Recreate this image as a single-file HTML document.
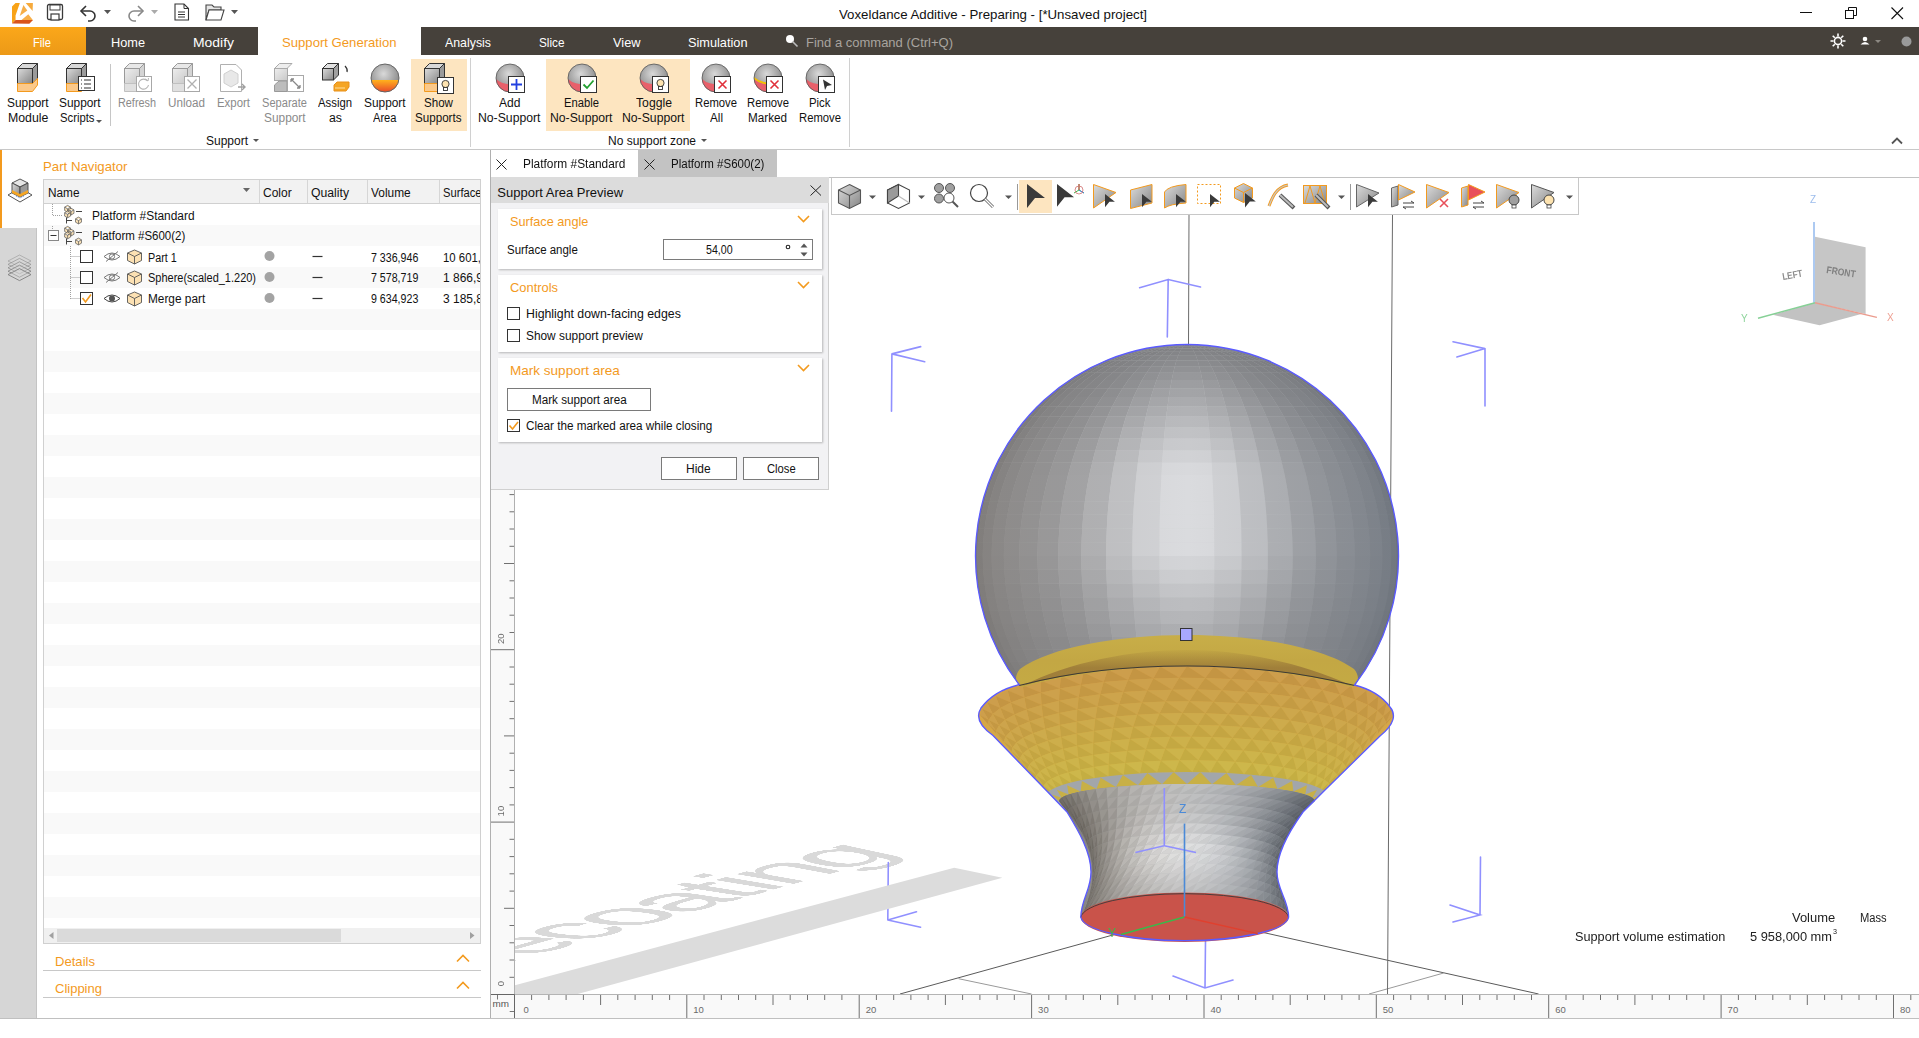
<!DOCTYPE html>
<html><head><meta charset="utf-8">
<style>
*{margin:0;padding:0;box-sizing:border-box}
html,body{width:1919px;height:1038px;overflow:hidden;background:#fff;font-family:"Liberation Sans",sans-serif;font-size:12px;color:#000;position:relative}
.a{position:absolute;display:block}
.t{position:absolute;white-space:nowrap;line-height:1;transform-origin:0 0}
</style></head><body>
<div class="t" style="left:839.00px;top:8.40px;font-size:13px;color:#111;transform:scaleX(1.0197);">Voxeldance Additive - Preparing - [*Unsaved project]</div>
<svg class="a" style="left:8px;top:0px;" width="28" height="27" viewBox="0 0 28 27"><path d="M4 6.5 L7.55 3 H11.85 L7.55 15.6 V20.05 L4 23.6Z" fill="#f8a318"/>
<path d="M15.4 4.95 L19.3 10.4 L11.7 15.9Z" fill="#f6ae48"/>
<path d="M17.7 3 H24.9 L24.6 10.9Z" fill="#f6aa3c"/>
<path d="M13.5 20.05 L20.3 14.2 L25 20.3Z" fill="#f7ae48"/>
<path d="M4 23.6 L7.55 20.05 H25 L21.35 23.8Z" fill="#d9541a"/></svg>
<svg class="a" style="left:46px;top:3px;" width="18" height="18" viewBox="0 0 18 18"><rect x="1.5" y="1.5" width="15" height="15" rx="1.5" fill="#fff" stroke="#3a3a3a" stroke-width="1.3"/><rect x="4" y="2" width="10" height="5" fill="#fff" stroke="#3a3a3a" stroke-width="1"/><rect x="5" y="11" width="8" height="6" fill="#fff" stroke="#3a3a3a" stroke-width="1.2"/></svg>
<svg class="a" style="left:78px;top:3px;" width="22" height="20" viewBox="0 0 22 20"><path d="M4 8 H12 A5 5 0 0 1 12 18 H10" fill="none" stroke="#333" stroke-width="1.6"/><path d="M8 3 L3 8 L8 13" fill="none" stroke="#333" stroke-width="1.6"/></svg>
<svg class="a" style="left:104px;top:10px;" width="8" height="5" viewBox="0 0 8 5"><path d="M0 0 H7 L3.5 4Z" fill="#555"/></svg>
<svg class="a" style="left:124px;top:3px;" width="22" height="20" viewBox="0 0 22 20"><path d="M18 8 H10 A5 5 0 0 0 10 18 H12" fill="none" stroke="#888" stroke-width="1.6"/><path d="M14 3 L19 8 L14 13" fill="none" stroke="#888" stroke-width="1.6"/></svg>
<svg class="a" style="left:151px;top:10px;" width="8" height="5" viewBox="0 0 8 5"><path d="M0 0 H7 L3.5 4Z" fill="#aaa"/></svg>
<svg class="a" style="left:174px;top:3px;" width="16" height="18" viewBox="0 0 16 18"><path d="M1 1 H10 L14.5 5.5 V17 H1Z" fill="#fff" stroke="#333" stroke-width="1.1"/><path d="M10 1 V5.5 H14.5" fill="none" stroke="#333"/><path d="M4 9H11M4 11.5H11M4 14H11" stroke="#333" stroke-width="1"/></svg>
<svg class="a" style="left:205px;top:3px;" width="20" height="18" viewBox="0 0 20 18"><path d="M1 2 H7 L9 4 H16 V7 H4 L1 17Z" fill="#e6e6e6" stroke="#444" stroke-width="1.1"/><path d="M1 17 L4 7 H19 L16 17Z" fill="#fff" stroke="#444" stroke-width="1.1"/></svg>
<svg class="a" style="left:231px;top:10px;" width="8" height="5" viewBox="0 0 8 5"><path d="M0 0 H7 L3.5 4Z" fill="#555"/></svg>
<div class="a" style="left:1800px;top:12px;width:12px;height:1px;background:#111;"></div>
<svg class="a" style="left:1845px;top:7px;" width="12" height="12" viewBox="0 0 12 12"><rect x="0.5" y="3.5" width="8" height="8" fill="none" stroke="#111"/><path d="M3.5 3.5 V0.5 H11.5 V8.5 H8.5" fill="none" stroke="#111"/></svg>
<svg class="a" style="left:1891px;top:7px;" width="13" height="13" viewBox="0 0 13 13"><path d="M0.5 0.5 L12 12 M12 0.5 L0.5 12" stroke="#111" stroke-width="1.1"/></svg>
<div class="a" style="left:0px;top:27px;width:1919px;height:28px;background:#46413b;"></div>
<div class="a" style="left:0px;top:27px;width:86px;height:28px;background:linear-gradient(#fba71a,#ec9917);"></div>
<div class="t" style="left:33.00px;top:35.50px;font-size:13px;color:#fff;transform:scaleX(0.8591);">File</div>
<div class="t" style="left:110.50px;top:35.50px;font-size:13px;color:#fff;transform:scaleX(0.9802);">Home</div>
<div class="t" style="left:193.00px;top:35.50px;font-size:13px;color:#fff;transform:scaleX(1.0706);">Modify</div>
<div class="a" style="left:258px;top:27px;width:163px;height:28px;background:#fff;"></div>
<div class="t" style="left:282.00px;top:35.50px;font-size:13px;color:#f39a1e;transform:scaleX(1.0091);">Support Generation</div>
<div class="t" style="left:445.00px;top:35.50px;font-size:13px;color:#fff;transform:scaleX(0.9500);">Analysis</div>
<div class="t" style="left:539.00px;top:35.50px;font-size:13px;color:#fff;transform:scaleX(0.9047);">Slice</div>
<div class="t" style="left:612.50px;top:35.50px;font-size:13px;color:#fff;transform:scaleX(0.9838);">View</div>
<div class="t" style="left:688.00px;top:35.50px;font-size:13px;color:#fff;transform:scaleX(0.9802);">Simulation</div>
<svg class="a" style="left:785px;top:34px;" width="14" height="14" viewBox="0 0 14 14"><circle cx="5" cy="5" r="4" fill="#fff"/><path d="M7.5 7.5 L12.5 12.5" stroke="#bbb" stroke-width="1.6"/></svg>
<div class="t" style="left:806.00px;top:35.50px;font-size:13px;color:#a8a49f;">Find a command (Ctrl+Q)</div>
<svg class="a" style="left:1830px;top:33px;" width="16" height="16" viewBox="0 0 16 16"><g fill="none" stroke="#fff" stroke-width="1.6"><circle cx="8" cy="8" r="3.6"/><path d="M8 0.5V3.5M8 12.5V15.5M0.5 8H3.5M12.5 8H15.5M2.7 2.7L4.8 4.8M11.2 11.2L13.3 13.3M13.3 2.7L11.2 4.8M4.8 11.2L2.7 13.3"/></g></svg>
<svg class="a" style="left:1860px;top:36px;" width="10" height="9" viewBox="0 0 10 9"><circle cx="5" cy="3" r="2.3" fill="#fff"/><path d="M0.5 8.5 Q5 3.5 9.5 8.5Z" fill="#fff"/></svg>
<svg class="a" style="left:1875px;top:40px;" width="6" height="4" viewBox="0 0 6 4"><path d="M0 0H6L3 3Z" fill="#8c8882"/></svg>
<svg class="a" style="left:1901px;top:36px;" width="11" height="11" viewBox="0 0 11 11"><circle cx="5.5" cy="5.5" r="5" fill="#9a9a9a"/></svg>
<div class="a" style="left:0px;top:55px;width:1919px;height:94px;background:#fff;"></div>
<div class="a" style="left:0px;top:149px;width:1919px;height:1px;background:#c8c8c8;"></div>
<div class="a" style="left:411px;top:59px;width:56px;height:72px;background:#fde5c0;"></div>
<div class="a" style="left:546px;top:59px;width:144px;height:72px;background:#fde5c0;"></div>
<div class="a" style="left:110px;top:64px;width:1px;height:62px;background:#c6c6c6;"></div>
<div class="a" style="left:470px;top:58px;width:1px;height:89px;background:#d0d0d0;"></div>
<div class="a" style="left:849px;top:58px;width:1px;height:89px;background:#d0d0d0;"></div>
<svg class="a" style="left:1891px;top:137px;" width="12" height="8" viewBox="0 0 12 8"><path d="M1 6.5 L6 1.5 L11 6.5" fill="none" stroke="#555" stroke-width="1.8"/></svg>
<svg class="a" style="left:0;top:0" width="0" height="0"><defs>
<linearGradient id="cg" x1="0" y1="0" x2="1" y2="1"><stop offset="0" stop-color="#dcdcdc"/><stop offset="1" stop-color="#858585"/></linearGradient>
<linearGradient id="cgg" x1="0" y1="0" x2="1" y2="1"><stop offset="0" stop-color="#eeeeee"/><stop offset="1" stop-color="#c8c8c8"/></linearGradient>
<radialGradient id="sg" cx="0.45" cy="0.35" r="0.7"><stop offset="0" stop-color="#d9d9d9"/><stop offset="1" stop-color="#7d7d7d"/></radialGradient>
<linearGradient id="og" x1="0" y1="0" x2="0" y2="1"><stop offset="0" stop-color="#ffb21c"/><stop offset="1" stop-color="#e8402a"/></linearGradient>
</defs></svg>
<svg class="a" style="left:0;top:0" width="900" height="150"><g transform="translate(17,63)">
<path d="M0.5 5.5 L5.5 0.5 H20.5 L15.5 5.5Z" fill="#d8d8d8" stroke="#333" stroke-width="1"/>
<path d="M15.5 5.5 L20.5 0.5 V15.5 L15.5 20.5Z" fill="#9a9a9a" stroke="#333" stroke-width="1"/>
<rect x="0.5" y="5.5" width="15" height="15" fill="url(#cg)" stroke="#333" stroke-width="1"/>
<path d="M0.5 20.5 H15.5 L20.5 15.5 V22 L15.5 28.5 H0.5Z" fill="#fbc98a" stroke="#f39a1e" stroke-width="1"/>
</g><g transform="translate(66,63)">
<path d="M0.5 5.5 L5.5 0.5 H20.5 L15.5 5.5Z" fill="#d8d8d8" stroke="#333" stroke-width="1"/>
<path d="M15.5 5.5 L20.5 0.5 V15.5 L15.5 20.5Z" fill="#9a9a9a" stroke="#333" stroke-width="1"/>
<rect x="0.5" y="5.5" width="15" height="15" fill="url(#cg)" stroke="#333" stroke-width="1"/>
<path d="M0.5 20.5 H15.5 L20.5 15.5 V22 L15.5 28.5 H0.5Z" fill="#fbc98a" stroke="#f39a1e" stroke-width="1"/>
</g><g transform="translate(78,76)"><rect x="0.5" y="0.5" width="16" height="14" fill="#fff" stroke="#333" stroke-width="1"/><path d="M3 4H4M6 4H13M3 8H4M6 8H13M3 12H4M6 12H13" stroke="#333" stroke-width="1.2"/></g><g transform="translate(124,63)">
<path d="M0.5 5.5 L5.5 0.5 H20.5 L15.5 5.5Z" fill="#e8e8e8" stroke="#9a9a9a" stroke-width="1"/>
<path d="M15.5 5.5 L20.5 0.5 V15.5 L15.5 20.5Z" fill="#d4d4d4" stroke="#9a9a9a" stroke-width="1"/>
<rect x="0.5" y="5.5" width="15" height="15" fill="url(#cgg)" stroke="#9a9a9a" stroke-width="1"/>
<path d="M0.5 20.5 H15.5 L20.5 15.5 V22 L15.5 28.5 H0.5Z" fill="#e0e0e0" stroke="#c0c0c0" stroke-width="1"/>
</g><g transform="translate(136,76)"><rect x="0.5" y="0.5" width="15" height="15" fill="#fff" stroke="#a8a8a8"/><path d="M11.5 5 A5 5 0 1 0 12.5 9" fill="none" stroke="#b5b5b5" stroke-width="1.1"/><path d="M9.5 3 L12 5 L12.5 2" fill="none" stroke="#b5b5b5"/></g><g transform="translate(172,63)">
<path d="M0.5 5.5 L5.5 0.5 H20.5 L15.5 5.5Z" fill="#e8e8e8" stroke="#9a9a9a" stroke-width="1"/>
<path d="M15.5 5.5 L20.5 0.5 V15.5 L15.5 20.5Z" fill="#d4d4d4" stroke="#9a9a9a" stroke-width="1"/>
<rect x="0.5" y="5.5" width="15" height="15" fill="url(#cgg)" stroke="#9a9a9a" stroke-width="1"/>
<path d="M0.5 20.5 H15.5 L20.5 15.5 V22 L15.5 28.5 H0.5Z" fill="#e0e0e0" stroke="#c0c0c0" stroke-width="1"/>
</g><g transform="translate(184,76)"><rect x="0.5" y="0.5" width="15" height="15" fill="#fff" stroke="#a8a8a8"/><path d="M3.5 3.5 L12.5 12.5 M12.5 3.5 L3.5 12.5" stroke="#b0b0b0" stroke-width="1.3"/></g><g transform="translate(220,64)"><path d="M0.5 0.5 H16 L21.5 6 V27.5 H0.5Z" fill="#fff" stroke="#b0b0b0"/><path d="M4 10 L11 6 L18 10 V19 L11 23 L4 19Z" fill="#e8e8e8" stroke="#d0d0d0"/><path d="M18 23 H25 M22 20 L25 23 L22 26" fill="none" stroke="#a0a0a0" stroke-width="1.4"/></g><g transform="translate(274,63)"><path d="M0.5 5.5 L5.5 0.5 H18 L13 5.5Z" fill="#eee" stroke="#aaa"/><rect x="0.5" y="5.5" width="13" height="12" fill="url(#cgg)" stroke="#aaa"/><path d="M0.5 22 L5 18 H13 V28.5 H0.5Z" fill="#bcbcbc" stroke="#999"/><rect x="13.5" y="12.5" width="16" height="16" fill="#fff" stroke="#a8a8a8"/><path d="M17 16 L26 25 M17 16 h3 M17 16 v3 M26 25 h-3 M26 25 v-3" stroke="#888" stroke-width="1.3" fill="none"/></g><g transform="translate(322,63)"><path d="M0.5 5.5 L5.5 0.5 H16.5 L11.5 5.5Z" fill="#e2e2e2" stroke="#333"/><path d="M11.5 5.5 L16.5 0.5 V12 L11.5 17Z" fill="#a0a0a0" stroke="#333"/><rect x="0.5" y="5.5" width="11" height="11.5" fill="url(#cg)" stroke="#333"/><path d="M23 3 Q26 6 25 9" fill="none" stroke="#333" stroke-width="1.2"/><path d="M12 22 L15 19 H27 V24 L24 28 H12Z" fill="#f5a524" stroke="#e8901a"/><path d="M13 25 H23" stroke="#ffe0a0" stroke-width="1"/></g><g transform="translate(370,63)"><clipPath id="sc1"><circle cx="15" cy="15" r="14"/></clipPath><circle cx="15" cy="15" r="14" fill="url(#sg)"/><rect x="0" y="17" width="30" height="13" fill="url(#og)" clip-path="url(#sc1)"/><circle cx="15" cy="15" r="14" fill="none" stroke="#666" stroke-width="1"/></g><g transform="translate(424,63)">
<path d="M0.5 5.5 L5.5 0.5 H20.5 L15.5 5.5Z" fill="#d8d8d8" stroke="#333" stroke-width="1"/>
<path d="M15.5 5.5 L20.5 0.5 V15.5 L15.5 20.5Z" fill="#9a9a9a" stroke="#333" stroke-width="1"/>
<rect x="0.5" y="5.5" width="15" height="15" fill="url(#cg)" stroke="#333" stroke-width="1"/>
<path d="M0.5 20.5 H15.5 L20.5 15.5 V22 L15.5 28.5 H0.5Z" fill="#fbc98a" stroke="#f39a1e" stroke-width="1"/>
</g><g transform="translate(437,77)"><rect x="0.5" y="0.5" width="16" height="16" fill="#fff" stroke="#333"/><circle cx="8.5" cy="7" r="3.6" fill="#fde3b0" stroke="#333" stroke-width="0.9"/><rect x="6.5" y="10.5" width="4" height="3" fill="#fff" stroke="#333" stroke-width="0.9"/></g><g transform="translate(495,63)"><clipPath id="ns510"><circle cx="15" cy="15" r="14"/></clipPath><circle cx="15" cy="15" r="14" fill="url(#sg)"/><path d="M0 15 Q8 24 30 21 V30 H0Z" fill="#e8606a" clip-path="url(#ns510)"/><circle cx="15" cy="15" r="14" fill="none" stroke="#555" stroke-width="0.8"/><rect x="13.5" y="13.5" width="16" height="16" fill="#fff" stroke="#333"/><path d="M21.5 16 V27 M16 21.5 H27" stroke="#2140e0" stroke-width="1.8"/></g><g transform="translate(567,63)"><clipPath id="ns582"><circle cx="15" cy="15" r="14"/></clipPath><circle cx="15" cy="15" r="14" fill="url(#sg)"/><path d="M0 15 Q8 24 30 21 V30 H0Z" fill="#e8606a" clip-path="url(#ns582)"/><circle cx="15" cy="15" r="14" fill="none" stroke="#555" stroke-width="0.8"/><rect x="13.5" y="13.5" width="16" height="16" fill="#fff" stroke="#333"/><path d="M16.5 21.5 L20 25 L26.5 17.5" fill="none" stroke="#22a030" stroke-width="1.8"/></g><g transform="translate(639,63)"><clipPath id="ns654"><circle cx="15" cy="15" r="14"/></clipPath><circle cx="15" cy="15" r="14" fill="url(#sg)"/><path d="M0 15 Q8 24 30 21 V30 H0Z" fill="#e8606a" clip-path="url(#ns654)"/><circle cx="15" cy="15" r="14" fill="none" stroke="#555" stroke-width="0.8"/><rect x="13.5" y="13.5" width="16" height="16" fill="#fff" stroke="#333"/><circle cx="21.5" cy="20" r="3.6" fill="#fde3b0" stroke="#333" stroke-width="0.9"/><rect x="19.5" y="23.5" width="4" height="3" fill="#fff" stroke="#333" stroke-width="0.9"/></g><g transform="translate(701,63)"><clipPath id="ns716"><circle cx="15" cy="15" r="14"/></clipPath><circle cx="15" cy="15" r="14" fill="url(#sg)"/><path d="M0 15 Q8 24 30 21 V30 H0Z" fill="#e8606a" clip-path="url(#ns716)"/><circle cx="15" cy="15" r="14" fill="none" stroke="#555" stroke-width="0.8"/><rect x="13.5" y="13.5" width="16" height="16" fill="#fff" stroke="#333"/><path d="M17.5 17.5 L25.5 25.5 M25.5 17.5 L17.5 25.5" stroke="#e0303a" stroke-width="1.6"/></g><g transform="translate(753,63)"><clipPath id="ns768"><circle cx="15" cy="15" r="14"/></clipPath><circle cx="15" cy="15" r="14" fill="url(#sg)"/><path d="M0 15 Q8 24 30 21 V30 H0Z" fill="#e8606a" clip-path="url(#ns768)"/><path d="M0 13 Q8 22 30 19 L30 21 Q8 24 0 15Z" fill="#f5c000" clip-path="url(#ns768)"/><circle cx="15" cy="15" r="14" fill="none" stroke="#555" stroke-width="0.8"/><rect x="13.5" y="13.5" width="16" height="16" fill="#fff" stroke="#333"/><path d="M17.5 17.5 L25.5 25.5 M25.5 17.5 L17.5 25.5" stroke="#e0303a" stroke-width="1.6"/></g><g transform="translate(805,63)"><clipPath id="ns820"><circle cx="15" cy="15" r="14"/></clipPath><circle cx="15" cy="15" r="14" fill="url(#sg)"/><path d="M0 15 Q8 24 30 21 V30 H0Z" fill="#e8606a" clip-path="url(#ns820)"/><circle cx="15" cy="15" r="14" fill="none" stroke="#555" stroke-width="0.8"/><rect x="13.5" y="13.5" width="16" height="16" fill="#fff" stroke="#333"/><path d="M18 16.5 L27 22 L22 23 L20 27Z" fill="#333"/></g></svg>
<div class="t" style="left:7.20px;top:96.82px;font-size:12.5px;color:#111;transform:scaleX(0.9502);">Support</div>
<div class="t" style="left:7.80px;top:112.12px;font-size:12.5px;color:#111;transform:scaleX(0.9854);">Module</div>
<div class="t" style="left:59.30px;top:96.82px;font-size:12.5px;color:#111;transform:scaleX(0.9502);">Support</div>
<div class="t" style="left:60.00px;top:112.12px;font-size:12.5px;color:#111;transform:scaleX(0.9031);">Scripts</div>
<svg class="a" style="left:96px;top:120px;" width="6" height="4" viewBox="0 0 6 4"><path d="M0 0H6L3 3Z" fill="#555"/></svg>
<div class="t" style="left:118.30px;top:96.82px;font-size:12.5px;color:#8a8a8a;transform:scaleX(0.8680);">Refresh</div>
<div class="t" style="left:167.50px;top:96.82px;font-size:12.5px;color:#8a8a8a;transform:scaleX(0.9338);">Unload</div>
<div class="t" style="left:217.00px;top:96.82px;font-size:12.5px;color:#8a8a8a;transform:scaleX(0.9131);">Export</div>
<div class="t" style="left:262.00px;top:96.82px;font-size:12.5px;color:#8a8a8a;transform:scaleX(0.8870);">Separate</div>
<div class="t" style="left:263.70px;top:112.12px;font-size:12.5px;color:#8a8a8a;transform:scaleX(0.9502);">Support</div>
<div class="t" style="left:318.00px;top:96.82px;font-size:12.5px;color:#111;transform:scaleX(0.9059);">Assign</div>
<div class="t" style="left:328.50px;top:112.12px;font-size:12.5px;color:#111;transform:scaleX(0.9846);">as</div>
<div class="t" style="left:364.20px;top:96.82px;font-size:12.5px;color:#111;transform:scaleX(0.9502);">Support</div>
<div class="t" style="left:373.25px;top:112.12px;font-size:12.5px;color:#111;transform:scaleX(0.8899);">Area</div>
<div class="t" style="left:424.00px;top:96.82px;font-size:12.5px;color:#111;transform:scaleX(0.9271);">Show</div>
<div class="t" style="left:415.25px;top:112.12px;font-size:12.5px;color:#111;transform:scaleX(0.9294);">Supports</div>
<div class="t" style="left:498.75px;top:96.82px;font-size:12.5px;color:#111;transform:scaleX(0.9663);">Add</div>
<div class="t" style="left:478.25px;top:112.12px;font-size:12.5px;color:#111;transform:scaleX(0.9775);">No-Support</div>
<div class="t" style="left:564.00px;top:96.82px;font-size:12.5px;color:#111;transform:scaleX(0.8989);">Enable</div>
<div class="t" style="left:550.25px;top:112.12px;font-size:12.5px;color:#111;transform:scaleX(0.9775);">No-Support</div>
<div class="t" style="left:635.50px;top:96.82px;font-size:12.5px;color:#111;transform:scaleX(0.9771);">Toggle</div>
<div class="t" style="left:622.25px;top:112.12px;font-size:12.5px;color:#111;transform:scaleX(0.9775);">No-Support</div>
<div class="t" style="left:695.00px;top:96.82px;font-size:12.5px;color:#111;transform:scaleX(0.9023);">Remove</div>
<div class="t" style="left:709.50px;top:112.12px;font-size:12.5px;color:#111;transform:scaleX(0.9348);">All</div>
<div class="t" style="left:746.50px;top:96.82px;font-size:12.5px;color:#111;transform:scaleX(0.9023);">Remove</div>
<div class="t" style="left:748.00px;top:112.12px;font-size:12.5px;color:#111;transform:scaleX(0.9355);">Marked</div>
<div class="t" style="left:808.75px;top:96.82px;font-size:12.5px;color:#111;transform:scaleX(0.9101);">Pick</div>
<div class="t" style="left:798.50px;top:112.12px;font-size:12.5px;color:#111;transform:scaleX(0.9023);">Remove</div>
<div class="t" style="left:206.00px;top:135.12px;font-size:12.5px;color:#111;transform:scaleX(0.9593);">Support</div>
<svg class="a" style="left:253px;top:139px;" width="6" height="4" viewBox="0 0 6 4"><path d="M0 0H6L3 3Z" fill="#555"/></svg>
<div class="t" style="left:608.00px;top:135.12px;font-size:12.5px;color:#111;transform:scaleX(0.9593);">No support zone</div>
<svg class="a" style="left:701px;top:139px;" width="6" height="4" viewBox="0 0 6 4"><path d="M0 0H6L3 3Z" fill="#555"/></svg>
<div class="a" style="left:0px;top:150px;width:37px;height:868px;background:#d6d6d6;"></div>
<div class="a" style="left:36px;top:150px;width:1px;height:868px;background:#c4c4c4;"></div>
<div class="a" style="left:0px;top:150px;width:37px;height:78px;background:#fff;"></div>
<div class="a" style="left:0px;top:150px;width:2px;height:78px;background:#f39a1e;"></div>
<svg class="a" style="left:7px;top:175px;" width="26" height="30" viewBox="0 0 26 30"><path d="M1 20 L13 13 L25 20 L13 27Z" fill="#fff" stroke="#555" stroke-width="1"/>
<path d="M5 8 L13 4 L21 8 L13 12Z" fill="#e6e6e6" stroke="#444" stroke-width="0.9"/>
<path d="M5 8 V18 L13 22 V12Z" fill="url(#cg)" stroke="#444" stroke-width="0.9"/>
<path d="M21 8 V18 L13 22 V12Z" fill="#9a9a9a" stroke="#444" stroke-width="0.9"/>
<path d="M5 15 L13 19 L21 15 V18 L13 22 L5 18Z" fill="#f6a623"/>
<path d="M9 21 L13 23 L17 21" fill="none" stroke="#4a7fe0" stroke-width="0.8" stroke-dasharray="1 1"/></svg>
<svg class="a" style="left:7px;top:254px;" width="25" height="29" viewBox="0 0 25 29"><path d="M1 7.0 L12.5 1.0 L24 7.0 L12.5 13.0Z" fill="#d6d6d6" fill-opacity="0.35"/><path d="M1 7.0 L12.5 1.0 L24 7.0 L12.5 13.0Z" fill="none" stroke="#7a7a7a" stroke-opacity="0.45" stroke-width="0.9"/><path d="M1 10.4 L12.5 4.4 L24 10.4 L12.5 16.4Z" fill="#d6d6d6" fill-opacity="0.35"/><path d="M1 10.4 L12.5 4.4 L24 10.4 L12.5 16.4Z" fill="none" stroke="#7a7a7a" stroke-opacity="0.57" stroke-width="0.9"/><path d="M1 13.8 L12.5 7.8 L24 13.8 L12.5 19.8Z" fill="#d6d6d6" fill-opacity="0.35"/><path d="M1 13.8 L12.5 7.8 L24 13.8 L12.5 19.8Z" fill="none" stroke="#7a7a7a" stroke-opacity="0.69" stroke-width="0.9"/><path d="M1 17.2 L12.5 11.2 L24 17.2 L12.5 23.2Z" fill="#d6d6d6" fill-opacity="0.35"/><path d="M1 17.2 L12.5 11.2 L24 17.2 L12.5 23.2Z" fill="none" stroke="#7a7a7a" stroke-opacity="0.81" stroke-width="0.9"/><path d="M1 20.6 L12.5 14.6 L24 20.6 L12.5 26.6Z" fill="#d6d6d6" fill-opacity="0.35"/><path d="M1 20.6 L12.5 14.6 L24 20.6 L12.5 26.6Z" fill="none" stroke="#7a7a7a" stroke-opacity="0.93" stroke-width="0.9"/></svg>
<div class="a" style="left:37px;top:150px;width:453px;height:868px;background:#fff;"></div>
<div class="t" style="left:43.00px;top:159.90px;font-size:13px;color:#f39a1e;transform:scaleX(1.0169);">Part Navigator</div>
<div class="a" style="left:43px;top:179px;width:438px;height:765px;background:#fff;border:1px solid #d0d0d0;"></div>
<div class="a" style="left:44px;top:225px;width:436px;height:21px;background:#f9f9f9;"></div>
<div class="a" style="left:44px;top:267px;width:436px;height:21px;background:#f9f9f9;"></div>
<div class="a" style="left:44px;top:309px;width:436px;height:21px;background:#f9f9f9;"></div>
<div class="a" style="left:44px;top:351px;width:436px;height:21px;background:#f9f9f9;"></div>
<div class="a" style="left:44px;top:393px;width:436px;height:21px;background:#f9f9f9;"></div>
<div class="a" style="left:44px;top:435px;width:436px;height:21px;background:#f9f9f9;"></div>
<div class="a" style="left:44px;top:477px;width:436px;height:21px;background:#f9f9f9;"></div>
<div class="a" style="left:44px;top:519px;width:436px;height:21px;background:#f9f9f9;"></div>
<div class="a" style="left:44px;top:561px;width:436px;height:21px;background:#f9f9f9;"></div>
<div class="a" style="left:44px;top:603px;width:436px;height:21px;background:#f9f9f9;"></div>
<div class="a" style="left:44px;top:645px;width:436px;height:21px;background:#f9f9f9;"></div>
<div class="a" style="left:44px;top:687px;width:436px;height:21px;background:#f9f9f9;"></div>
<div class="a" style="left:44px;top:729px;width:436px;height:21px;background:#f9f9f9;"></div>
<div class="a" style="left:44px;top:771px;width:436px;height:21px;background:#f9f9f9;"></div>
<div class="a" style="left:44px;top:813px;width:436px;height:21px;background:#f9f9f9;"></div>
<div class="a" style="left:44px;top:855px;width:436px;height:21px;background:#f9f9f9;"></div>
<div class="a" style="left:44px;top:897px;width:436px;height:21px;background:#f9f9f9;"></div>
<div class="a" style="left:44px;top:180px;width:436px;height:24px;background:#f2f2f2;border-bottom:1px solid #d0d0d0;"></div>
<div class="a" style="left:259px;top:180px;width:1px;height:23px;background:#d6d6d6;"></div>
<div class="a" style="left:307px;top:180px;width:1px;height:23px;background:#d6d6d6;"></div>
<div class="a" style="left:367px;top:180px;width:1px;height:23px;background:#d6d6d6;"></div>
<div class="a" style="left:439px;top:180px;width:1px;height:23px;background:#d6d6d6;"></div>
<div class="t" style="left:47.50px;top:186.62px;font-size:12.5px;color:#111;transform:scaleX(0.9447);">Name</div>
<svg class="a" style="left:243px;top:188px;" width="8" height="5" viewBox="0 0 8 5"><path d="M0 0H7L3.5 4Z" fill="#666"/></svg>
<div class="t" style="left:263.00px;top:186.62px;font-size:12.5px;color:#111;transform:scaleX(0.9607);">Color</div>
<div class="t" style="left:310.70px;top:186.62px;font-size:12.5px;color:#111;transform:scaleX(0.9767);">Quality</div>
<div class="t" style="left:371.00px;top:186.62px;font-size:12.5px;color:#111;transform:scaleX(0.9520);">Volume</div>
<div class="t" style="left:443.00px;top:186.62px;font-size:12.5px;color:#111;transform:scaleX(0.8934);">Surface</div>
<svg class="a" style="left:0;top:0" width="490" height="320"><g stroke="#a0a0a0" stroke-width="1" stroke-dasharray="1 1" fill="none"><path d="M52.5 204 V215.5 H63"/><path d="M52.5 226 V236"/><path d="M70.5 246 V299 M70.5 256.5 H80 M70.5 277.5 H80 M70.5 298.5 H80"/></g><g transform="translate(64,205)"><path d="M3.6 0.3999999999999999 L6.558 2.0999999999999996 V5.5 L3.6 7.199999999999999 L0.6420000000000003 5.5 V2.0999999999999996Z M0.6420000000000003 2.0999999999999996 L3.6 3.8 L6.558 2.0999999999999996 M3.6 3.8 V7.199999999999999" fill="#fbe3b8" stroke="#555" stroke-width="0.7"/><path d="M7 3.1999999999999997 L9.958 4.8999999999999995 V8.299999999999999 L7 10.0 L4.042 8.299999999999999 V4.8999999999999995Z M4.042 4.8999999999999995 L7 6.6 L9.958 4.8999999999999995 M7 6.6 V10.0" fill="#fbe3b8" stroke="#555" stroke-width="0.7"/><path d="M3.6 6.0 L6.558 7.7 V11.1 L3.6 12.8 L0.6420000000000003 11.1 V7.7Z M0.6420000000000003 7.7 L3.6 9.4 L6.558 7.7 M3.6 9.4 V12.8" fill="#fbe3b8" stroke="#555" stroke-width="0.7"/><path d="M12 6.5H18 M2.5 12.5V18.5 M2.5 15.5H8" fill="none" stroke="#444" stroke-width="1"/><path d="M14.5 12.1 L17.458 13.8 V17.2 L14.5 18.9 L11.542 17.2 V13.8Z M11.542 13.8 L14.5 15.5 L17.458 13.8 M14.5 15.5 V18.9" fill="#fbe3b8" stroke="#555" stroke-width="0.7"/></g><g transform="translate(64,226)"><path d="M3.6 0.3999999999999999 L6.558 2.0999999999999996 V5.5 L3.6 7.199999999999999 L0.6420000000000003 5.5 V2.0999999999999996Z M0.6420000000000003 2.0999999999999996 L3.6 3.8 L6.558 2.0999999999999996 M3.6 3.8 V7.199999999999999" fill="#fbe3b8" stroke="#555" stroke-width="0.7"/><path d="M7 3.1999999999999997 L9.958 4.8999999999999995 V8.299999999999999 L7 10.0 L4.042 8.299999999999999 V4.8999999999999995Z M4.042 4.8999999999999995 L7 6.6 L9.958 4.8999999999999995 M7 6.6 V10.0" fill="#fbe3b8" stroke="#555" stroke-width="0.7"/><path d="M3.6 6.0 L6.558 7.7 V11.1 L3.6 12.8 L0.6420000000000003 11.1 V7.7Z M0.6420000000000003 7.7 L3.6 9.4 L6.558 7.7 M3.6 9.4 V12.8" fill="#fbe3b8" stroke="#555" stroke-width="0.7"/><path d="M12 6.5H18 M2.5 12.5V18.5 M2.5 15.5H8" fill="none" stroke="#444" stroke-width="1"/><path d="M14.5 12.1 L17.458 13.8 V17.2 L14.5 18.9 L11.542 17.2 V13.8Z M11.542 13.8 L14.5 15.5 L17.458 13.8 M14.5 15.5 V18.9" fill="#fbe3b8" stroke="#555" stroke-width="0.7"/></g><rect x="48.5" y="230.5" width="10" height="10" fill="#fff" stroke="#888"/><path d="M50.5 235.5 H56.5" stroke="#333"/><rect x="80.5" y="250.5" width="12" height="12" fill="#fff" stroke="#333"/><path d="M104 256.5 Q112 249.5 120 256.5 Q112 263.5 104 256.5Z" fill="none" stroke="#777" stroke-width="1"/><circle cx="112" cy="256.5" r="2.6" fill="none" stroke="#777"/><path d="M106 261.5 L118 251.5" stroke="#777"/><g transform="translate(127,249.5)" stroke="#555" stroke-width="0.9"><path d="M7.5 0.5 L14.5 3.5 V11 L7.5 14.5 L0.5 11 V3.5Z" fill="#fce1b3"/><path d="M0.5 3.5 L7.5 7 L14.5 3.5 M7.5 7 V14.5" fill="none"/></g><circle cx="269.5" cy="256" r="5" fill="#a3a3a3"/><path d="M312.5 256.5 H322.5" stroke="#333" stroke-width="1.2"/><rect x="80.5" y="271.5" width="12" height="12" fill="#fff" stroke="#333"/><path d="M104 277.5 Q112 270.5 120 277.5 Q112 284.5 104 277.5Z" fill="none" stroke="#777" stroke-width="1"/><circle cx="112" cy="277.5" r="2.6" fill="none" stroke="#777"/><path d="M106 282.5 L118 272.5" stroke="#777"/><g transform="translate(127,270.5)" stroke="#555" stroke-width="0.9"><path d="M7.5 0.5 L14.5 3.5 V11 L7.5 14.5 L0.5 11 V3.5Z" fill="#fce1b3"/><path d="M0.5 3.5 L7.5 7 L14.5 3.5 M7.5 7 V14.5" fill="none"/></g><circle cx="269.5" cy="277" r="5" fill="#a3a3a3"/><path d="M312.5 277.5 H322.5" stroke="#333" stroke-width="1.2"/><rect x="80.5" y="292.5" width="12" height="12" fill="#fff" stroke="#333"/><path d="M82.5 298 L85.5 302 L91 294.5" fill="none" stroke="#f39a1e" stroke-width="1.6"/><path d="M104 298.5 Q112 291.5 120 298.5 Q112 305.5 104 298.5Z" fill="#fff" stroke="#444" stroke-width="1"/><circle cx="112" cy="298.5" r="3" fill="#555"/><g transform="translate(127,291.5)" stroke="#555" stroke-width="0.9"><path d="M7.5 0.5 L14.5 3.5 V11 L7.5 14.5 L0.5 11 V3.5Z" fill="#fce1b3"/><path d="M0.5 3.5 L7.5 7 L14.5 3.5 M7.5 7 V14.5" fill="none"/></g><circle cx="269.5" cy="298" r="5" fill="#a3a3a3"/><path d="M312.5 298.5 H322.5" stroke="#333" stroke-width="1.2"/></svg>
<div class="t" style="left:92.00px;top:209.62px;font-size:12.5px;color:#111;transform:scaleX(0.9517);">Platform #Standard</div>
<div class="t" style="left:92.00px;top:230.32px;font-size:12.5px;color:#111;transform:scaleX(0.9198);">Platform #S600(2)</div>
<div class="t" style="left:148.30px;top:251.62px;font-size:12.5px;color:#111;transform:scaleX(0.8633);">Part 1</div>
<div class="t" style="left:148.30px;top:272.32px;font-size:12.5px;color:#111;transform:scaleX(0.8780);">Sphere(scaled_1.220)</div>
<div class="t" style="left:148.30px;top:293.32px;font-size:12.5px;color:#111;transform:scaleX(0.9462);">Merge part</div>
<div class="t" style="left:371.00px;top:251.62px;font-size:12.5px;color:#111;transform:scaleX(0.8506);">7 336,946</div>
<div class="t" style="left:371.00px;top:272.32px;font-size:12.5px;color:#111;transform:scaleX(0.8506);">7 578,719</div>
<div class="t" style="left:371.00px;top:293.32px;font-size:12.5px;color:#111;transform:scaleX(0.8506);">9 634,923</div>
<div class="t" style="left:443.00px;top:251.62px;font-size:12.5px;color:#111;transform:scaleX(0.9109);">10 601,</div>
<div class="t" style="left:443.00px;top:272.32px;font-size:12.5px;color:#111;transform:scaleX(0.9588);">1 866,9</div>
<div class="t" style="left:443.00px;top:293.32px;font-size:12.5px;color:#111;transform:scaleX(0.9588);">3 185,8</div>
<div class="a" style="left:480px;top:181px;width:1px;height:763px;background:#d0d0d0;"></div>
<div class="a" style="left:481px;top:181px;width:9px;height:125px;background:#fff;"></div>
<div class="a" style="left:44px;top:928px;width:436px;height:15px;background:#f0f0f0;"></div>
<div class="a" style="left:57px;top:929px;width:284px;height:13px;background:#dadada;"></div>
<svg class="a" style="left:49px;top:932px;" width="5" height="7" viewBox="0 0 5 7"><path d="M4.5 0 V7 L0 3.5Z" fill="#a0a0a0"/></svg>
<svg class="a" style="left:470px;top:932px;" width="5" height="7" viewBox="0 0 5 7"><path d="M0 0 V7 L4.5 3.5Z" fill="#a0a0a0"/></svg>
<div class="t" style="left:55.00px;top:954.90px;font-size:13px;color:#f39a1e;transform:scaleX(1.0063);">Details</div>
<svg class="a" style="left:456px;top:954px;" width="14" height="9" viewBox="0 0 14 9"><path d="M1 7.5 L7 1.5 L13 7.5" fill="none" stroke="#f39a1e" stroke-width="1.6"/></svg>
<div class="a" style="left:43px;top:970px;width:438px;height:1px;background:#c8c8c8;"></div>
<div class="t" style="left:55.00px;top:982.20px;font-size:13px;color:#f39a1e;">Clipping</div>
<svg class="a" style="left:456px;top:981px;" width="14" height="9" viewBox="0 0 14 9"><path d="M1 7.5 L7 1.5 L13 7.5" fill="none" stroke="#f39a1e" stroke-width="1.6"/></svg>
<div class="a" style="left:43px;top:997px;width:438px;height:1px;background:#c8c8c8;"></div>
<div class="a" style="left:0px;top:1018px;width:1919px;height:1px;background:#c0c0c0;"></div>
<div class="a" style="left:490px;top:150px;width:1px;height:868px;background:#b0b0b0;"></div>
<div class="a" style="left:491px;top:150px;width:1428px;height:867px;background:#fff;"></div>
<div class="a" style="left:0;top:0;width:1919px;height:994px;overflow:hidden;clip-path:inset(177px 0 0 491px)"><div style="position:absolute;left:0;top:0;width:420px;height:100px;font-family:Liberation Sans;font-size:100px;line-height:100px;white-space:nowrap;color:#d9d9d9;-webkit-text-stroke:0.8px #d9d9d9;transform-origin:0 0;transform:matrix3d(0.97418361,-0.36032924,0,-8.3394869e-05,1.9465326,1.0764947,0,0.00099347676,0,0,1,0,378.1218,954.25266,0,1) translate(0px,5.925px) scale(1.1,0.93)"><span style="position:absolute;left:-1.51px;top:0">r</span><span style="position:absolute;left:27.74px;top:0">e</span><span style="position:absolute;left:78.55px;top:0">c</span><span style="position:absolute;left:123.75px;top:0">o</span><span style="position:absolute;left:174.30px;top:0">a</span><span style="position:absolute;left:226.12px;top:0">t</span><span style="position:absolute;left:251.63px;top:0">i</span><span style="position:absolute;left:270.31px;top:0">n</span><span style="position:absolute;left:320.87px;top:0">g</span></div></div>
<svg class="a" style="left:0;top:0" width="1919" height="1038"><defs>
<radialGradient id="sph" gradientUnits="userSpaceOnUse" cx="1185" cy="505" r="250" fx="1180" fy="490" gradientTransform="translate(1185 505) scale(0.95 1.12) translate(-1185 -505)">
<stop offset="0" stop-color="#dcdee0"/><stop offset="0.28" stop-color="#cdcfd1"/><stop offset="0.6" stop-color="#abadaf"/><stop offset="0.85" stop-color="#8c8d8f"/><stop offset="1" stop-color="#747577"/></radialGradient>
<linearGradient id="sphTint" gradientUnits="userSpaceOnUse" x1="975" y1="0" x2="1400" y2="0"><stop offset="0" stop-color="#a08a70" stop-opacity="0.18"/><stop offset="0.5" stop-color="#888" stop-opacity="0"/><stop offset="1" stop-color="#506a88" stop-opacity="0.22"/></linearGradient>
<linearGradient id="sphTop" gradientUnits="userSpaceOnUse" x1="0" y1="345" x2="0" y2="700"><stop offset="0" stop-color="#000" stop-opacity="0.10"/><stop offset="0.35" stop-color="#000" stop-opacity="0"/><stop offset="1" stop-color="#000" stop-opacity="0"/></linearGradient>
<linearGradient id="ring" gradientUnits="userSpaceOnUse" x1="0" y1="635" x2="0" y2="686"><stop offset="0" stop-color="#c8ae48"/><stop offset="0.5" stop-color="#c3a744"/><stop offset="1" stop-color="#c4aa44"/></linearGradient>
<linearGradient id="cone" gradientUnits="userSpaceOnUse" x1="0" y1="670" x2="0" y2="810"><stop offset="0" stop-color="#d59d48"/><stop offset="0.5" stop-color="#d6aa47"/><stop offset="1" stop-color="#cdb843"/></linearGradient>
<linearGradient id="neckH" gradientUnits="userSpaceOnUse" x1="1060" y1="0" x2="1312" y2="0"><stop offset="0" stop-color="#6f6e6d"/><stop offset="0.2" stop-color="#a09e9c"/><stop offset="0.5" stop-color="#c8cacc"/><stop offset="0.8" stop-color="#9ea3a8"/><stop offset="1" stop-color="#656a70"/></linearGradient>
<radialGradient id="neckHL" gradientUnits="userSpaceOnUse" cx="1185" cy="865" r="70"><stop offset="0" stop-color="#e6e8ea" stop-opacity="0.9"/><stop offset="1" stop-color="#e6e8ea" stop-opacity="0"/></radialGradient>
<pattern id="tri" patternUnits="userSpaceOnUse" width="24" height="16" patternTransform="translate(1187 666)"><path d="M0 0 L12 16 L24 0Z" fill="#ffffff" fill-opacity="0.09"/><path d="M0 16 L12 0 L24 16Z" fill="#000" fill-opacity="0.045"/></pattern>
<pattern id="zig" patternUnits="userSpaceOnUse" width="18" height="30" patternTransform="translate(1187 770)"><path d="M0 0 L9 30 L18 0Z" fill="#d6b43e"/></pattern>
<clipPath id="vpclip"><rect x="491" y="177" width="1428" height="817"/></clipPath>
</defs><g clip-path="url(#vpclip)"><g stroke="#5a5a5a" stroke-width="1" fill="none"><path d="M900 994 L1185 915 L1538.6 994"/></g><g stroke="#9a9a9a" stroke-width="1" fill="none"><path d="M958.5 978.7 L1031.5 994 M1443.7 973 L1369 994"/></g><path d="M1392.5 215 L1387.5 994" stroke="#6a6a6a" stroke-width="1"/><path d="M1189 215 L1188.5 346" stroke="#6a6a6a" stroke-width="1"/><g stroke="#9090ff" stroke-width="1.6" fill="none" stroke-linecap="round"><path d="M1139.6 287.7 L1168.2 279.5 L1200.5 287 M1168.2 279.5 L1167.3 337"/><path d="M920.7 346.6 L891.9 353.9 L924.7 361.7 M891.9 353.9 L891.5 411.3"/><path d="M1453 341.7 L1485 348.6 L1456.9 356.9 M1485 348.6 L1485 405.9"/><path d="M916.5 911.8 L887.8 920 L920.6 927.2 M887.8 920 L888.3 862.6"/><path d="M1450 905 L1480 915 L1453 922 M1480 915 L1480.5 857"/><path d="M1173 976 L1205 988 L1233 980 M1205 988 L1205.5 940"/></g><path d="M514 985.4 L954.2 867.7 L1002.4 877.8 L577.7 994 L514 994Z" fill="#dcdcdc"/><circle cx="1187" cy="556" r="211.5" fill="url(#sph)"/><clipPath id="sphc"><circle cx="1187" cy="556" r="211.5"/></clipPath><g clip-path="url(#sphc)"><polygon points="1187.0,767.5 1187.0,767.5 1173.3,767.0 1173.2,767.0" fill="#707174"/><polygon points="1173.2,767.0 1173.3,767.0 1159.6,765.7 1159.4,765.7" fill="#707174"/><polygon points="1159.4,765.7 1159.6,765.7 1146.1,763.4 1145.7,763.4" fill="#707174"/><polygon points="1145.7,763.4 1146.1,763.4 1132.7,760.3 1132.3,760.3" fill="#707174"/><polygon points="1132.3,760.3 1132.7,760.3 1119.6,756.3 1119.0,756.3" fill="#707174"/><polygon points="1119.0,756.3 1119.6,756.3 1106.8,751.4 1106.1,751.4" fill="#707174"/><polygon points="1106.1,751.4 1106.8,751.4 1094.3,745.7 1093.5,745.7" fill="#707174"/><polygon points="1093.5,745.7 1094.3,745.7 1082.2,739.2 1081.2,739.2" fill="#707174"/><polygon points="1081.2,739.2 1082.2,739.2 1070.5,731.9 1069.5,731.9" fill="#707174"/><polygon points="1069.5,731.9 1070.5,731.9 1059.3,723.8 1058.2,723.8" fill="#707174"/><polygon points="1058.2,723.8 1059.3,723.8 1048.7,715.0 1047.5,715.0" fill="#707174"/><polygon points="1047.5,715.0 1048.7,715.0 1038.7,705.6 1037.4,705.6" fill="#707174"/><polygon points="1037.4,705.6 1038.7,705.6 1029.3,695.5 1028.0,695.5" fill="#717275"/><polygon points="1028.0,695.5 1029.3,695.5 1020.6,684.8 1019.2,684.8" fill="#717275"/><polygon points="1019.2,684.8 1020.6,684.8 1012.6,673.5 1011.1,673.5" fill="#717275"/><polygon points="1011.1,673.5 1012.6,673.5 1005.4,661.8 1003.8,661.8" fill="#717275"/><polygon points="1003.8,661.8 1005.4,661.8 998.9,649.5 997.3,649.5" fill="#717275"/><polygon points="997.3,649.5 998.9,649.5 993.3,636.9 991.6,636.9" fill="#717275"/><polygon points="991.6,636.9 993.3,636.9 988.4,624.0 986.7,624.0" fill="#717275"/><polygon points="986.7,624.0 988.4,624.0 984.5,610.7 982.7,610.7" fill="#727376"/><polygon points="982.7,610.7 984.5,610.7 981.3,597.3 979.6,597.3" fill="#727376"/><polygon points="979.6,597.3 981.3,597.3 979.1,583.6 977.3,583.6" fill="#727376"/><polygon points="977.3,583.6 979.1,583.6 977.8,569.8 976.0,569.8" fill="#727376"/><polygon points="976.0,569.8 977.8,569.8 977.3,556.0 975.5,556.0" fill="#727376"/><polygon points="975.5,556.0 977.3,556.0 977.8,542.2 976.0,542.2" fill="#727376"/><polygon points="976.0,542.2 977.8,542.2 979.1,528.4 977.3,528.4" fill="#727376"/><polygon points="977.3,528.4 979.1,528.4 981.3,514.7 979.6,514.7" fill="#727376"/><polygon points="979.6,514.7 981.3,514.7 984.5,501.3 982.7,501.3" fill="#727376"/><polygon points="982.7,501.3 984.5,501.3 988.4,488.0 986.7,488.0" fill="#727376"/><polygon points="986.7,488.0 988.4,488.0 993.3,475.1 991.6,475.1" fill="#727376"/><polygon points="991.6,475.1 993.3,475.1 998.9,462.5 997.3,462.5" fill="#727376"/><polygon points="997.3,462.5 998.9,462.5 1005.4,450.2 1003.8,450.2" fill="#727376"/><polygon points="1003.8,450.2 1005.4,450.2 1012.6,438.5 1011.1,438.5" fill="#727376"/><polygon points="1011.1,438.5 1012.6,438.5 1020.6,427.2 1019.2,427.2" fill="#727376"/><polygon points="1019.2,427.2 1020.6,427.2 1029.3,416.5 1028.0,416.5" fill="#727376"/><polygon points="1028.0,416.5 1029.3,416.5 1038.7,406.4 1037.4,406.4" fill="#717275"/><polygon points="1037.4,406.4 1038.7,406.4 1048.7,397.0 1047.5,397.0" fill="#717275"/><polygon points="1047.5,397.0 1048.7,397.0 1059.3,388.2 1058.2,388.2" fill="#717275"/><polygon points="1058.2,388.2 1059.3,388.2 1070.5,380.1 1069.5,380.1" fill="#717275"/><polygon points="1069.5,380.1 1070.5,380.1 1082.2,372.8 1081.2,372.8" fill="#717275"/><polygon points="1081.2,372.8 1082.2,372.8 1094.3,366.3 1093.5,366.3" fill="#717275"/><polygon points="1093.5,366.3 1094.3,366.3 1106.8,360.6 1106.1,360.6" fill="#717275"/><polygon points="1106.1,360.6 1106.8,360.6 1119.6,355.7 1119.0,355.7" fill="#717275"/><polygon points="1119.0,355.7 1119.6,355.7 1132.7,351.7 1132.3,351.7" fill="#717275"/><polygon points="1132.3,351.7 1132.7,351.7 1146.1,348.6 1145.7,348.6" fill="#717275"/><polygon points="1145.7,348.6 1146.1,348.6 1159.6,346.3 1159.4,346.3" fill="#707174"/><polygon points="1159.4,346.3 1159.6,346.3 1173.3,345.0 1173.2,345.0" fill="#707174"/><polygon points="1173.2,345.0 1173.3,345.0 1187.0,344.5 1187.0,344.5" fill="#707174"/><polygon points="1187.0,767.5 1187.0,767.5 1173.6,767.0 1173.3,767.0" fill="#757679"/><polygon points="1173.3,767.0 1173.6,767.0 1160.3,765.7 1159.6,765.7" fill="#757679"/><polygon points="1159.6,765.7 1160.3,765.7 1147.1,763.4 1146.1,763.4" fill="#757679"/><polygon points="1146.1,763.4 1147.1,763.4 1134.1,760.3 1132.7,760.3" fill="#757679"/><polygon points="1132.7,760.3 1134.1,760.3 1121.3,756.3 1119.6,756.3" fill="#757679"/><polygon points="1119.6,756.3 1121.3,756.3 1108.8,751.4 1106.8,751.4" fill="#757679"/><polygon points="1106.8,751.4 1108.8,751.4 1096.6,745.7 1094.3,745.7" fill="#757679"/><polygon points="1094.3,745.7 1096.6,745.7 1084.9,739.2 1082.2,739.2" fill="#757679"/><polygon points="1082.2,739.2 1084.9,739.2 1073.5,731.9 1070.5,731.9" fill="#757679"/><polygon points="1070.5,731.9 1073.5,731.9 1062.6,723.8 1059.3,723.8" fill="#757679"/><polygon points="1059.3,723.8 1062.6,723.8 1052.3,715.0 1048.7,715.0" fill="#757679"/><polygon points="1048.7,715.0 1052.3,715.0 1042.5,705.6 1038.7,705.6" fill="#757679"/><polygon points="1038.7,705.6 1042.5,705.6 1033.4,695.5 1029.3,695.5" fill="#76777a"/><polygon points="1029.3,695.5 1033.4,695.5 1024.9,684.8 1020.6,684.8" fill="#76777a"/><polygon points="1020.6,684.8 1024.9,684.8 1017.1,673.5 1012.6,673.5" fill="#76777a"/><polygon points="1012.6,673.5 1017.1,673.5 1010.1,661.8 1005.4,661.8" fill="#77787b"/><polygon points="1005.4,661.8 1010.1,661.8 1003.8,649.5 998.9,649.5" fill="#77787b"/><polygon points="998.9,649.5 1003.8,649.5 998.3,636.9 993.3,636.9" fill="#78797c"/><polygon points="993.3,636.9 998.3,636.9 993.5,624.0 988.4,624.0" fill="#78797c"/><polygon points="988.4,624.0 993.5,624.0 989.7,610.7 984.5,610.7" fill="#78797c"/><polygon points="984.5,610.7 989.7,610.7 986.6,597.3 981.3,597.3" fill="#797a7d"/><polygon points="981.3,597.3 986.6,597.3 984.5,583.6 979.1,583.6" fill="#797a7d"/><polygon points="979.1,583.6 984.5,583.6 983.1,569.8 977.8,569.8" fill="#7a7b7e"/><polygon points="977.8,569.8 983.1,569.8 982.7,556.0 977.3,556.0" fill="#7a7b7e"/><polygon points="977.3,556.0 982.7,556.0 983.1,542.2 977.8,542.2" fill="#7b7c7f"/><polygon points="977.8,542.2 983.1,542.2 984.5,528.4 979.1,528.4" fill="#7b7c7f"/><polygon points="979.1,528.4 984.5,528.4 986.6,514.7 981.3,514.7" fill="#7b7c7f"/><polygon points="981.3,514.7 986.6,514.7 989.7,501.3 984.5,501.3" fill="#7b7c7f"/><polygon points="984.5,501.3 989.7,501.3 993.5,488.0 988.4,488.0" fill="#7b7c7f"/><polygon points="988.4,488.0 993.5,488.0 998.3,475.1 993.3,475.1" fill="#7b7c7f"/><polygon points="993.3,475.1 998.3,475.1 1003.8,462.5 998.9,462.5" fill="#7b7c7f"/><polygon points="998.9,462.5 1003.8,462.5 1010.1,450.2 1005.4,450.2" fill="#7a7b7e"/><polygon points="1005.4,450.2 1010.1,450.2 1017.1,438.5 1012.6,438.5" fill="#7a7b7e"/><polygon points="1012.6,438.5 1017.1,438.5 1024.9,427.2 1020.6,427.2" fill="#797a7d"/><polygon points="1020.6,427.2 1024.9,427.2 1033.4,416.5 1029.3,416.5" fill="#797a7d"/><polygon points="1029.3,416.5 1033.4,416.5 1042.5,406.4 1038.7,406.4" fill="#78797c"/><polygon points="1038.7,406.4 1042.5,406.4 1052.3,397.0 1048.7,397.0" fill="#78797c"/><polygon points="1048.7,397.0 1052.3,397.0 1062.6,388.2 1059.3,388.2" fill="#77787b"/><polygon points="1059.3,388.2 1062.6,388.2 1073.5,380.1 1070.5,380.1" fill="#77787b"/><polygon points="1070.5,380.1 1073.5,380.1 1084.9,372.8 1082.2,372.8" fill="#77787b"/><polygon points="1082.2,372.8 1084.9,372.8 1096.6,366.3 1094.3,366.3" fill="#76777a"/><polygon points="1094.3,366.3 1096.6,366.3 1108.8,360.6 1106.8,360.6" fill="#76777a"/><polygon points="1106.8,360.6 1108.8,360.6 1121.3,355.7 1119.6,355.7" fill="#76777a"/><polygon points="1119.6,355.7 1121.3,355.7 1134.1,351.7 1132.7,351.7" fill="#76777a"/><polygon points="1132.7,351.7 1134.1,351.7 1147.1,348.6 1146.1,348.6" fill="#757679"/><polygon points="1146.1,348.6 1147.1,348.6 1160.3,346.3 1159.6,346.3" fill="#757679"/><polygon points="1159.6,346.3 1160.3,346.3 1173.6,345.0 1173.3,345.0" fill="#757679"/><polygon points="1173.3,345.0 1173.6,345.0 1187.0,344.5 1187.0,344.5" fill="#757679"/><polygon points="1187.0,767.5 1187.0,767.5 1174.2,767.0 1173.6,767.0" fill="#797a7d"/><polygon points="1173.6,767.0 1174.2,767.0 1161.5,765.7 1160.3,765.7" fill="#797a7d"/><polygon points="1160.3,765.7 1161.5,765.7 1148.9,763.4 1147.1,763.4" fill="#797a7d"/><polygon points="1147.1,763.4 1148.9,763.4 1136.4,760.3 1134.1,760.3" fill="#797a7d"/><polygon points="1134.1,760.3 1136.4,760.3 1124.2,756.3 1121.3,756.3" fill="#797a7d"/><polygon points="1121.3,756.3 1124.2,756.3 1112.2,751.4 1108.8,751.4" fill="#797a7d"/><polygon points="1108.8,751.4 1112.2,751.4 1100.6,745.7 1096.6,745.7" fill="#797a7d"/><polygon points="1096.6,745.7 1100.6,745.7 1089.3,739.2 1084.9,739.2" fill="#797a7d"/><polygon points="1084.9,739.2 1089.3,739.2 1078.4,731.9 1073.5,731.9" fill="#797a7d"/><polygon points="1073.5,731.9 1078.4,731.9 1068.0,723.8 1062.6,723.8" fill="#797a7d"/><polygon points="1062.6,723.8 1068.0,723.8 1058.2,715.0 1052.3,715.0" fill="#797a7d"/><polygon points="1052.3,715.0 1058.2,715.0 1048.8,705.6 1042.5,705.6" fill="#797a7d"/><polygon points="1042.5,705.6 1048.8,705.6 1040.1,695.5 1033.4,695.5" fill="#797a7d"/><polygon points="1033.4,695.5 1040.1,695.5 1032.0,684.8 1024.9,684.8" fill="#7a7b7e"/><polygon points="1024.9,684.8 1032.0,684.8 1024.5,673.5 1017.1,673.5" fill="#7a7b7e"/><polygon points="1017.1,673.5 1024.5,673.5 1017.8,661.8 1010.1,661.8" fill="#7b7c7f"/><polygon points="1010.1,661.8 1017.8,661.8 1011.8,649.5 1003.8,649.5" fill="#7c7d80"/><polygon points="1003.8,649.5 1011.8,649.5 1006.5,636.9 998.3,636.9" fill="#7c7d80"/><polygon points="998.3,636.9 1006.5,636.9 1002.0,624.0 993.5,624.0" fill="#7d7e81"/><polygon points="993.5,624.0 1002.0,624.0 998.3,610.7 989.7,610.7" fill="#7e7f82"/><polygon points="989.7,610.7 998.3,610.7 995.4,597.3 986.6,597.3" fill="#7f8083"/><polygon points="986.6,597.3 995.4,597.3 993.3,583.6 984.5,583.6" fill="#7f8083"/><polygon points="984.5,583.6 993.3,583.6 992.0,569.8 983.1,569.8" fill="#808184"/><polygon points="983.1,569.8 992.0,569.8 991.6,556.0 982.7,556.0" fill="#818285"/><polygon points="982.7,556.0 991.6,556.0 992.0,542.2 983.1,542.2" fill="#818285"/><polygon points="983.1,542.2 992.0,542.2 993.3,528.4 984.5,528.4" fill="#818285"/><polygon points="984.5,528.4 993.3,528.4 995.4,514.7 986.6,514.7" fill="#818285"/><polygon points="986.6,514.7 995.4,514.7 998.3,501.3 989.7,501.3" fill="#818285"/><polygon points="989.7,501.3 998.3,501.3 1002.0,488.0 993.5,488.0" fill="#818285"/><polygon points="993.5,488.0 1002.0,488.0 1006.5,475.1 998.3,475.1" fill="#818285"/><polygon points="998.3,475.1 1006.5,475.1 1011.8,462.5 1003.8,462.5" fill="#818285"/><polygon points="1003.8,462.5 1011.8,462.5 1017.8,450.2 1010.1,450.2" fill="#818285"/><polygon points="1010.1,450.2 1017.8,450.2 1024.5,438.5 1017.1,438.5" fill="#808184"/><polygon points="1017.1,438.5 1024.5,438.5 1032.0,427.2 1024.9,427.2" fill="#7f8083"/><polygon points="1024.9,427.2 1032.0,427.2 1040.1,416.5 1033.4,416.5" fill="#7e7f82"/><polygon points="1033.4,416.5 1040.1,416.5 1048.8,406.4 1042.5,406.4" fill="#7e7f82"/><polygon points="1042.5,406.4 1048.8,406.4 1058.2,397.0 1052.3,397.0" fill="#7d7e81"/><polygon points="1052.3,397.0 1058.2,397.0 1068.0,388.2 1062.6,388.2" fill="#7c7d80"/><polygon points="1062.6,388.2 1068.0,388.2 1078.4,380.1 1073.5,380.1" fill="#7c7d80"/><polygon points="1073.5,380.1 1078.4,380.1 1089.3,372.8 1084.9,372.8" fill="#7b7c7f"/><polygon points="1084.9,372.8 1089.3,372.8 1100.6,366.3 1096.6,366.3" fill="#7a7b7e"/><polygon points="1096.6,366.3 1100.6,366.3 1112.2,360.6 1108.8,360.6" fill="#7a7b7e"/><polygon points="1108.8,360.6 1112.2,360.6 1124.2,355.7 1121.3,355.7" fill="#7a7b7e"/><polygon points="1121.3,355.7 1124.2,355.7 1136.4,351.7 1134.1,351.7" fill="#797a7d"/><polygon points="1134.1,351.7 1136.4,351.7 1148.9,348.6 1147.1,348.6" fill="#797a7d"/><polygon points="1147.1,348.6 1148.9,348.6 1161.5,346.3 1160.3,346.3" fill="#797a7d"/><polygon points="1160.3,346.3 1161.5,346.3 1174.2,345.0 1173.6,345.0" fill="#797a7d"/><polygon points="1173.6,345.0 1174.2,345.0 1187.0,344.5 1187.0,344.5" fill="#797a7d"/><polygon points="1187.0,767.5 1187.0,767.5 1175.0,767.0 1174.2,767.0" fill="#7b7c7f"/><polygon points="1174.2,767.0 1175.0,767.0 1163.1,765.7 1161.5,765.7" fill="#7b7c7f"/><polygon points="1161.5,765.7 1163.1,765.7 1151.3,763.4 1148.9,763.4" fill="#7b7c7f"/><polygon points="1148.9,763.4 1151.3,763.4 1139.6,760.3 1136.4,760.3" fill="#7b7c7f"/><polygon points="1136.4,760.3 1139.6,760.3 1128.1,756.3 1124.2,756.3" fill="#7b7c7f"/><polygon points="1124.2,756.3 1128.1,756.3 1116.9,751.4 1112.2,751.4" fill="#7b7c7f"/><polygon points="1112.2,751.4 1116.9,751.4 1106.0,745.7 1100.6,745.7" fill="#7b7c7f"/><polygon points="1100.6,745.7 1106.0,745.7 1095.4,739.2 1089.3,739.2" fill="#7b7c7f"/><polygon points="1089.3,739.2 1095.4,739.2 1085.2,731.9 1078.4,731.9" fill="#7b7c7f"/><polygon points="1078.4,731.9 1085.2,731.9 1075.5,723.8 1068.0,723.8" fill="#7b7c7f"/><polygon points="1068.0,723.8 1075.5,723.8 1066.2,715.0 1058.2,715.0" fill="#7b7c7f"/><polygon points="1058.2,715.0 1066.2,715.0 1057.5,705.6 1048.8,705.6" fill="#7b7c7f"/><polygon points="1048.8,705.6 1057.5,705.6 1049.3,695.5 1040.1,695.5" fill="#7c7d80"/><polygon points="1040.1,695.5 1049.3,695.5 1041.7,684.8 1032.0,684.8" fill="#7d7e81"/><polygon points="1032.0,684.8 1041.7,684.8 1034.7,673.5 1024.5,673.5" fill="#7d7e81"/><polygon points="1024.5,673.5 1034.7,673.5 1028.4,661.8 1017.8,661.8" fill="#7e7f82"/><polygon points="1017.8,661.8 1028.4,661.8 1022.7,649.5 1011.8,649.5" fill="#7f8083"/><polygon points="1011.8,649.5 1022.7,649.5 1017.8,636.9 1006.5,636.9" fill="#808184"/><polygon points="1006.5,636.9 1017.8,636.9 1013.6,624.0 1002.0,624.0" fill="#818285"/><polygon points="1002.0,624.0 1013.6,624.0 1010.1,610.7 998.3,610.7" fill="#828386"/><polygon points="998.3,610.7 1010.1,610.7 1007.4,597.3 995.4,597.3" fill="#838487"/><polygon points="995.4,597.3 1007.4,597.3 1005.4,583.6 993.3,583.6" fill="#848588"/><polygon points="993.3,583.6 1005.4,583.6 1004.2,569.8 992.0,569.8" fill="#858689"/><polygon points="992.0,569.8 1004.2,569.8 1003.8,556.0 991.6,556.0" fill="#86878a"/><polygon points="991.6,556.0 1003.8,556.0 1004.2,542.2 992.0,542.2" fill="#87888b"/><polygon points="992.0,542.2 1004.2,542.2 1005.4,528.4 993.3,528.4" fill="#87888b"/><polygon points="993.3,528.4 1005.4,528.4 1007.4,514.7 995.4,514.7" fill="#87888b"/><polygon points="995.4,514.7 1007.4,514.7 1010.1,501.3 998.3,501.3" fill="#87888b"/><polygon points="998.3,501.3 1010.1,501.3 1013.6,488.0 1002.0,488.0" fill="#87888b"/><polygon points="1002.0,488.0 1013.6,488.0 1017.8,475.1 1006.5,475.1" fill="#87888b"/><polygon points="1006.5,475.1 1017.8,475.1 1022.7,462.5 1011.8,462.5" fill="#87888b"/><polygon points="1011.8,462.5 1022.7,462.5 1028.4,450.2 1017.8,450.2" fill="#86878a"/><polygon points="1017.8,450.2 1028.4,450.2 1034.7,438.5 1024.5,438.5" fill="#858689"/><polygon points="1024.5,438.5 1034.7,438.5 1041.7,427.2 1032.0,427.2" fill="#848588"/><polygon points="1032.0,427.2 1041.7,427.2 1049.3,416.5 1040.1,416.5" fill="#838487"/><polygon points="1040.1,416.5 1049.3,416.5 1057.5,406.4 1048.8,406.4" fill="#828386"/><polygon points="1048.8,406.4 1057.5,406.4 1066.2,397.0 1058.2,397.0" fill="#818285"/><polygon points="1058.2,397.0 1066.2,397.0 1075.5,388.2 1068.0,388.2" fill="#808184"/><polygon points="1068.0,388.2 1075.5,388.2 1085.2,380.1 1078.4,380.1" fill="#7f8083"/><polygon points="1078.4,380.1 1085.2,380.1 1095.4,372.8 1089.3,372.8" fill="#7e7f82"/><polygon points="1089.3,372.8 1095.4,372.8 1106.0,366.3 1100.6,366.3" fill="#7d7e81"/><polygon points="1100.6,366.3 1106.0,366.3 1116.9,360.6 1112.2,360.6" fill="#7d7e81"/><polygon points="1112.2,360.6 1116.9,360.6 1128.1,355.7 1124.2,355.7" fill="#7c7d80"/><polygon points="1124.2,355.7 1128.1,355.7 1139.6,351.7 1136.4,351.7" fill="#7c7d80"/><polygon points="1136.4,351.7 1139.6,351.7 1151.3,348.6 1148.9,348.6" fill="#7b7c7f"/><polygon points="1148.9,348.6 1151.3,348.6 1163.1,346.3 1161.5,346.3" fill="#7b7c7f"/><polygon points="1161.5,346.3 1163.1,346.3 1175.0,345.0 1174.2,345.0" fill="#7b7c7f"/><polygon points="1174.2,345.0 1175.0,345.0 1187.0,344.5 1187.0,344.5" fill="#7b7c7f"/><polygon points="1187.0,767.5 1187.0,767.5 1176.0,767.0 1175.0,767.0" fill="#7c7d80"/><polygon points="1175.0,767.0 1176.0,767.0 1165.1,765.7 1163.1,765.7" fill="#7c7d80"/><polygon points="1163.1,765.7 1165.1,765.7 1154.3,763.4 1151.3,763.4" fill="#7c7d80"/><polygon points="1151.3,763.4 1154.3,763.4 1143.6,760.3 1139.6,760.3" fill="#7c7d80"/><polygon points="1139.6,760.3 1143.6,760.3 1133.1,756.3 1128.1,756.3" fill="#7c7d80"/><polygon points="1128.1,756.3 1133.1,756.3 1122.8,751.4 1116.9,751.4" fill="#7c7d80"/><polygon points="1116.9,751.4 1122.8,751.4 1112.8,745.7 1106.0,745.7" fill="#7c7d80"/><polygon points="1106.0,745.7 1112.8,745.7 1103.1,739.2 1095.4,739.2" fill="#7c7d80"/><polygon points="1095.4,739.2 1103.1,739.2 1093.8,731.9 1085.2,731.9" fill="#7c7d80"/><polygon points="1085.2,731.9 1093.8,731.9 1084.9,723.8 1075.5,723.8" fill="#7c7d80"/><polygon points="1075.5,723.8 1084.9,723.8 1076.4,715.0 1066.2,715.0" fill="#7c7d80"/><polygon points="1066.2,715.0 1076.4,715.0 1068.4,705.6 1057.5,705.6" fill="#7c7d80"/><polygon points="1057.5,705.6 1068.4,705.6 1060.8,695.5 1049.3,695.5" fill="#7d7e81"/><polygon points="1049.3,695.5 1060.8,695.5 1053.9,684.8 1041.7,684.8" fill="#7e7f82"/><polygon points="1041.7,684.8 1053.9,684.8 1047.5,673.5 1034.7,673.5" fill="#808184"/><polygon points="1034.7,673.5 1047.5,673.5 1041.7,661.8 1028.4,661.8" fill="#818285"/><polygon points="1028.4,661.8 1041.7,661.8 1036.5,649.5 1022.7,649.5" fill="#828386"/><polygon points="1022.7,649.5 1036.5,649.5 1032.0,636.9 1017.8,636.9" fill="#838487"/><polygon points="1017.8,636.9 1032.0,636.9 1028.1,624.0 1013.6,624.0" fill="#848588"/><polygon points="1013.6,624.0 1028.1,624.0 1024.9,610.7 1010.1,610.7" fill="#86878a"/><polygon points="1010.1,610.7 1024.9,610.7 1022.4,597.3 1007.4,597.3" fill="#87888b"/><polygon points="1007.4,597.3 1022.4,597.3 1020.6,583.6 1005.4,583.6" fill="#88898c"/><polygon points="1005.4,583.6 1020.6,583.6 1019.6,569.8 1004.2,569.8" fill="#8a8b8e"/><polygon points="1004.2,569.8 1019.6,569.8 1019.2,556.0 1003.8,556.0" fill="#8b8c8f"/><polygon points="1003.8,556.0 1019.2,556.0 1019.6,542.2 1004.2,542.2" fill="#8c8d90"/><polygon points="1004.2,542.2 1019.6,542.2 1020.6,528.4 1005.4,528.4" fill="#8c8d90"/><polygon points="1005.4,528.4 1020.6,528.4 1022.4,514.7 1007.4,514.7" fill="#8c8d90"/><polygon points="1007.4,514.7 1022.4,514.7 1024.9,501.3 1010.1,501.3" fill="#8c8d90"/><polygon points="1010.1,501.3 1024.9,501.3 1028.1,488.0 1013.6,488.0" fill="#8c8d90"/><polygon points="1013.6,488.0 1028.1,488.0 1032.0,475.1 1017.8,475.1" fill="#8c8d90"/><polygon points="1017.8,475.1 1032.0,475.1 1036.5,462.5 1022.7,462.5" fill="#8c8d90"/><polygon points="1022.7,462.5 1036.5,462.5 1041.7,450.2 1028.4,450.2" fill="#8b8c8f"/><polygon points="1028.4,450.2 1041.7,450.2 1047.5,438.5 1034.7,438.5" fill="#898a8d"/><polygon points="1034.7,438.5 1047.5,438.5 1053.9,427.2 1041.7,427.2" fill="#88898c"/><polygon points="1041.7,427.2 1053.9,427.2 1060.8,416.5 1049.3,416.5" fill="#86878a"/><polygon points="1049.3,416.5 1060.8,416.5 1068.4,406.4 1057.5,406.4" fill="#858689"/><polygon points="1057.5,406.4 1068.4,406.4 1076.4,397.0 1066.2,397.0" fill="#848588"/><polygon points="1066.2,397.0 1076.4,397.0 1084.9,388.2 1075.5,388.2" fill="#838487"/><polygon points="1075.5,388.2 1084.9,388.2 1093.8,380.1 1085.2,380.1" fill="#828386"/><polygon points="1085.2,380.1 1093.8,380.1 1103.1,372.8 1095.4,372.8" fill="#808184"/><polygon points="1095.4,372.8 1103.1,372.8 1112.8,366.3 1106.0,366.3" fill="#808184"/><polygon points="1106.0,366.3 1112.8,366.3 1122.8,360.6 1116.9,360.6" fill="#7f8083"/><polygon points="1116.9,360.6 1122.8,360.6 1133.1,355.7 1128.1,355.7" fill="#7e7f82"/><polygon points="1128.1,355.7 1133.1,355.7 1143.6,351.7 1139.6,351.7" fill="#7d7e81"/><polygon points="1139.6,351.7 1143.6,351.7 1154.3,348.6 1151.3,348.6" fill="#7d7e81"/><polygon points="1151.3,348.6 1154.3,348.6 1165.1,346.3 1163.1,346.3" fill="#7c7d80"/><polygon points="1163.1,346.3 1165.1,346.3 1176.0,345.0 1175.0,345.0" fill="#7c7d80"/><polygon points="1175.0,345.0 1176.0,345.0 1187.0,344.5 1187.0,344.5" fill="#7c7d80"/><polygon points="1187.0,767.5 1187.0,767.5 1177.2,767.0 1176.0,767.0" fill="#7d7e81"/><polygon points="1176.0,767.0 1177.2,767.0 1167.5,765.7 1165.1,765.7" fill="#7d7e81"/><polygon points="1165.1,765.7 1167.5,765.7 1157.8,763.4 1154.3,763.4" fill="#7d7e81"/><polygon points="1154.3,763.4 1157.8,763.4 1148.3,760.3 1143.6,760.3" fill="#7d7e81"/><polygon points="1143.6,760.3 1148.3,760.3 1138.9,756.3 1133.1,756.3" fill="#7d7e81"/><polygon points="1133.1,756.3 1138.9,756.3 1129.8,751.4 1122.8,751.4" fill="#7d7e81"/><polygon points="1122.8,751.4 1129.8,751.4 1120.9,745.7 1112.8,745.7" fill="#7d7e81"/><polygon points="1112.8,745.7 1120.9,745.7 1112.2,739.2 1103.1,739.2" fill="#7d7e81"/><polygon points="1103.1,739.2 1112.2,739.2 1103.9,731.9 1093.8,731.9" fill="#7d7e81"/><polygon points="1093.8,731.9 1103.9,731.9 1096.0,723.8 1084.9,723.8" fill="#7d7e81"/><polygon points="1084.9,723.8 1096.0,723.8 1088.4,715.0 1076.4,715.0" fill="#7d7e81"/><polygon points="1076.4,715.0 1088.4,715.0 1081.2,705.6 1068.4,705.6" fill="#7d7e81"/><polygon points="1068.4,705.6 1081.2,705.6 1074.6,695.5 1060.8,695.5" fill="#7f8083"/><polygon points="1060.8,695.5 1074.6,695.5 1068.4,684.8 1053.9,684.8" fill="#808184"/><polygon points="1053.9,684.8 1068.4,684.8 1062.7,673.5 1047.5,673.5" fill="#818285"/><polygon points="1047.5,673.5 1062.7,673.5 1057.5,661.8 1041.7,661.8" fill="#838487"/><polygon points="1041.7,661.8 1057.5,661.8 1052.9,649.5 1036.5,649.5" fill="#848588"/><polygon points="1036.5,649.5 1052.9,649.5 1048.8,636.9 1032.0,636.9" fill="#86878a"/><polygon points="1032.0,636.9 1048.8,636.9 1045.4,624.0 1028.1,624.0" fill="#88898c"/><polygon points="1028.1,624.0 1045.4,624.0 1042.5,610.7 1024.9,610.7" fill="#898a8d"/><polygon points="1024.9,610.7 1042.5,610.7 1040.3,597.3 1022.4,597.3" fill="#8b8c8f"/><polygon points="1022.4,597.3 1040.3,597.3 1038.7,583.6 1020.6,583.6" fill="#8d8e91"/><polygon points="1020.6,583.6 1038.7,583.6 1037.8,569.8 1019.6,569.8" fill="#8e8f92"/><polygon points="1019.6,569.8 1037.8,569.8 1037.4,556.0 1019.2,556.0" fill="#909194"/><polygon points="1019.2,556.0 1037.4,556.0 1037.8,542.2 1019.6,542.2" fill="#929396"/><polygon points="1019.6,542.2 1037.8,542.2 1038.7,528.4 1020.6,528.4" fill="#929396"/><polygon points="1020.6,528.4 1038.7,528.4 1040.3,514.7 1022.4,514.7" fill="#929396"/><polygon points="1022.4,514.7 1040.3,514.7 1042.5,501.3 1024.9,501.3" fill="#929396"/><polygon points="1024.9,501.3 1042.5,501.3 1045.4,488.0 1028.1,488.0" fill="#929396"/><polygon points="1028.1,488.0 1045.4,488.0 1048.8,475.1 1032.0,475.1" fill="#929396"/><polygon points="1032.0,475.1 1048.8,475.1 1052.9,462.5 1036.5,462.5" fill="#919295"/><polygon points="1036.5,462.5 1052.9,462.5 1057.5,450.2 1041.7,450.2" fill="#909194"/><polygon points="1041.7,450.2 1057.5,450.2 1062.7,438.5 1047.5,438.5" fill="#8e8f92"/><polygon points="1047.5,438.5 1062.7,438.5 1068.4,427.2 1053.9,427.2" fill="#8c8d90"/><polygon points="1053.9,427.2 1068.4,427.2 1074.6,416.5 1060.8,416.5" fill="#8a8b8e"/><polygon points="1060.8,416.5 1074.6,416.5 1081.2,406.4 1068.4,406.4" fill="#88898c"/><polygon points="1068.4,406.4 1081.2,406.4 1088.4,397.0 1076.4,397.0" fill="#87888b"/><polygon points="1076.4,397.0 1088.4,397.0 1096.0,388.2 1084.9,388.2" fill="#858689"/><polygon points="1084.9,388.2 1096.0,388.2 1103.9,380.1 1093.8,380.1" fill="#848588"/><polygon points="1093.8,380.1 1103.9,380.1 1112.2,372.8 1103.1,372.8" fill="#838487"/><polygon points="1103.1,372.8 1112.2,372.8 1120.9,366.3 1112.8,366.3" fill="#818285"/><polygon points="1112.8,366.3 1120.9,366.3 1129.8,360.6 1122.8,360.6" fill="#808184"/><polygon points="1122.8,360.6 1129.8,360.6 1138.9,355.7 1133.1,355.7" fill="#7f8083"/><polygon points="1133.1,355.7 1138.9,355.7 1148.3,351.7 1143.6,351.7" fill="#7e7f82"/><polygon points="1143.6,351.7 1148.3,351.7 1157.8,348.6 1154.3,348.6" fill="#7e7f82"/><polygon points="1154.3,348.6 1157.8,348.6 1167.5,346.3 1165.1,346.3" fill="#7d7e81"/><polygon points="1165.1,346.3 1167.5,346.3 1177.2,345.0 1176.0,345.0" fill="#7d7e81"/><polygon points="1176.0,345.0 1177.2,345.0 1187.0,344.5 1187.0,344.5" fill="#7d7e81"/><polygon points="1187.0,767.5 1187.0,767.5 1178.6,767.0 1177.2,767.0" fill="#7d7e81"/><polygon points="1177.2,767.0 1178.6,767.0 1170.2,765.7 1167.5,765.7" fill="#7d7e81"/><polygon points="1167.5,765.7 1170.2,765.7 1161.9,763.4 1157.8,763.4" fill="#7d7e81"/><polygon points="1157.8,763.4 1161.9,763.4 1153.7,760.3 1148.3,760.3" fill="#7d7e81"/><polygon points="1148.3,760.3 1153.7,760.3 1145.6,756.3 1138.9,756.3" fill="#7d7e81"/><polygon points="1138.9,756.3 1145.6,756.3 1137.7,751.4 1129.8,751.4" fill="#7d7e81"/><polygon points="1129.8,751.4 1137.7,751.4 1130.1,745.7 1120.9,745.7" fill="#7d7e81"/><polygon points="1120.9,745.7 1130.1,745.7 1122.6,739.2 1112.2,739.2" fill="#7d7e81"/><polygon points="1112.2,739.2 1122.6,739.2 1115.5,731.9 1103.9,731.9" fill="#7d7e81"/><polygon points="1103.9,731.9 1115.5,731.9 1108.6,723.8 1096.0,723.8" fill="#7d7e81"/><polygon points="1096.0,723.8 1108.6,723.8 1102.1,715.0 1088.4,715.0" fill="#7d7e81"/><polygon points="1088.4,715.0 1102.1,715.0 1096.0,705.6 1081.2,705.6" fill="#7e7f82"/><polygon points="1081.2,705.6 1096.0,705.6 1090.2,695.5 1074.6,695.5" fill="#808184"/><polygon points="1074.6,695.5 1090.2,695.5 1084.9,684.8 1068.4,684.8" fill="#818285"/><polygon points="1068.4,684.8 1084.9,684.8 1079.9,673.5 1062.7,673.5" fill="#838487"/><polygon points="1062.7,673.5 1079.9,673.5 1075.5,661.8 1057.5,661.8" fill="#858689"/><polygon points="1057.5,661.8 1075.5,661.8 1071.5,649.5 1052.9,649.5" fill="#87888b"/><polygon points="1052.9,649.5 1071.5,649.5 1068.0,636.9 1048.8,636.9" fill="#898a8d"/><polygon points="1048.8,636.9 1068.0,636.9 1065.1,624.0 1045.4,624.0" fill="#8c8d90"/><polygon points="1045.4,624.0 1065.1,624.0 1062.6,610.7 1042.5,610.7" fill="#8e8f92"/><polygon points="1042.5,610.7 1062.6,610.7 1060.7,597.3 1040.3,597.3" fill="#909194"/><polygon points="1040.3,597.3 1060.7,597.3 1059.3,583.6 1038.7,583.6" fill="#929396"/><polygon points="1038.7,583.6 1059.3,583.6 1058.5,569.8 1037.8,569.8" fill="#959699"/><polygon points="1037.8,569.8 1058.5,569.8 1058.2,556.0 1037.4,556.0" fill="#97989b"/><polygon points="1037.4,556.0 1058.2,556.0 1058.5,542.2 1037.8,542.2" fill="#999a9d"/><polygon points="1037.8,542.2 1058.5,542.2 1059.3,528.4 1038.7,528.4" fill="#999a9d"/><polygon points="1038.7,528.4 1059.3,528.4 1060.7,514.7 1040.3,514.7" fill="#999a9d"/><polygon points="1040.3,514.7 1060.7,514.7 1062.6,501.3 1042.5,501.3" fill="#999a9d"/><polygon points="1042.5,501.3 1062.6,501.3 1065.1,488.0 1045.4,488.0" fill="#999a9d"/><polygon points="1045.4,488.0 1065.1,488.0 1068.0,475.1 1048.8,475.1" fill="#999a9d"/><polygon points="1048.8,475.1 1068.0,475.1 1071.5,462.5 1052.9,462.5" fill="#98999c"/><polygon points="1052.9,462.5 1071.5,462.5 1075.5,450.2 1057.5,450.2" fill="#96979a"/><polygon points="1057.5,450.2 1075.5,450.2 1079.9,438.5 1062.7,438.5" fill="#949598"/><polygon points="1062.7,438.5 1079.9,438.5 1084.9,427.2 1068.4,427.2" fill="#919295"/><polygon points="1068.4,427.2 1084.9,427.2 1090.2,416.5 1074.6,416.5" fill="#8f9093"/><polygon points="1074.6,416.5 1090.2,416.5 1096.0,406.4 1081.2,406.4" fill="#8d8e91"/><polygon points="1081.2,406.4 1096.0,406.4 1102.1,397.0 1088.4,397.0" fill="#8b8c8f"/><polygon points="1088.4,397.0 1102.1,397.0 1108.6,388.2 1096.0,388.2" fill="#88898c"/><polygon points="1096.0,388.2 1108.6,388.2 1115.5,380.1 1103.9,380.1" fill="#87888b"/><polygon points="1103.9,380.1 1115.5,380.1 1122.6,372.8 1112.2,372.8" fill="#858689"/><polygon points="1112.2,372.8 1122.6,372.8 1130.1,366.3 1120.9,366.3" fill="#838487"/><polygon points="1120.9,366.3 1130.1,366.3 1137.7,360.6 1129.8,360.6" fill="#828386"/><polygon points="1129.8,360.6 1137.7,360.6 1145.6,355.7 1138.9,355.7" fill="#808184"/><polygon points="1138.9,355.7 1145.6,355.7 1153.7,351.7 1148.3,351.7" fill="#7f8083"/><polygon points="1148.3,351.7 1153.7,351.7 1161.9,348.6 1157.8,348.6" fill="#7f8083"/><polygon points="1157.8,348.6 1161.9,348.6 1170.2,346.3 1167.5,346.3" fill="#7e7f82"/><polygon points="1167.5,346.3 1170.2,346.3 1178.6,345.0 1177.2,345.0" fill="#7d7e81"/><polygon points="1177.2,345.0 1178.6,345.0 1187.0,344.5 1187.0,344.5" fill="#7d7e81"/><polygon points="1187.0,767.5 1187.0,767.5 1180.1,767.0 1178.6,767.0" fill="#7d7e81"/><polygon points="1178.6,767.0 1180.1,767.0 1173.2,765.7 1170.2,765.7" fill="#7d7e81"/><polygon points="1170.2,765.7 1173.2,765.7 1166.4,763.4 1161.9,763.4" fill="#7d7e81"/><polygon points="1161.9,763.4 1166.4,763.4 1159.6,760.3 1153.7,760.3" fill="#7d7e81"/><polygon points="1153.7,760.3 1159.6,760.3 1153.0,756.3 1145.6,756.3" fill="#7d7e81"/><polygon points="1145.6,756.3 1153.0,756.3 1146.5,751.4 1137.7,751.4" fill="#7d7e81"/><polygon points="1137.7,751.4 1146.5,751.4 1140.2,745.7 1130.1,745.7" fill="#7d7e81"/><polygon points="1130.1,745.7 1140.2,745.7 1134.1,739.2 1122.6,739.2" fill="#7d7e81"/><polygon points="1122.6,739.2 1134.1,739.2 1128.2,731.9 1115.5,731.9" fill="#7d7e81"/><polygon points="1115.5,731.9 1128.2,731.9 1122.6,723.8 1108.6,723.8" fill="#7d7e81"/><polygon points="1108.6,723.8 1122.6,723.8 1117.3,715.0 1102.1,715.0" fill="#7d7e81"/><polygon points="1102.1,715.0 1117.3,715.0 1112.2,705.6 1096.0,705.6" fill="#7e7f82"/><polygon points="1096.0,705.6 1112.2,705.6 1107.5,695.5 1090.2,695.5" fill="#818285"/><polygon points="1090.2,695.5 1107.5,695.5 1103.1,684.8 1084.9,684.8" fill="#838487"/><polygon points="1084.9,684.8 1103.1,684.8 1099.1,673.5 1079.9,673.5" fill="#86878a"/><polygon points="1079.9,673.5 1099.1,673.5 1095.4,661.8 1075.5,661.8" fill="#88898c"/><polygon points="1075.5,661.8 1095.4,661.8 1092.2,649.5 1071.5,649.5" fill="#8b8c8f"/><polygon points="1071.5,649.5 1092.2,649.5 1089.3,636.9 1068.0,636.9" fill="#8e8f92"/><polygon points="1068.0,636.9 1089.3,636.9 1086.9,624.0 1065.1,624.0" fill="#919295"/><polygon points="1065.1,624.0 1086.9,624.0 1084.9,610.7 1062.6,610.7" fill="#949598"/><polygon points="1062.6,610.7 1084.9,610.7 1083.3,597.3 1060.7,597.3" fill="#97989b"/><polygon points="1060.7,597.3 1083.3,597.3 1082.2,583.6 1059.3,583.6" fill="#9a9b9e"/><polygon points="1059.3,583.6 1082.2,583.6 1081.5,569.8 1058.5,569.8" fill="#9e9fa2"/><polygon points="1058.5,569.8 1081.5,569.8 1081.2,556.0 1058.2,556.0" fill="#a1a2a5"/><polygon points="1058.2,556.0 1081.2,556.0 1081.5,542.2 1058.5,542.2" fill="#a4a5a8"/><polygon points="1058.5,542.2 1081.5,542.2 1082.2,528.4 1059.3,528.4" fill="#a4a5a8"/><polygon points="1059.3,528.4 1082.2,528.4 1083.3,514.7 1060.7,514.7" fill="#a4a5a8"/><polygon points="1060.7,514.7 1083.3,514.7 1084.9,501.3 1062.6,501.3" fill="#a4a5a8"/><polygon points="1062.6,501.3 1084.9,501.3 1086.9,488.0 1065.1,488.0" fill="#a4a5a8"/><polygon points="1065.1,488.0 1086.9,488.0 1089.3,475.1 1068.0,475.1" fill="#a4a5a8"/><polygon points="1068.0,475.1 1089.3,475.1 1092.2,462.5 1071.5,462.5" fill="#a3a4a7"/><polygon points="1071.5,462.5 1092.2,462.5 1095.4,450.2 1075.5,450.2" fill="#a0a1a4"/><polygon points="1075.5,450.2 1095.4,450.2 1099.1,438.5 1079.9,438.5" fill="#9d9ea1"/><polygon points="1079.9,438.5 1099.1,438.5 1103.1,427.2 1084.9,427.2" fill="#999a9d"/><polygon points="1084.9,427.2 1103.1,427.2 1107.5,416.5 1090.2,416.5" fill="#96979a"/><polygon points="1090.2,416.5 1107.5,416.5 1112.2,406.4 1096.0,406.4" fill="#939497"/><polygon points="1096.0,406.4 1112.2,406.4 1117.3,397.0 1102.1,397.0" fill="#909194"/><polygon points="1102.1,397.0 1117.3,397.0 1122.6,388.2 1108.6,388.2" fill="#8d8e91"/><polygon points="1108.6,388.2 1122.6,388.2 1128.2,380.1 1115.5,380.1" fill="#8a8b8e"/><polygon points="1115.5,380.1 1128.2,380.1 1134.1,372.8 1122.6,372.8" fill="#88898c"/><polygon points="1122.6,372.8 1134.1,372.8 1140.2,366.3 1130.1,366.3" fill="#86878a"/><polygon points="1130.1,366.3 1140.2,366.3 1146.5,360.6 1137.7,360.6" fill="#848588"/><polygon points="1137.7,360.6 1146.5,360.6 1153.0,355.7 1145.6,355.7" fill="#828386"/><polygon points="1145.6,355.7 1153.0,355.7 1159.6,351.7 1153.7,351.7" fill="#808184"/><polygon points="1153.7,351.7 1159.6,351.7 1166.4,348.6 1161.9,348.6" fill="#7f8083"/><polygon points="1161.9,348.6 1166.4,348.6 1173.2,346.3 1170.2,346.3" fill="#7e7f82"/><polygon points="1170.2,346.3 1173.2,346.3 1180.1,345.0 1178.6,345.0" fill="#7e7f82"/><polygon points="1178.6,345.0 1180.1,345.0 1187.0,344.5 1187.0,344.5" fill="#7d7e81"/><polygon points="1187.0,767.5 1187.0,767.5 1181.7,767.0 1180.1,767.0" fill="#7d7e81"/><polygon points="1180.1,767.0 1181.7,767.0 1176.4,765.7 1173.2,765.7" fill="#7d7e81"/><polygon points="1173.2,765.7 1176.4,765.7 1171.2,763.4 1166.4,763.4" fill="#7d7e81"/><polygon points="1166.4,763.4 1171.2,763.4 1166.1,760.3 1159.6,760.3" fill="#7d7e81"/><polygon points="1159.6,760.3 1166.1,760.3 1161.0,756.3 1153.0,756.3" fill="#7d7e81"/><polygon points="1153.0,756.3 1161.0,756.3 1156.0,751.4 1146.5,751.4" fill="#7d7e81"/><polygon points="1146.5,751.4 1156.0,751.4 1151.2,745.7 1140.2,745.7" fill="#7d7e81"/><polygon points="1140.2,745.7 1151.2,745.7 1146.5,739.2 1134.1,739.2" fill="#7d7e81"/><polygon points="1134.1,739.2 1146.5,739.2 1142.0,731.9 1128.2,731.9" fill="#7d7e81"/><polygon points="1128.2,731.9 1142.0,731.9 1137.7,723.8 1122.6,723.8" fill="#7d7e81"/><polygon points="1122.6,723.8 1137.7,723.8 1133.6,715.0 1117.3,715.0" fill="#7d7e81"/><polygon points="1117.3,715.0 1133.6,715.0 1129.8,705.6 1112.2,705.6" fill="#7f8083"/><polygon points="1112.2,705.6 1129.8,705.6 1126.1,695.5 1107.5,695.5" fill="#828386"/><polygon points="1107.5,695.5 1126.1,695.5 1122.8,684.8 1103.1,684.8" fill="#858689"/><polygon points="1103.1,684.8 1122.8,684.8 1119.7,673.5 1099.1,673.5" fill="#898a8d"/><polygon points="1099.1,673.5 1119.7,673.5 1116.9,661.8 1095.4,661.8" fill="#8d8e91"/><polygon points="1095.4,661.8 1116.9,661.8 1114.4,649.5 1092.2,649.5" fill="#909194"/><polygon points="1092.2,649.5 1114.4,649.5 1112.2,636.9 1089.3,636.9" fill="#949598"/><polygon points="1089.3,636.9 1112.2,636.9 1110.4,624.0 1086.9,624.0" fill="#999a9d"/><polygon points="1086.9,624.0 1110.4,624.0 1108.8,610.7 1084.9,610.7" fill="#9d9ea1"/><polygon points="1084.9,610.7 1108.8,610.7 1107.6,597.3 1083.3,597.3" fill="#a1a2a5"/><polygon points="1083.3,597.3 1107.6,597.3 1106.8,583.6 1082.2,583.6" fill="#a5a6a9"/><polygon points="1082.2,583.6 1106.8,583.6 1106.2,569.8 1081.5,569.8" fill="#aaabae"/><polygon points="1081.5,569.8 1106.2,569.8 1106.1,556.0 1081.2,556.0" fill="#aeafb2"/><polygon points="1081.2,556.0 1106.1,556.0 1106.2,542.2 1081.5,542.2" fill="#b2b3b6"/><polygon points="1081.5,542.2 1106.2,542.2 1106.8,528.4 1082.2,528.4" fill="#b2b3b6"/><polygon points="1082.2,528.4 1106.8,528.4 1107.6,514.7 1083.3,514.7" fill="#b2b3b6"/><polygon points="1083.3,514.7 1107.6,514.7 1108.8,501.3 1084.9,501.3" fill="#b2b3b6"/><polygon points="1084.9,501.3 1108.8,501.3 1110.4,488.0 1086.9,488.0" fill="#b2b3b6"/><polygon points="1086.9,488.0 1110.4,488.0 1112.2,475.1 1089.3,475.1" fill="#b2b3b6"/><polygon points="1089.3,475.1 1112.2,475.1 1114.4,462.5 1092.2,462.5" fill="#b1b2b5"/><polygon points="1092.2,462.5 1114.4,462.5 1116.9,450.2 1095.4,450.2" fill="#adaeb1"/><polygon points="1095.4,450.2 1116.9,450.2 1119.7,438.5 1099.1,438.5" fill="#a8a9ac"/><polygon points="1099.1,438.5 1119.7,438.5 1122.8,427.2 1103.1,427.2" fill="#a4a5a8"/><polygon points="1103.1,427.2 1122.8,427.2 1126.1,416.5 1107.5,416.5" fill="#9fa0a3"/><polygon points="1107.5,416.5 1126.1,416.5 1129.8,406.4 1112.2,406.4" fill="#9b9c9f"/><polygon points="1112.2,406.4 1129.8,406.4 1133.6,397.0 1117.3,397.0" fill="#97989b"/><polygon points="1117.3,397.0 1133.6,397.0 1137.7,388.2 1122.6,388.2" fill="#939497"/><polygon points="1122.6,388.2 1137.7,388.2 1142.0,380.1 1128.2,380.1" fill="#8f9093"/><polygon points="1128.2,380.1 1142.0,380.1 1146.5,372.8 1134.1,372.8" fill="#8c8d90"/><polygon points="1134.1,372.8 1146.5,372.8 1151.2,366.3 1140.2,366.3" fill="#898a8d"/><polygon points="1140.2,366.3 1151.2,366.3 1156.0,360.6 1146.5,360.6" fill="#86878a"/><polygon points="1146.5,360.6 1156.0,360.6 1161.0,355.7 1153.0,355.7" fill="#848588"/><polygon points="1153.0,355.7 1161.0,355.7 1166.1,351.7 1159.6,351.7" fill="#828386"/><polygon points="1159.6,351.7 1166.1,351.7 1171.2,348.6 1166.4,348.6" fill="#808184"/><polygon points="1166.4,348.6 1171.2,348.6 1176.4,346.3 1173.2,346.3" fill="#7f8083"/><polygon points="1173.2,346.3 1176.4,346.3 1181.7,345.0 1180.1,345.0" fill="#7e7f82"/><polygon points="1180.1,345.0 1181.7,345.0 1187.0,344.5 1187.0,344.5" fill="#7e7f82"/><polygon points="1187.0,767.5 1187.0,767.5 1183.4,767.0 1181.7,767.0" fill="#7d7e81"/><polygon points="1181.7,767.0 1183.4,767.0 1179.9,765.7 1176.4,765.7" fill="#7d7e81"/><polygon points="1176.4,765.7 1179.9,765.7 1176.3,763.4 1171.2,763.4" fill="#7d7e81"/><polygon points="1171.2,763.4 1176.3,763.4 1172.8,760.3 1166.1,760.3" fill="#7d7e81"/><polygon points="1166.1,760.3 1172.8,760.3 1169.4,756.3 1161.0,756.3" fill="#7d7e81"/><polygon points="1161.0,756.3 1169.4,756.3 1166.1,751.4 1156.0,751.4" fill="#7d7e81"/><polygon points="1156.0,751.4 1166.1,751.4 1162.8,745.7 1151.2,745.7" fill="#7d7e81"/><polygon points="1151.2,745.7 1162.8,745.7 1159.6,739.2 1146.5,739.2" fill="#7d7e81"/><polygon points="1146.5,739.2 1159.6,739.2 1156.6,731.9 1142.0,731.9" fill="#7d7e81"/><polygon points="1142.0,731.9 1156.6,731.9 1153.7,723.8 1137.7,723.8" fill="#7d7e81"/><polygon points="1137.7,723.8 1153.7,723.8 1150.9,715.0 1133.6,715.0" fill="#7d7e81"/><polygon points="1133.6,715.0 1150.9,715.0 1148.3,705.6 1129.8,705.6" fill="#7f8083"/><polygon points="1129.8,705.6 1148.3,705.6 1145.8,695.5 1126.1,695.5" fill="#838487"/><polygon points="1126.1,695.5 1145.8,695.5 1143.6,684.8 1122.8,684.8" fill="#88898c"/><polygon points="1122.8,684.8 1143.6,684.8 1141.5,673.5 1119.7,673.5" fill="#8c8d90"/><polygon points="1119.7,673.5 1141.5,673.5 1139.6,661.8 1116.9,661.8" fill="#919295"/><polygon points="1116.9,661.8 1139.6,661.8 1137.9,649.5 1114.4,649.5" fill="#96979a"/><polygon points="1114.4,649.5 1137.9,649.5 1136.4,636.9 1112.2,636.9" fill="#9c9da0"/><polygon points="1112.2,636.9 1136.4,636.9 1135.2,624.0 1110.4,624.0" fill="#a1a2a5"/><polygon points="1110.4,624.0 1135.2,624.0 1134.1,610.7 1108.8,610.7" fill="#a7a8ab"/><polygon points="1108.8,610.7 1134.1,610.7 1133.3,597.3 1107.6,597.3" fill="#acadb0"/><polygon points="1107.6,597.3 1133.3,597.3 1132.7,583.6 1106.8,583.6" fill="#b2b3b6"/><polygon points="1106.8,583.6 1132.7,583.6 1132.4,569.8 1106.2,569.8" fill="#b8b9bc"/><polygon points="1106.2,569.8 1132.4,569.8 1132.3,556.0 1106.1,556.0" fill="#bebfc2"/><polygon points="1106.1,556.0 1132.3,556.0 1132.4,542.2 1106.2,542.2" fill="#c2c3c6"/><polygon points="1106.2,542.2 1132.4,542.2 1132.7,528.4 1106.8,528.4" fill="#c2c3c6"/><polygon points="1106.8,528.4 1132.7,528.4 1133.3,514.7 1107.6,514.7" fill="#c2c3c6"/><polygon points="1107.6,514.7 1133.3,514.7 1134.1,501.3 1108.8,501.3" fill="#c2c3c6"/><polygon points="1108.8,501.3 1134.1,501.3 1135.2,488.0 1110.4,488.0" fill="#c2c3c6"/><polygon points="1110.4,488.0 1135.2,488.0 1136.4,475.1 1112.2,475.1" fill="#c2c3c6"/><polygon points="1112.2,475.1 1136.4,475.1 1137.9,462.5 1114.4,462.5" fill="#c1c2c5"/><polygon points="1114.4,462.5 1137.9,462.5 1139.6,450.2 1116.9,450.2" fill="#bcbdc0"/><polygon points="1116.9,450.2 1139.6,450.2 1141.5,438.5 1119.7,438.5" fill="#b6b7ba"/><polygon points="1119.7,438.5 1141.5,438.5 1143.6,427.2 1122.8,427.2" fill="#b0b1b4"/><polygon points="1122.8,427.2 1143.6,427.2 1145.8,416.5 1126.1,416.5" fill="#aaabae"/><polygon points="1126.1,416.5 1145.8,416.5 1148.3,406.4 1129.8,406.4" fill="#a4a5a8"/><polygon points="1129.8,406.4 1148.3,406.4 1150.9,397.0 1133.6,397.0" fill="#9fa0a3"/><polygon points="1133.6,397.0 1150.9,397.0 1153.7,388.2 1137.7,388.2" fill="#9a9b9e"/><polygon points="1137.7,388.2 1153.7,388.2 1156.6,380.1 1142.0,380.1" fill="#959699"/><polygon points="1142.0,380.1 1156.6,380.1 1159.6,372.8 1146.5,372.8" fill="#909194"/><polygon points="1146.5,372.8 1159.6,372.8 1162.8,366.3 1151.2,366.3" fill="#8c8d90"/><polygon points="1151.2,366.3 1162.8,366.3 1166.1,360.6 1156.0,360.6" fill="#898a8d"/><polygon points="1156.0,360.6 1166.1,360.6 1169.4,355.7 1161.0,355.7" fill="#86878a"/><polygon points="1161.0,355.7 1169.4,355.7 1172.8,351.7 1166.1,351.7" fill="#838487"/><polygon points="1166.1,351.7 1172.8,351.7 1176.3,348.6 1171.2,348.6" fill="#818285"/><polygon points="1171.2,348.6 1176.3,348.6 1179.9,346.3 1176.4,346.3" fill="#7f8083"/><polygon points="1176.4,346.3 1179.9,346.3 1183.4,345.0 1181.7,345.0" fill="#7e7f82"/><polygon points="1181.7,345.0 1183.4,345.0 1187.0,344.5 1187.0,344.5" fill="#7e7f82"/><polygon points="1187.0,767.5 1187.0,767.5 1185.2,767.0 1183.4,767.0" fill="#7d7e81"/><polygon points="1183.4,767.0 1185.2,767.0 1183.4,765.7 1179.9,765.7" fill="#7d7e81"/><polygon points="1179.9,765.7 1183.4,765.7 1181.6,763.4 1176.3,763.4" fill="#7d7e81"/><polygon points="1176.3,763.4 1181.6,763.4 1179.9,760.3 1172.8,760.3" fill="#7d7e81"/><polygon points="1172.8,760.3 1179.9,760.3 1178.1,756.3 1169.4,756.3" fill="#7d7e81"/><polygon points="1169.4,756.3 1178.1,756.3 1176.4,751.4 1166.1,751.4" fill="#7d7e81"/><polygon points="1166.1,751.4 1176.4,751.4 1174.8,745.7 1162.8,745.7" fill="#7d7e81"/><polygon points="1162.8,745.7 1174.8,745.7 1173.2,739.2 1159.6,739.2" fill="#7d7e81"/><polygon points="1159.6,739.2 1173.2,739.2 1171.7,731.9 1156.6,731.9" fill="#7d7e81"/><polygon points="1156.6,731.9 1171.7,731.9 1170.2,723.8 1153.7,723.8" fill="#7d7e81"/><polygon points="1153.7,723.8 1170.2,723.8 1168.8,715.0 1150.9,715.0" fill="#7d7e81"/><polygon points="1150.9,715.0 1168.8,715.0 1167.5,705.6 1148.3,705.6" fill="#808184"/><polygon points="1148.3,705.6 1167.5,705.6 1166.2,695.5 1145.8,695.5" fill="#858689"/><polygon points="1145.8,695.5 1166.2,695.5 1165.1,684.8 1143.6,684.8" fill="#8a8b8e"/><polygon points="1143.6,684.8 1165.1,684.8 1164.0,673.5 1141.5,673.5" fill="#909194"/><polygon points="1141.5,673.5 1164.0,673.5 1163.1,661.8 1139.6,661.8" fill="#96979a"/><polygon points="1139.6,661.8 1163.1,661.8 1162.2,649.5 1137.9,649.5" fill="#9c9da0"/><polygon points="1137.9,649.5 1162.2,649.5 1161.5,636.9 1136.4,636.9" fill="#a2a3a6"/><polygon points="1136.4,636.9 1161.5,636.9 1160.9,624.0 1135.2,624.0" fill="#a9aaad"/><polygon points="1135.2,624.0 1160.9,624.0 1160.3,610.7 1134.1,610.7" fill="#afb0b3"/><polygon points="1134.1,610.7 1160.3,610.7 1159.9,597.3 1133.3,597.3" fill="#b6b7ba"/><polygon points="1133.3,597.3 1159.9,597.3 1159.6,583.6 1132.7,583.6" fill="#bdbec1"/><polygon points="1132.7,583.6 1159.6,583.6 1159.5,569.8 1132.4,569.8" fill="#c4c5c8"/><polygon points="1132.4,569.8 1159.5,569.8 1159.4,556.0 1132.3,556.0" fill="#cbcccf"/><polygon points="1132.3,556.0 1159.4,556.0 1159.5,542.2 1132.4,542.2" fill="#d1d2d5"/><polygon points="1132.4,542.2 1159.5,542.2 1159.6,528.4 1132.7,528.4" fill="#d1d2d5"/><polygon points="1132.7,528.4 1159.6,528.4 1159.9,514.7 1133.3,514.7" fill="#d1d2d5"/><polygon points="1133.3,514.7 1159.9,514.7 1160.3,501.3 1134.1,501.3" fill="#d1d2d5"/><polygon points="1134.1,501.3 1160.3,501.3 1160.9,488.0 1135.2,488.0" fill="#d1d2d5"/><polygon points="1135.2,488.0 1160.9,488.0 1161.5,475.1 1136.4,475.1" fill="#d1d2d5"/><polygon points="1136.4,475.1 1161.5,475.1 1162.2,462.5 1137.9,462.5" fill="#d0d1d4"/><polygon points="1137.9,462.5 1162.2,462.5 1163.1,450.2 1139.6,450.2" fill="#c9cacd"/><polygon points="1139.6,450.2 1163.1,450.2 1164.0,438.5 1141.5,438.5" fill="#c2c3c6"/><polygon points="1141.5,438.5 1164.0,438.5 1165.1,427.2 1143.6,427.2" fill="#babbbe"/><polygon points="1143.6,427.2 1165.1,427.2 1166.2,416.5 1145.8,416.5" fill="#b3b4b7"/><polygon points="1145.8,416.5 1166.2,416.5 1167.5,406.4 1148.3,406.4" fill="#acadb0"/><polygon points="1148.3,406.4 1167.5,406.4 1168.8,397.0 1150.9,397.0" fill="#a6a7aa"/><polygon points="1150.9,397.0 1168.8,397.0 1170.2,388.2 1153.7,388.2" fill="#a0a1a4"/><polygon points="1153.7,388.2 1170.2,388.2 1171.7,380.1 1156.6,380.1" fill="#9a9b9e"/><polygon points="1156.6,380.1 1171.7,380.1 1173.2,372.8 1159.6,372.8" fill="#949598"/><polygon points="1159.6,372.8 1173.2,372.8 1174.8,366.3 1162.8,366.3" fill="#8f9093"/><polygon points="1162.8,366.3 1174.8,366.3 1176.4,360.6 1166.1,360.6" fill="#8b8c8f"/><polygon points="1166.1,360.6 1176.4,360.6 1178.1,355.7 1169.4,355.7" fill="#87888b"/><polygon points="1169.4,355.7 1178.1,355.7 1179.9,351.7 1172.8,351.7" fill="#848588"/><polygon points="1172.8,351.7 1179.9,351.7 1181.6,348.6 1176.3,348.6" fill="#818285"/><polygon points="1176.3,348.6 1181.6,348.6 1183.4,346.3 1179.9,346.3" fill="#808184"/><polygon points="1179.9,346.3 1183.4,346.3 1185.2,345.0 1183.4,345.0" fill="#7e7f82"/><polygon points="1183.4,345.0 1185.2,345.0 1187.0,344.5 1187.0,344.5" fill="#7e7f82"/><polygon points="1187.0,767.5 1187.0,767.5 1187.0,767.0 1185.2,767.0" fill="#7d7e81"/><polygon points="1185.2,767.0 1187.0,767.0 1187.0,765.7 1183.4,765.7" fill="#7d7e81"/><polygon points="1183.4,765.7 1187.0,765.7 1187.0,763.4 1181.6,763.4" fill="#7d7e81"/><polygon points="1181.6,763.4 1187.0,763.4 1187.0,760.3 1179.9,760.3" fill="#7d7e81"/><polygon points="1179.9,760.3 1187.0,760.3 1187.0,756.3 1178.1,756.3" fill="#7d7e81"/><polygon points="1178.1,756.3 1187.0,756.3 1187.0,751.4 1176.4,751.4" fill="#7d7e81"/><polygon points="1176.4,751.4 1187.0,751.4 1187.0,745.7 1174.8,745.7" fill="#7d7e81"/><polygon points="1174.8,745.7 1187.0,745.7 1187.0,739.2 1173.2,739.2" fill="#7d7e81"/><polygon points="1173.2,739.2 1187.0,739.2 1187.0,731.9 1171.7,731.9" fill="#7d7e81"/><polygon points="1171.7,731.9 1187.0,731.9 1187.0,723.8 1170.2,723.8" fill="#7d7e81"/><polygon points="1170.2,723.8 1187.0,723.8 1187.0,715.0 1168.8,715.0" fill="#7d7e81"/><polygon points="1168.8,715.0 1187.0,715.0 1187.0,705.6 1167.5,705.6" fill="#808184"/><polygon points="1167.5,705.6 1187.0,705.6 1187.0,695.5 1166.2,695.5" fill="#858689"/><polygon points="1166.2,695.5 1187.0,695.5 1187.0,684.8 1165.1,684.8" fill="#8b8c8f"/><polygon points="1165.1,684.8 1187.0,684.8 1187.0,673.5 1164.0,673.5" fill="#929396"/><polygon points="1164.0,673.5 1187.0,673.5 1187.0,661.8 1163.1,661.8" fill="#98999c"/><polygon points="1163.1,661.8 1187.0,661.8 1187.0,649.5 1162.2,649.5" fill="#9fa0a3"/><polygon points="1162.2,649.5 1187.0,649.5 1187.0,636.9 1161.5,636.9" fill="#a6a7aa"/><polygon points="1161.5,636.9 1187.0,636.9 1187.0,624.0 1160.9,624.0" fill="#adaeb1"/><polygon points="1160.9,624.0 1187.0,624.0 1187.0,610.7 1160.3,610.7" fill="#b5b6b9"/><polygon points="1160.3,610.7 1187.0,610.7 1187.0,597.3 1159.9,597.3" fill="#bcbdc0"/><polygon points="1159.9,597.3 1187.0,597.3 1187.0,583.6 1159.6,583.6" fill="#c4c5c8"/><polygon points="1159.6,583.6 1187.0,583.6 1187.0,569.8 1159.5,569.8" fill="#cccdd0"/><polygon points="1159.5,569.8 1187.0,569.8 1187.0,556.0 1159.4,556.0" fill="#d3d4d7"/><polygon points="1159.4,556.0 1187.0,556.0 1187.0,542.2 1159.5,542.2" fill="#dadbde"/><polygon points="1159.5,542.2 1187.0,542.2 1187.0,528.4 1159.6,528.4" fill="#dadbde"/><polygon points="1159.6,528.4 1187.0,528.4 1187.0,514.7 1159.9,514.7" fill="#dadbde"/><polygon points="1159.9,514.7 1187.0,514.7 1187.0,501.3 1160.3,501.3" fill="#dadbde"/><polygon points="1160.3,501.3 1187.0,501.3 1187.0,488.0 1160.9,488.0" fill="#dadbde"/><polygon points="1160.9,488.0 1187.0,488.0 1187.0,475.1 1161.5,475.1" fill="#dadbde"/><polygon points="1161.5,475.1 1187.0,475.1 1187.0,462.5 1162.2,462.5" fill="#d8d9dc"/><polygon points="1162.2,462.5 1187.0,462.5 1187.0,450.2 1163.1,450.2" fill="#d1d2d5"/><polygon points="1163.1,450.2 1187.0,450.2 1187.0,438.5 1164.0,438.5" fill="#c9cacd"/><polygon points="1164.0,438.5 1187.0,438.5 1187.0,427.2 1165.1,427.2" fill="#c1c2c5"/><polygon points="1165.1,427.2 1187.0,427.2 1187.0,416.5 1166.2,416.5" fill="#b9babd"/><polygon points="1166.2,416.5 1187.0,416.5 1187.0,406.4 1167.5,406.4" fill="#b1b2b5"/><polygon points="1167.5,406.4 1187.0,406.4 1187.0,397.0 1168.8,397.0" fill="#aaabae"/><polygon points="1168.8,397.0 1187.0,397.0 1187.0,388.2 1170.2,388.2" fill="#a3a4a7"/><polygon points="1170.2,388.2 1187.0,388.2 1187.0,380.1 1171.7,380.1" fill="#9d9ea1"/><polygon points="1171.7,380.1 1187.0,380.1 1187.0,372.8 1173.2,372.8" fill="#97989b"/><polygon points="1173.2,372.8 1187.0,372.8 1187.0,366.3 1174.8,366.3" fill="#919295"/><polygon points="1174.8,366.3 1187.0,366.3 1187.0,360.6 1176.4,360.6" fill="#8c8d90"/><polygon points="1176.4,360.6 1187.0,360.6 1187.0,355.7 1178.1,355.7" fill="#88898c"/><polygon points="1178.1,355.7 1187.0,355.7 1187.0,351.7 1179.9,351.7" fill="#858689"/><polygon points="1179.9,351.7 1187.0,351.7 1187.0,348.6 1181.6,348.6" fill="#828386"/><polygon points="1181.6,348.6 1187.0,348.6 1187.0,346.3 1183.4,346.3" fill="#808184"/><polygon points="1183.4,346.3 1187.0,346.3 1187.0,345.0 1185.2,345.0" fill="#7e7f82"/><polygon points="1185.2,345.0 1187.0,345.0 1187.0,344.5 1187.0,344.5" fill="#7e7f82"/><polygon points="1187.0,767.5 1187.0,767.5 1188.8,767.0 1187.0,767.0" fill="#7d7e81"/><polygon points="1187.0,767.0 1188.8,767.0 1190.6,765.7 1187.0,765.7" fill="#7d7e81"/><polygon points="1187.0,765.7 1190.6,765.7 1192.4,763.4 1187.0,763.4" fill="#7d7e81"/><polygon points="1187.0,763.4 1192.4,763.4 1194.1,760.3 1187.0,760.3" fill="#7d7e81"/><polygon points="1187.0,760.3 1194.1,760.3 1195.9,756.3 1187.0,756.3" fill="#7d7e81"/><polygon points="1187.0,756.3 1195.9,756.3 1197.6,751.4 1187.0,751.4" fill="#7d7e81"/><polygon points="1187.0,751.4 1197.6,751.4 1199.2,745.7 1187.0,745.7" fill="#7d7e81"/><polygon points="1187.0,745.7 1199.2,745.7 1200.8,739.2 1187.0,739.2" fill="#7d7e81"/><polygon points="1187.0,739.2 1200.8,739.2 1202.3,731.9 1187.0,731.9" fill="#7d7e81"/><polygon points="1187.0,731.9 1202.3,731.9 1203.8,723.8 1187.0,723.8" fill="#7d7e81"/><polygon points="1187.0,723.8 1203.8,723.8 1205.2,715.0 1187.0,715.0" fill="#7d7e81"/><polygon points="1187.0,715.0 1205.2,715.0 1206.5,705.6 1187.0,705.6" fill="#808184"/><polygon points="1187.0,705.6 1206.5,705.6 1207.8,695.5 1187.0,695.5" fill="#858689"/><polygon points="1187.0,695.5 1207.8,695.5 1208.9,684.8 1187.0,684.8" fill="#8b8c8f"/><polygon points="1187.0,684.8 1208.9,684.8 1210.0,673.5 1187.0,673.5" fill="#929396"/><polygon points="1187.0,673.5 1210.0,673.5 1210.9,661.8 1187.0,661.8" fill="#98999c"/><polygon points="1187.0,661.8 1210.9,661.8 1211.8,649.5 1187.0,649.5" fill="#9fa0a3"/><polygon points="1187.0,649.5 1211.8,649.5 1212.5,636.9 1187.0,636.9" fill="#a6a7aa"/><polygon points="1187.0,636.9 1212.5,636.9 1213.1,624.0 1187.0,624.0" fill="#adaeb1"/><polygon points="1187.0,624.0 1213.1,624.0 1213.7,610.7 1187.0,610.7" fill="#b5b6b9"/><polygon points="1187.0,610.7 1213.7,610.7 1214.1,597.3 1187.0,597.3" fill="#bcbdc0"/><polygon points="1187.0,597.3 1214.1,597.3 1214.4,583.6 1187.0,583.6" fill="#c4c5c8"/><polygon points="1187.0,583.6 1214.4,583.6 1214.5,569.8 1187.0,569.8" fill="#cccdd0"/><polygon points="1187.0,569.8 1214.5,569.8 1214.6,556.0 1187.0,556.0" fill="#d3d4d7"/><polygon points="1187.0,556.0 1214.6,556.0 1214.5,542.2 1187.0,542.2" fill="#dadbde"/><polygon points="1187.0,542.2 1214.5,542.2 1214.4,528.4 1187.0,528.4" fill="#dadbde"/><polygon points="1187.0,528.4 1214.4,528.4 1214.1,514.7 1187.0,514.7" fill="#dadbde"/><polygon points="1187.0,514.7 1214.1,514.7 1213.7,501.3 1187.0,501.3" fill="#dadbde"/><polygon points="1187.0,501.3 1213.7,501.3 1213.1,488.0 1187.0,488.0" fill="#dadbde"/><polygon points="1187.0,488.0 1213.1,488.0 1212.5,475.1 1187.0,475.1" fill="#dadbde"/><polygon points="1187.0,475.1 1212.5,475.1 1211.8,462.5 1187.0,462.5" fill="#d8d9dc"/><polygon points="1187.0,462.5 1211.8,462.5 1210.9,450.2 1187.0,450.2" fill="#d1d2d5"/><polygon points="1187.0,450.2 1210.9,450.2 1210.0,438.5 1187.0,438.5" fill="#c9cacd"/><polygon points="1187.0,438.5 1210.0,438.5 1208.9,427.2 1187.0,427.2" fill="#c1c2c5"/><polygon points="1187.0,427.2 1208.9,427.2 1207.8,416.5 1187.0,416.5" fill="#b9babd"/><polygon points="1187.0,416.5 1207.8,416.5 1206.5,406.4 1187.0,406.4" fill="#b1b2b5"/><polygon points="1187.0,406.4 1206.5,406.4 1205.2,397.0 1187.0,397.0" fill="#aaabae"/><polygon points="1187.0,397.0 1205.2,397.0 1203.8,388.2 1187.0,388.2" fill="#a3a4a7"/><polygon points="1187.0,388.2 1203.8,388.2 1202.3,380.1 1187.0,380.1" fill="#9d9ea1"/><polygon points="1187.0,380.1 1202.3,380.1 1200.8,372.8 1187.0,372.8" fill="#97989b"/><polygon points="1187.0,372.8 1200.8,372.8 1199.2,366.3 1187.0,366.3" fill="#919295"/><polygon points="1187.0,366.3 1199.2,366.3 1197.6,360.6 1187.0,360.6" fill="#8c8d90"/><polygon points="1187.0,360.6 1197.6,360.6 1195.9,355.7 1187.0,355.7" fill="#88898c"/><polygon points="1187.0,355.7 1195.9,355.7 1194.1,351.7 1187.0,351.7" fill="#858689"/><polygon points="1187.0,351.7 1194.1,351.7 1192.4,348.6 1187.0,348.6" fill="#828386"/><polygon points="1187.0,348.6 1192.4,348.6 1190.6,346.3 1187.0,346.3" fill="#808184"/><polygon points="1187.0,346.3 1190.6,346.3 1188.8,345.0 1187.0,345.0" fill="#7e7f82"/><polygon points="1187.0,345.0 1188.8,345.0 1187.0,344.5 1187.0,344.5" fill="#7e7f82"/><polygon points="1187.0,767.5 1187.0,767.5 1190.6,767.0 1188.8,767.0" fill="#7d7e81"/><polygon points="1188.8,767.0 1190.6,767.0 1194.1,765.7 1190.6,765.7" fill="#7d7e81"/><polygon points="1190.6,765.7 1194.1,765.7 1197.7,763.4 1192.4,763.4" fill="#7d7e81"/><polygon points="1192.4,763.4 1197.7,763.4 1201.2,760.3 1194.1,760.3" fill="#7d7e81"/><polygon points="1194.1,760.3 1201.2,760.3 1204.6,756.3 1195.9,756.3" fill="#7d7e81"/><polygon points="1195.9,756.3 1204.6,756.3 1207.9,751.4 1197.6,751.4" fill="#7d7e81"/><polygon points="1197.6,751.4 1207.9,751.4 1211.2,745.7 1199.2,745.7" fill="#7d7e81"/><polygon points="1199.2,745.7 1211.2,745.7 1214.4,739.2 1200.8,739.2" fill="#7d7e81"/><polygon points="1200.8,739.2 1214.4,739.2 1217.4,731.9 1202.3,731.9" fill="#7d7e81"/><polygon points="1202.3,731.9 1217.4,731.9 1220.3,723.8 1203.8,723.8" fill="#7d7e81"/><polygon points="1203.8,723.8 1220.3,723.8 1223.1,715.0 1205.2,715.0" fill="#7d7e81"/><polygon points="1205.2,715.0 1223.1,715.0 1225.7,705.6 1206.5,705.6" fill="#808184"/><polygon points="1206.5,705.6 1225.7,705.6 1228.2,695.5 1207.8,695.5" fill="#858689"/><polygon points="1207.8,695.5 1228.2,695.5 1230.4,684.8 1208.9,684.8" fill="#8a8b8e"/><polygon points="1208.9,684.8 1230.4,684.8 1232.5,673.5 1210.0,673.5" fill="#909194"/><polygon points="1210.0,673.5 1232.5,673.5 1234.4,661.8 1210.9,661.8" fill="#96979a"/><polygon points="1210.9,661.8 1234.4,661.8 1236.1,649.5 1211.8,649.5" fill="#9c9da0"/><polygon points="1211.8,649.5 1236.1,649.5 1237.6,636.9 1212.5,636.9" fill="#a2a3a6"/><polygon points="1212.5,636.9 1237.6,636.9 1238.8,624.0 1213.1,624.0" fill="#a9aaad"/><polygon points="1213.1,624.0 1238.8,624.0 1239.9,610.7 1213.7,610.7" fill="#afb0b3"/><polygon points="1213.7,610.7 1239.9,610.7 1240.7,597.3 1214.1,597.3" fill="#b6b7ba"/><polygon points="1214.1,597.3 1240.7,597.3 1241.3,583.6 1214.4,583.6" fill="#bdbec1"/><polygon points="1214.4,583.6 1241.3,583.6 1241.6,569.8 1214.5,569.8" fill="#c4c5c8"/><polygon points="1214.5,569.8 1241.6,569.8 1241.7,556.0 1214.6,556.0" fill="#cbcccf"/><polygon points="1214.6,556.0 1241.7,556.0 1241.6,542.2 1214.5,542.2" fill="#d1d2d5"/><polygon points="1214.5,542.2 1241.6,542.2 1241.3,528.4 1214.4,528.4" fill="#d1d2d5"/><polygon points="1214.4,528.4 1241.3,528.4 1240.7,514.7 1214.1,514.7" fill="#d1d2d5"/><polygon points="1214.1,514.7 1240.7,514.7 1239.9,501.3 1213.7,501.3" fill="#d1d2d5"/><polygon points="1213.7,501.3 1239.9,501.3 1238.8,488.0 1213.1,488.0" fill="#d1d2d5"/><polygon points="1213.1,488.0 1238.8,488.0 1237.6,475.1 1212.5,475.1" fill="#d1d2d5"/><polygon points="1212.5,475.1 1237.6,475.1 1236.1,462.5 1211.8,462.5" fill="#d0d1d4"/><polygon points="1211.8,462.5 1236.1,462.5 1234.4,450.2 1210.9,450.2" fill="#c9cacd"/><polygon points="1210.9,450.2 1234.4,450.2 1232.5,438.5 1210.0,438.5" fill="#c2c3c6"/><polygon points="1210.0,438.5 1232.5,438.5 1230.4,427.2 1208.9,427.2" fill="#babbbe"/><polygon points="1208.9,427.2 1230.4,427.2 1228.2,416.5 1207.8,416.5" fill="#b3b4b7"/><polygon points="1207.8,416.5 1228.2,416.5 1225.7,406.4 1206.5,406.4" fill="#acadb0"/><polygon points="1206.5,406.4 1225.7,406.4 1223.1,397.0 1205.2,397.0" fill="#a6a7aa"/><polygon points="1205.2,397.0 1223.1,397.0 1220.3,388.2 1203.8,388.2" fill="#a0a1a4"/><polygon points="1203.8,388.2 1220.3,388.2 1217.4,380.1 1202.3,380.1" fill="#9a9b9e"/><polygon points="1202.3,380.1 1217.4,380.1 1214.4,372.8 1200.8,372.8" fill="#949598"/><polygon points="1200.8,372.8 1214.4,372.8 1211.2,366.3 1199.2,366.3" fill="#8f9093"/><polygon points="1199.2,366.3 1211.2,366.3 1207.9,360.6 1197.6,360.6" fill="#8b8c8f"/><polygon points="1197.6,360.6 1207.9,360.6 1204.6,355.7 1195.9,355.7" fill="#87888b"/><polygon points="1195.9,355.7 1204.6,355.7 1201.2,351.7 1194.1,351.7" fill="#848588"/><polygon points="1194.1,351.7 1201.2,351.7 1197.7,348.6 1192.4,348.6" fill="#818285"/><polygon points="1192.4,348.6 1197.7,348.6 1194.1,346.3 1190.6,346.3" fill="#808184"/><polygon points="1190.6,346.3 1194.1,346.3 1190.6,345.0 1188.8,345.0" fill="#7e7f82"/><polygon points="1188.8,345.0 1190.6,345.0 1187.0,344.5 1187.0,344.5" fill="#7e7f82"/><polygon points="1187.0,767.5 1187.0,767.5 1192.3,767.0 1190.6,767.0" fill="#7d7e81"/><polygon points="1190.6,767.0 1192.3,767.0 1197.6,765.7 1194.1,765.7" fill="#7d7e81"/><polygon points="1194.1,765.7 1197.6,765.7 1202.8,763.4 1197.7,763.4" fill="#7d7e81"/><polygon points="1197.7,763.4 1202.8,763.4 1207.9,760.3 1201.2,760.3" fill="#7d7e81"/><polygon points="1201.2,760.3 1207.9,760.3 1213.0,756.3 1204.6,756.3" fill="#7d7e81"/><polygon points="1204.6,756.3 1213.0,756.3 1218.0,751.4 1207.9,751.4" fill="#7d7e81"/><polygon points="1207.9,751.4 1218.0,751.4 1222.8,745.7 1211.2,745.7" fill="#7d7e81"/><polygon points="1211.2,745.7 1222.8,745.7 1227.5,739.2 1214.4,739.2" fill="#7d7e81"/><polygon points="1214.4,739.2 1227.5,739.2 1232.0,731.9 1217.4,731.9" fill="#7d7e81"/><polygon points="1217.4,731.9 1232.0,731.9 1236.3,723.8 1220.3,723.8" fill="#7d7e81"/><polygon points="1220.3,723.8 1236.3,723.8 1240.4,715.0 1223.1,715.0" fill="#7d7e81"/><polygon points="1223.1,715.0 1240.4,715.0 1244.2,705.6 1225.7,705.6" fill="#7f8083"/><polygon points="1225.7,705.6 1244.2,705.6 1247.9,695.5 1228.2,695.5" fill="#838487"/><polygon points="1228.2,695.5 1247.9,695.5 1251.2,684.8 1230.4,684.8" fill="#88898c"/><polygon points="1230.4,684.8 1251.2,684.8 1254.3,673.5 1232.5,673.5" fill="#8c8d90"/><polygon points="1232.5,673.5 1254.3,673.5 1257.1,661.8 1234.4,661.8" fill="#919295"/><polygon points="1234.4,661.8 1257.1,661.8 1259.6,649.5 1236.1,649.5" fill="#96979a"/><polygon points="1236.1,649.5 1259.6,649.5 1261.8,636.9 1237.6,636.9" fill="#9c9da0"/><polygon points="1237.6,636.9 1261.8,636.9 1263.6,624.0 1238.8,624.0" fill="#a1a2a5"/><polygon points="1238.8,624.0 1263.6,624.0 1265.2,610.7 1239.9,610.7" fill="#a7a8ab"/><polygon points="1239.9,610.7 1265.2,610.7 1266.4,597.3 1240.7,597.3" fill="#acadb0"/><polygon points="1240.7,597.3 1266.4,597.3 1267.2,583.6 1241.3,583.6" fill="#b2b3b6"/><polygon points="1241.3,583.6 1267.2,583.6 1267.8,569.8 1241.6,569.8" fill="#b8b9bc"/><polygon points="1241.6,569.8 1267.8,569.8 1267.9,556.0 1241.7,556.0" fill="#bebfc2"/><polygon points="1241.7,556.0 1267.9,556.0 1267.8,542.2 1241.6,542.2" fill="#c2c3c6"/><polygon points="1241.6,542.2 1267.8,542.2 1267.2,528.4 1241.3,528.4" fill="#c2c3c6"/><polygon points="1241.3,528.4 1267.2,528.4 1266.4,514.7 1240.7,514.7" fill="#c2c3c6"/><polygon points="1240.7,514.7 1266.4,514.7 1265.2,501.3 1239.9,501.3" fill="#c2c3c6"/><polygon points="1239.9,501.3 1265.2,501.3 1263.6,488.0 1238.8,488.0" fill="#c2c3c6"/><polygon points="1238.8,488.0 1263.6,488.0 1261.8,475.1 1237.6,475.1" fill="#c2c3c6"/><polygon points="1237.6,475.1 1261.8,475.1 1259.6,462.5 1236.1,462.5" fill="#c1c2c5"/><polygon points="1236.1,462.5 1259.6,462.5 1257.1,450.2 1234.4,450.2" fill="#bcbdc0"/><polygon points="1234.4,450.2 1257.1,450.2 1254.3,438.5 1232.5,438.5" fill="#b6b7ba"/><polygon points="1232.5,438.5 1254.3,438.5 1251.2,427.2 1230.4,427.2" fill="#b0b1b4"/><polygon points="1230.4,427.2 1251.2,427.2 1247.9,416.5 1228.2,416.5" fill="#aaabae"/><polygon points="1228.2,416.5 1247.9,416.5 1244.2,406.4 1225.7,406.4" fill="#a4a5a8"/><polygon points="1225.7,406.4 1244.2,406.4 1240.4,397.0 1223.1,397.0" fill="#9fa0a3"/><polygon points="1223.1,397.0 1240.4,397.0 1236.3,388.2 1220.3,388.2" fill="#9a9b9e"/><polygon points="1220.3,388.2 1236.3,388.2 1232.0,380.1 1217.4,380.1" fill="#959699"/><polygon points="1217.4,380.1 1232.0,380.1 1227.5,372.8 1214.4,372.8" fill="#909194"/><polygon points="1214.4,372.8 1227.5,372.8 1222.8,366.3 1211.2,366.3" fill="#8c8d90"/><polygon points="1211.2,366.3 1222.8,366.3 1218.0,360.6 1207.9,360.6" fill="#898a8d"/><polygon points="1207.9,360.6 1218.0,360.6 1213.0,355.7 1204.6,355.7" fill="#86878a"/><polygon points="1204.6,355.7 1213.0,355.7 1207.9,351.7 1201.2,351.7" fill="#838487"/><polygon points="1201.2,351.7 1207.9,351.7 1202.8,348.6 1197.7,348.6" fill="#818285"/><polygon points="1197.7,348.6 1202.8,348.6 1197.6,346.3 1194.1,346.3" fill="#7f8083"/><polygon points="1194.1,346.3 1197.6,346.3 1192.3,345.0 1190.6,345.0" fill="#7e7f82"/><polygon points="1190.6,345.0 1192.3,345.0 1187.0,344.5 1187.0,344.5" fill="#7e7f82"/><polygon points="1187.0,767.5 1187.0,767.5 1193.9,767.0 1192.3,767.0" fill="#7d7e81"/><polygon points="1192.3,767.0 1193.9,767.0 1200.8,765.7 1197.6,765.7" fill="#7d7e81"/><polygon points="1197.6,765.7 1200.8,765.7 1207.6,763.4 1202.8,763.4" fill="#7d7e81"/><polygon points="1202.8,763.4 1207.6,763.4 1214.4,760.3 1207.9,760.3" fill="#7d7e81"/><polygon points="1207.9,760.3 1214.4,760.3 1221.0,756.3 1213.0,756.3" fill="#7d7e81"/><polygon points="1213.0,756.3 1221.0,756.3 1227.5,751.4 1218.0,751.4" fill="#7d7e81"/><polygon points="1218.0,751.4 1227.5,751.4 1233.8,745.7 1222.8,745.7" fill="#7d7e81"/><polygon points="1222.8,745.7 1233.8,745.7 1239.9,739.2 1227.5,739.2" fill="#7d7e81"/><polygon points="1227.5,739.2 1239.9,739.2 1245.8,731.9 1232.0,731.9" fill="#7d7e81"/><polygon points="1232.0,731.9 1245.8,731.9 1251.4,723.8 1236.3,723.8" fill="#7d7e81"/><polygon points="1236.3,723.8 1251.4,723.8 1256.7,715.0 1240.4,715.0" fill="#7d7e81"/><polygon points="1240.4,715.0 1256.7,715.0 1261.8,705.6 1244.2,705.6" fill="#7f8083"/><polygon points="1244.2,705.6 1261.8,705.6 1266.5,695.5 1247.9,695.5" fill="#828386"/><polygon points="1247.9,695.5 1266.5,695.5 1270.9,684.8 1251.2,684.8" fill="#858689"/><polygon points="1251.2,684.8 1270.9,684.8 1274.9,673.5 1254.3,673.5" fill="#898a8d"/><polygon points="1254.3,673.5 1274.9,673.5 1278.6,661.8 1257.1,661.8" fill="#8d8e91"/><polygon points="1257.1,661.8 1278.6,661.8 1281.8,649.5 1259.6,649.5" fill="#909194"/><polygon points="1259.6,649.5 1281.8,649.5 1284.7,636.9 1261.8,636.9" fill="#949598"/><polygon points="1261.8,636.9 1284.7,636.9 1287.1,624.0 1263.6,624.0" fill="#999a9d"/><polygon points="1263.6,624.0 1287.1,624.0 1289.1,610.7 1265.2,610.7" fill="#9d9ea1"/><polygon points="1265.2,610.7 1289.1,610.7 1290.7,597.3 1266.4,597.3" fill="#a1a2a5"/><polygon points="1266.4,597.3 1290.7,597.3 1291.8,583.6 1267.2,583.6" fill="#a5a6a9"/><polygon points="1267.2,583.6 1291.8,583.6 1292.5,569.8 1267.8,569.8" fill="#aaabae"/><polygon points="1267.8,569.8 1292.5,569.8 1292.8,556.0 1267.9,556.0" fill="#aeafb2"/><polygon points="1267.9,556.0 1292.8,556.0 1292.5,542.2 1267.8,542.2" fill="#b2b3b6"/><polygon points="1267.8,542.2 1292.5,542.2 1291.8,528.4 1267.2,528.4" fill="#b2b3b6"/><polygon points="1267.2,528.4 1291.8,528.4 1290.7,514.7 1266.4,514.7" fill="#b2b3b6"/><polygon points="1266.4,514.7 1290.7,514.7 1289.1,501.3 1265.2,501.3" fill="#b2b3b6"/><polygon points="1265.2,501.3 1289.1,501.3 1287.1,488.0 1263.6,488.0" fill="#b2b3b6"/><polygon points="1263.6,488.0 1287.1,488.0 1284.7,475.1 1261.8,475.1" fill="#b2b3b6"/><polygon points="1261.8,475.1 1284.7,475.1 1281.8,462.5 1259.6,462.5" fill="#b1b2b5"/><polygon points="1259.6,462.5 1281.8,462.5 1278.6,450.2 1257.1,450.2" fill="#adaeb1"/><polygon points="1257.1,450.2 1278.6,450.2 1274.9,438.5 1254.3,438.5" fill="#a8a9ac"/><polygon points="1254.3,438.5 1274.9,438.5 1270.9,427.2 1251.2,427.2" fill="#a4a5a8"/><polygon points="1251.2,427.2 1270.9,427.2 1266.5,416.5 1247.9,416.5" fill="#9fa0a3"/><polygon points="1247.9,416.5 1266.5,416.5 1261.8,406.4 1244.2,406.4" fill="#9b9c9f"/><polygon points="1244.2,406.4 1261.8,406.4 1256.7,397.0 1240.4,397.0" fill="#97989b"/><polygon points="1240.4,397.0 1256.7,397.0 1251.4,388.2 1236.3,388.2" fill="#939497"/><polygon points="1236.3,388.2 1251.4,388.2 1245.8,380.1 1232.0,380.1" fill="#8f9093"/><polygon points="1232.0,380.1 1245.8,380.1 1239.9,372.8 1227.5,372.8" fill="#8c8d90"/><polygon points="1227.5,372.8 1239.9,372.8 1233.8,366.3 1222.8,366.3" fill="#898a8d"/><polygon points="1222.8,366.3 1233.8,366.3 1227.5,360.6 1218.0,360.6" fill="#86878a"/><polygon points="1218.0,360.6 1227.5,360.6 1221.0,355.7 1213.0,355.7" fill="#848588"/><polygon points="1213.0,355.7 1221.0,355.7 1214.4,351.7 1207.9,351.7" fill="#828386"/><polygon points="1207.9,351.7 1214.4,351.7 1207.6,348.6 1202.8,348.6" fill="#808184"/><polygon points="1202.8,348.6 1207.6,348.6 1200.8,346.3 1197.6,346.3" fill="#7f8083"/><polygon points="1197.6,346.3 1200.8,346.3 1193.9,345.0 1192.3,345.0" fill="#7e7f82"/><polygon points="1192.3,345.0 1193.9,345.0 1187.0,344.5 1187.0,344.5" fill="#7e7f82"/><polygon points="1187.0,767.5 1187.0,767.5 1195.4,767.0 1193.9,767.0" fill="#7d7e81"/><polygon points="1193.9,767.0 1195.4,767.0 1203.8,765.7 1200.8,765.7" fill="#7d7e81"/><polygon points="1200.8,765.7 1203.8,765.7 1212.1,763.4 1207.6,763.4" fill="#7d7e81"/><polygon points="1207.6,763.4 1212.1,763.4 1220.3,760.3 1214.4,760.3" fill="#7d7e81"/><polygon points="1214.4,760.3 1220.3,760.3 1228.4,756.3 1221.0,756.3" fill="#7d7e81"/><polygon points="1221.0,756.3 1228.4,756.3 1236.3,751.4 1227.5,751.4" fill="#7d7e81"/><polygon points="1227.5,751.4 1236.3,751.4 1243.9,745.7 1233.8,745.7" fill="#7d7e81"/><polygon points="1233.8,745.7 1243.9,745.7 1251.4,739.2 1239.9,739.2" fill="#7d7e81"/><polygon points="1239.9,739.2 1251.4,739.2 1258.5,731.9 1245.8,731.9" fill="#7d7e81"/><polygon points="1245.8,731.9 1258.5,731.9 1265.4,723.8 1251.4,723.8" fill="#7d7e81"/><polygon points="1251.4,723.8 1265.4,723.8 1271.9,715.0 1256.7,715.0" fill="#7d7e81"/><polygon points="1256.7,715.0 1271.9,715.0 1278.0,705.6 1261.8,705.6" fill="#7e7f82"/><polygon points="1261.8,705.6 1278.0,705.6 1283.8,695.5 1266.5,695.5" fill="#818285"/><polygon points="1266.5,695.5 1283.8,695.5 1289.1,684.8 1270.9,684.8" fill="#838487"/><polygon points="1270.9,684.8 1289.1,684.8 1294.1,673.5 1274.9,673.5" fill="#86878a"/><polygon points="1274.9,673.5 1294.1,673.5 1298.5,661.8 1278.6,661.8" fill="#88898c"/><polygon points="1278.6,661.8 1298.5,661.8 1302.5,649.5 1281.8,649.5" fill="#8b8c8f"/><polygon points="1281.8,649.5 1302.5,649.5 1306.0,636.9 1284.7,636.9" fill="#8e8f92"/><polygon points="1284.7,636.9 1306.0,636.9 1308.9,624.0 1287.1,624.0" fill="#919295"/><polygon points="1287.1,624.0 1308.9,624.0 1311.4,610.7 1289.1,610.7" fill="#949598"/><polygon points="1289.1,610.7 1311.4,610.7 1313.3,597.3 1290.7,597.3" fill="#97989b"/><polygon points="1290.7,597.3 1313.3,597.3 1314.7,583.6 1291.8,583.6" fill="#9a9b9e"/><polygon points="1291.8,583.6 1314.7,583.6 1315.5,569.8 1292.5,569.8" fill="#9e9fa2"/><polygon points="1292.5,569.8 1315.5,569.8 1315.8,556.0 1292.8,556.0" fill="#a1a2a5"/><polygon points="1292.8,556.0 1315.8,556.0 1315.5,542.2 1292.5,542.2" fill="#a4a5a8"/><polygon points="1292.5,542.2 1315.5,542.2 1314.7,528.4 1291.8,528.4" fill="#a4a5a8"/><polygon points="1291.8,528.4 1314.7,528.4 1313.3,514.7 1290.7,514.7" fill="#a4a5a8"/><polygon points="1290.7,514.7 1313.3,514.7 1311.4,501.3 1289.1,501.3" fill="#a4a5a8"/><polygon points="1289.1,501.3 1311.4,501.3 1308.9,488.0 1287.1,488.0" fill="#a4a5a8"/><polygon points="1287.1,488.0 1308.9,488.0 1306.0,475.1 1284.7,475.1" fill="#a4a5a8"/><polygon points="1284.7,475.1 1306.0,475.1 1302.5,462.5 1281.8,462.5" fill="#a3a4a7"/><polygon points="1281.8,462.5 1302.5,462.5 1298.5,450.2 1278.6,450.2" fill="#a0a1a4"/><polygon points="1278.6,450.2 1298.5,450.2 1294.1,438.5 1274.9,438.5" fill="#9d9ea1"/><polygon points="1274.9,438.5 1294.1,438.5 1289.1,427.2 1270.9,427.2" fill="#999a9d"/><polygon points="1270.9,427.2 1289.1,427.2 1283.8,416.5 1266.5,416.5" fill="#96979a"/><polygon points="1266.5,416.5 1283.8,416.5 1278.0,406.4 1261.8,406.4" fill="#939497"/><polygon points="1261.8,406.4 1278.0,406.4 1271.9,397.0 1256.7,397.0" fill="#909194"/><polygon points="1256.7,397.0 1271.9,397.0 1265.4,388.2 1251.4,388.2" fill="#8d8e91"/><polygon points="1251.4,388.2 1265.4,388.2 1258.5,380.1 1245.8,380.1" fill="#8a8b8e"/><polygon points="1245.8,380.1 1258.5,380.1 1251.4,372.8 1239.9,372.8" fill="#88898c"/><polygon points="1239.9,372.8 1251.4,372.8 1243.9,366.3 1233.8,366.3" fill="#86878a"/><polygon points="1233.8,366.3 1243.9,366.3 1236.3,360.6 1227.5,360.6" fill="#848588"/><polygon points="1227.5,360.6 1236.3,360.6 1228.4,355.7 1221.0,355.7" fill="#828386"/><polygon points="1221.0,355.7 1228.4,355.7 1220.3,351.7 1214.4,351.7" fill="#808184"/><polygon points="1214.4,351.7 1220.3,351.7 1212.1,348.6 1207.6,348.6" fill="#7f8083"/><polygon points="1207.6,348.6 1212.1,348.6 1203.8,346.3 1200.8,346.3" fill="#7e7f82"/><polygon points="1200.8,346.3 1203.8,346.3 1195.4,345.0 1193.9,345.0" fill="#7e7f82"/><polygon points="1193.9,345.0 1195.4,345.0 1187.0,344.5 1187.0,344.5" fill="#7d7e81"/><polygon points="1187.0,767.5 1187.0,767.5 1196.8,767.0 1195.4,767.0" fill="#7d7e81"/><polygon points="1195.4,767.0 1196.8,767.0 1206.5,765.7 1203.8,765.7" fill="#7d7e81"/><polygon points="1203.8,765.7 1206.5,765.7 1216.2,763.4 1212.1,763.4" fill="#7d7e81"/><polygon points="1212.1,763.4 1216.2,763.4 1225.7,760.3 1220.3,760.3" fill="#7d7e81"/><polygon points="1220.3,760.3 1225.7,760.3 1235.1,756.3 1228.4,756.3" fill="#7d7e81"/><polygon points="1228.4,756.3 1235.1,756.3 1244.2,751.4 1236.3,751.4" fill="#7d7e81"/><polygon points="1236.3,751.4 1244.2,751.4 1253.1,745.7 1243.9,745.7" fill="#7d7e81"/><polygon points="1243.9,745.7 1253.1,745.7 1261.8,739.2 1251.4,739.2" fill="#7d7e81"/><polygon points="1251.4,739.2 1261.8,739.2 1270.1,731.9 1258.5,731.9" fill="#7d7e81"/><polygon points="1258.5,731.9 1270.1,731.9 1278.0,723.8 1265.4,723.8" fill="#7d7e81"/><polygon points="1265.4,723.8 1278.0,723.8 1285.6,715.0 1271.9,715.0" fill="#7d7e81"/><polygon points="1271.9,715.0 1285.6,715.0 1292.8,705.6 1278.0,705.6" fill="#7e7f82"/><polygon points="1278.0,705.6 1292.8,705.6 1299.4,695.5 1283.8,695.5" fill="#808184"/><polygon points="1283.8,695.5 1299.4,695.5 1305.6,684.8 1289.1,684.8" fill="#818285"/><polygon points="1289.1,684.8 1305.6,684.8 1311.3,673.5 1294.1,673.5" fill="#838487"/><polygon points="1294.1,673.5 1311.3,673.5 1316.5,661.8 1298.5,661.8" fill="#858689"/><polygon points="1298.5,661.8 1316.5,661.8 1321.1,649.5 1302.5,649.5" fill="#87888b"/><polygon points="1302.5,649.5 1321.1,649.5 1325.2,636.9 1306.0,636.9" fill="#898a8d"/><polygon points="1306.0,636.9 1325.2,636.9 1328.6,624.0 1308.9,624.0" fill="#8c8d90"/><polygon points="1308.9,624.0 1328.6,624.0 1331.5,610.7 1311.4,610.7" fill="#8e8f92"/><polygon points="1311.4,610.7 1331.5,610.7 1333.7,597.3 1313.3,597.3" fill="#909194"/><polygon points="1313.3,597.3 1333.7,597.3 1335.3,583.6 1314.7,583.6" fill="#929396"/><polygon points="1314.7,583.6 1335.3,583.6 1336.2,569.8 1315.5,569.8" fill="#959699"/><polygon points="1315.5,569.8 1336.2,569.8 1336.6,556.0 1315.8,556.0" fill="#97989b"/><polygon points="1315.8,556.0 1336.6,556.0 1336.2,542.2 1315.5,542.2" fill="#999a9d"/><polygon points="1315.5,542.2 1336.2,542.2 1335.3,528.4 1314.7,528.4" fill="#999a9d"/><polygon points="1314.7,528.4 1335.3,528.4 1333.7,514.7 1313.3,514.7" fill="#999a9d"/><polygon points="1313.3,514.7 1333.7,514.7 1331.5,501.3 1311.4,501.3" fill="#999a9d"/><polygon points="1311.4,501.3 1331.5,501.3 1328.6,488.0 1308.9,488.0" fill="#999a9d"/><polygon points="1308.9,488.0 1328.6,488.0 1325.2,475.1 1306.0,475.1" fill="#999a9d"/><polygon points="1306.0,475.1 1325.2,475.1 1321.1,462.5 1302.5,462.5" fill="#98999c"/><polygon points="1302.5,462.5 1321.1,462.5 1316.5,450.2 1298.5,450.2" fill="#96979a"/><polygon points="1298.5,450.2 1316.5,450.2 1311.3,438.5 1294.1,438.5" fill="#949598"/><polygon points="1294.1,438.5 1311.3,438.5 1305.6,427.2 1289.1,427.2" fill="#919295"/><polygon points="1289.1,427.2 1305.6,427.2 1299.4,416.5 1283.8,416.5" fill="#8f9093"/><polygon points="1283.8,416.5 1299.4,416.5 1292.8,406.4 1278.0,406.4" fill="#8d8e91"/><polygon points="1278.0,406.4 1292.8,406.4 1285.6,397.0 1271.9,397.0" fill="#8b8c8f"/><polygon points="1271.9,397.0 1285.6,397.0 1278.0,388.2 1265.4,388.2" fill="#88898c"/><polygon points="1265.4,388.2 1278.0,388.2 1270.1,380.1 1258.5,380.1" fill="#87888b"/><polygon points="1258.5,380.1 1270.1,380.1 1261.8,372.8 1251.4,372.8" fill="#858689"/><polygon points="1251.4,372.8 1261.8,372.8 1253.1,366.3 1243.9,366.3" fill="#838487"/><polygon points="1243.9,366.3 1253.1,366.3 1244.2,360.6 1236.3,360.6" fill="#828386"/><polygon points="1236.3,360.6 1244.2,360.6 1235.1,355.7 1228.4,355.7" fill="#808184"/><polygon points="1228.4,355.7 1235.1,355.7 1225.7,351.7 1220.3,351.7" fill="#7f8083"/><polygon points="1220.3,351.7 1225.7,351.7 1216.2,348.6 1212.1,348.6" fill="#7f8083"/><polygon points="1212.1,348.6 1216.2,348.6 1206.5,346.3 1203.8,346.3" fill="#7e7f82"/><polygon points="1203.8,346.3 1206.5,346.3 1196.8,345.0 1195.4,345.0" fill="#7d7e81"/><polygon points="1195.4,345.0 1196.8,345.0 1187.0,344.5 1187.0,344.5" fill="#7d7e81"/><polygon points="1187.0,767.5 1187.0,767.5 1198.0,767.0 1196.8,767.0" fill="#7d7e81"/><polygon points="1196.8,767.0 1198.0,767.0 1208.9,765.7 1206.5,765.7" fill="#7d7e81"/><polygon points="1206.5,765.7 1208.9,765.7 1219.7,763.4 1216.2,763.4" fill="#7d7e81"/><polygon points="1216.2,763.4 1219.7,763.4 1230.4,760.3 1225.7,760.3" fill="#7d7e81"/><polygon points="1225.7,760.3 1230.4,760.3 1240.9,756.3 1235.1,756.3" fill="#7d7e81"/><polygon points="1235.1,756.3 1240.9,756.3 1251.2,751.4 1244.2,751.4" fill="#7d7e81"/><polygon points="1244.2,751.4 1251.2,751.4 1261.2,745.7 1253.1,745.7" fill="#7d7e81"/><polygon points="1253.1,745.7 1261.2,745.7 1270.9,739.2 1261.8,739.2" fill="#7d7e81"/><polygon points="1261.8,739.2 1270.9,739.2 1280.2,731.9 1270.1,731.9" fill="#7d7e81"/><polygon points="1270.1,731.9 1280.2,731.9 1289.1,723.8 1278.0,723.8" fill="#7d7e81"/><polygon points="1278.0,723.8 1289.1,723.8 1297.6,715.0 1285.6,715.0" fill="#7d7e81"/><polygon points="1285.6,715.0 1297.6,715.0 1305.6,705.6 1292.8,705.6" fill="#7d7e81"/><polygon points="1292.8,705.6 1305.6,705.6 1313.2,695.5 1299.4,695.5" fill="#7f8083"/><polygon points="1299.4,695.5 1313.2,695.5 1320.1,684.8 1305.6,684.8" fill="#808184"/><polygon points="1305.6,684.8 1320.1,684.8 1326.5,673.5 1311.3,673.5" fill="#818285"/><polygon points="1311.3,673.5 1326.5,673.5 1332.3,661.8 1316.5,661.8" fill="#838487"/><polygon points="1316.5,661.8 1332.3,661.8 1337.5,649.5 1321.1,649.5" fill="#848588"/><polygon points="1321.1,649.5 1337.5,649.5 1342.0,636.9 1325.2,636.9" fill="#86878a"/><polygon points="1325.2,636.9 1342.0,636.9 1345.9,624.0 1328.6,624.0" fill="#88898c"/><polygon points="1328.6,624.0 1345.9,624.0 1349.1,610.7 1331.5,610.7" fill="#898a8d"/><polygon points="1331.5,610.7 1349.1,610.7 1351.6,597.3 1333.7,597.3" fill="#8b8c8f"/><polygon points="1333.7,597.3 1351.6,597.3 1353.4,583.6 1335.3,583.6" fill="#8d8e91"/><polygon points="1335.3,583.6 1353.4,583.6 1354.4,569.8 1336.2,569.8" fill="#8e8f92"/><polygon points="1336.2,569.8 1354.4,569.8 1354.8,556.0 1336.6,556.0" fill="#909194"/><polygon points="1336.6,556.0 1354.8,556.0 1354.4,542.2 1336.2,542.2" fill="#929396"/><polygon points="1336.2,542.2 1354.4,542.2 1353.4,528.4 1335.3,528.4" fill="#929396"/><polygon points="1335.3,528.4 1353.4,528.4 1351.6,514.7 1333.7,514.7" fill="#929396"/><polygon points="1333.7,514.7 1351.6,514.7 1349.1,501.3 1331.5,501.3" fill="#929396"/><polygon points="1331.5,501.3 1349.1,501.3 1345.9,488.0 1328.6,488.0" fill="#929396"/><polygon points="1328.6,488.0 1345.9,488.0 1342.0,475.1 1325.2,475.1" fill="#929396"/><polygon points="1325.2,475.1 1342.0,475.1 1337.5,462.5 1321.1,462.5" fill="#919295"/><polygon points="1321.1,462.5 1337.5,462.5 1332.3,450.2 1316.5,450.2" fill="#909194"/><polygon points="1316.5,450.2 1332.3,450.2 1326.5,438.5 1311.3,438.5" fill="#8e8f92"/><polygon points="1311.3,438.5 1326.5,438.5 1320.1,427.2 1305.6,427.2" fill="#8c8d90"/><polygon points="1305.6,427.2 1320.1,427.2 1313.2,416.5 1299.4,416.5" fill="#8a8b8e"/><polygon points="1299.4,416.5 1313.2,416.5 1305.6,406.4 1292.8,406.4" fill="#88898c"/><polygon points="1292.8,406.4 1305.6,406.4 1297.6,397.0 1285.6,397.0" fill="#87888b"/><polygon points="1285.6,397.0 1297.6,397.0 1289.1,388.2 1278.0,388.2" fill="#858689"/><polygon points="1278.0,388.2 1289.1,388.2 1280.2,380.1 1270.1,380.1" fill="#848588"/><polygon points="1270.1,380.1 1280.2,380.1 1270.9,372.8 1261.8,372.8" fill="#838487"/><polygon points="1261.8,372.8 1270.9,372.8 1261.2,366.3 1253.1,366.3" fill="#818285"/><polygon points="1253.1,366.3 1261.2,366.3 1251.2,360.6 1244.2,360.6" fill="#808184"/><polygon points="1244.2,360.6 1251.2,360.6 1240.9,355.7 1235.1,355.7" fill="#7f8083"/><polygon points="1235.1,355.7 1240.9,355.7 1230.4,351.7 1225.7,351.7" fill="#7e7f82"/><polygon points="1225.7,351.7 1230.4,351.7 1219.7,348.6 1216.2,348.6" fill="#7e7f82"/><polygon points="1216.2,348.6 1219.7,348.6 1208.9,346.3 1206.5,346.3" fill="#7d7e81"/><polygon points="1206.5,346.3 1208.9,346.3 1198.0,345.0 1196.8,345.0" fill="#7d7e81"/><polygon points="1196.8,345.0 1198.0,345.0 1187.0,344.5 1187.0,344.5" fill="#7d7e81"/><polygon points="1187.0,767.5 1187.0,767.5 1199.0,767.0 1198.0,767.0" fill="#7c7d80"/><polygon points="1198.0,767.0 1199.0,767.0 1210.9,765.7 1208.9,765.7" fill="#7c7d80"/><polygon points="1208.9,765.7 1210.9,765.7 1222.7,763.4 1219.7,763.4" fill="#7c7d80"/><polygon points="1219.7,763.4 1222.7,763.4 1234.4,760.3 1230.4,760.3" fill="#7c7d80"/><polygon points="1230.4,760.3 1234.4,760.3 1245.9,756.3 1240.9,756.3" fill="#7c7d80"/><polygon points="1240.9,756.3 1245.9,756.3 1257.1,751.4 1251.2,751.4" fill="#7c7d80"/><polygon points="1251.2,751.4 1257.1,751.4 1268.0,745.7 1261.2,745.7" fill="#7c7d80"/><polygon points="1261.2,745.7 1268.0,745.7 1278.6,739.2 1270.9,739.2" fill="#7c7d80"/><polygon points="1270.9,739.2 1278.6,739.2 1288.8,731.9 1280.2,731.9" fill="#7c7d80"/><polygon points="1280.2,731.9 1288.8,731.9 1298.5,723.8 1289.1,723.8" fill="#7c7d80"/><polygon points="1289.1,723.8 1298.5,723.8 1307.8,715.0 1297.6,715.0" fill="#7c7d80"/><polygon points="1297.6,715.0 1307.8,715.0 1316.5,705.6 1305.6,705.6" fill="#7c7d80"/><polygon points="1305.6,705.6 1316.5,705.6 1324.7,695.5 1313.2,695.5" fill="#7d7e81"/><polygon points="1313.2,695.5 1324.7,695.5 1332.3,684.8 1320.1,684.8" fill="#7e7f82"/><polygon points="1320.1,684.8 1332.3,684.8 1339.3,673.5 1326.5,673.5" fill="#808184"/><polygon points="1326.5,673.5 1339.3,673.5 1345.6,661.8 1332.3,661.8" fill="#818285"/><polygon points="1332.3,661.8 1345.6,661.8 1351.3,649.5 1337.5,649.5" fill="#828386"/><polygon points="1337.5,649.5 1351.3,649.5 1356.2,636.9 1342.0,636.9" fill="#838487"/><polygon points="1342.0,636.9 1356.2,636.9 1360.4,624.0 1345.9,624.0" fill="#848588"/><polygon points="1345.9,624.0 1360.4,624.0 1363.9,610.7 1349.1,610.7" fill="#86878a"/><polygon points="1349.1,610.7 1363.9,610.7 1366.6,597.3 1351.6,597.3" fill="#87888b"/><polygon points="1351.6,597.3 1366.6,597.3 1368.6,583.6 1353.4,583.6" fill="#88898c"/><polygon points="1353.4,583.6 1368.6,583.6 1369.8,569.8 1354.4,569.8" fill="#8a8b8e"/><polygon points="1354.4,569.8 1369.8,569.8 1370.2,556.0 1354.8,556.0" fill="#8b8c8f"/><polygon points="1354.8,556.0 1370.2,556.0 1369.8,542.2 1354.4,542.2" fill="#8c8d90"/><polygon points="1354.4,542.2 1369.8,542.2 1368.6,528.4 1353.4,528.4" fill="#8c8d90"/><polygon points="1353.4,528.4 1368.6,528.4 1366.6,514.7 1351.6,514.7" fill="#8c8d90"/><polygon points="1351.6,514.7 1366.6,514.7 1363.9,501.3 1349.1,501.3" fill="#8c8d90"/><polygon points="1349.1,501.3 1363.9,501.3 1360.4,488.0 1345.9,488.0" fill="#8c8d90"/><polygon points="1345.9,488.0 1360.4,488.0 1356.2,475.1 1342.0,475.1" fill="#8c8d90"/><polygon points="1342.0,475.1 1356.2,475.1 1351.3,462.5 1337.5,462.5" fill="#8c8d90"/><polygon points="1337.5,462.5 1351.3,462.5 1345.6,450.2 1332.3,450.2" fill="#8b8c8f"/><polygon points="1332.3,450.2 1345.6,450.2 1339.3,438.5 1326.5,438.5" fill="#898a8d"/><polygon points="1326.5,438.5 1339.3,438.5 1332.3,427.2 1320.1,427.2" fill="#88898c"/><polygon points="1320.1,427.2 1332.3,427.2 1324.7,416.5 1313.2,416.5" fill="#86878a"/><polygon points="1313.2,416.5 1324.7,416.5 1316.5,406.4 1305.6,406.4" fill="#858689"/><polygon points="1305.6,406.4 1316.5,406.4 1307.8,397.0 1297.6,397.0" fill="#848588"/><polygon points="1297.6,397.0 1307.8,397.0 1298.5,388.2 1289.1,388.2" fill="#838487"/><polygon points="1289.1,388.2 1298.5,388.2 1288.8,380.1 1280.2,380.1" fill="#828386"/><polygon points="1280.2,380.1 1288.8,380.1 1278.6,372.8 1270.9,372.8" fill="#808184"/><polygon points="1270.9,372.8 1278.6,372.8 1268.0,366.3 1261.2,366.3" fill="#808184"/><polygon points="1261.2,366.3 1268.0,366.3 1257.1,360.6 1251.2,360.6" fill="#7f8083"/><polygon points="1251.2,360.6 1257.1,360.6 1245.9,355.7 1240.9,355.7" fill="#7e7f82"/><polygon points="1240.9,355.7 1245.9,355.7 1234.4,351.7 1230.4,351.7" fill="#7d7e81"/><polygon points="1230.4,351.7 1234.4,351.7 1222.7,348.6 1219.7,348.6" fill="#7d7e81"/><polygon points="1219.7,348.6 1222.7,348.6 1210.9,346.3 1208.9,346.3" fill="#7c7d80"/><polygon points="1208.9,346.3 1210.9,346.3 1199.0,345.0 1198.0,345.0" fill="#7c7d80"/><polygon points="1198.0,345.0 1199.0,345.0 1187.0,344.5 1187.0,344.5" fill="#7c7d80"/><polygon points="1187.0,767.5 1187.0,767.5 1199.8,767.0 1199.0,767.0" fill="#7b7c7f"/><polygon points="1199.0,767.0 1199.8,767.0 1212.5,765.7 1210.9,765.7" fill="#7b7c7f"/><polygon points="1210.9,765.7 1212.5,765.7 1225.1,763.4 1222.7,763.4" fill="#7b7c7f"/><polygon points="1222.7,763.4 1225.1,763.4 1237.6,760.3 1234.4,760.3" fill="#7b7c7f"/><polygon points="1234.4,760.3 1237.6,760.3 1249.8,756.3 1245.9,756.3" fill="#7b7c7f"/><polygon points="1245.9,756.3 1249.8,756.3 1261.8,751.4 1257.1,751.4" fill="#7b7c7f"/><polygon points="1257.1,751.4 1261.8,751.4 1273.4,745.7 1268.0,745.7" fill="#7b7c7f"/><polygon points="1268.0,745.7 1273.4,745.7 1284.7,739.2 1278.6,739.2" fill="#7b7c7f"/><polygon points="1278.6,739.2 1284.7,739.2 1295.6,731.9 1288.8,731.9" fill="#7b7c7f"/><polygon points="1288.8,731.9 1295.6,731.9 1306.0,723.8 1298.5,723.8" fill="#7b7c7f"/><polygon points="1298.5,723.8 1306.0,723.8 1315.8,715.0 1307.8,715.0" fill="#7b7c7f"/><polygon points="1307.8,715.0 1315.8,715.0 1325.2,705.6 1316.5,705.6" fill="#7b7c7f"/><polygon points="1316.5,705.6 1325.2,705.6 1333.9,695.5 1324.7,695.5" fill="#7c7d80"/><polygon points="1324.7,695.5 1333.9,695.5 1342.0,684.8 1332.3,684.8" fill="#7d7e81"/><polygon points="1332.3,684.8 1342.0,684.8 1349.5,673.5 1339.3,673.5" fill="#7d7e81"/><polygon points="1339.3,673.5 1349.5,673.5 1356.2,661.8 1345.6,661.8" fill="#7e7f82"/><polygon points="1345.6,661.8 1356.2,661.8 1362.2,649.5 1351.3,649.5" fill="#7f8083"/><polygon points="1351.3,649.5 1362.2,649.5 1367.5,636.9 1356.2,636.9" fill="#808184"/><polygon points="1356.2,636.9 1367.5,636.9 1372.0,624.0 1360.4,624.0" fill="#818285"/><polygon points="1360.4,624.0 1372.0,624.0 1375.7,610.7 1363.9,610.7" fill="#828386"/><polygon points="1363.9,610.7 1375.7,610.7 1378.6,597.3 1366.6,597.3" fill="#838487"/><polygon points="1366.6,597.3 1378.6,597.3 1380.7,583.6 1368.6,583.6" fill="#848588"/><polygon points="1368.6,583.6 1380.7,583.6 1382.0,569.8 1369.8,569.8" fill="#858689"/><polygon points="1369.8,569.8 1382.0,569.8 1382.4,556.0 1370.2,556.0" fill="#86878a"/><polygon points="1370.2,556.0 1382.4,556.0 1382.0,542.2 1369.8,542.2" fill="#87888b"/><polygon points="1369.8,542.2 1382.0,542.2 1380.7,528.4 1368.6,528.4" fill="#87888b"/><polygon points="1368.6,528.4 1380.7,528.4 1378.6,514.7 1366.6,514.7" fill="#87888b"/><polygon points="1366.6,514.7 1378.6,514.7 1375.7,501.3 1363.9,501.3" fill="#87888b"/><polygon points="1363.9,501.3 1375.7,501.3 1372.0,488.0 1360.4,488.0" fill="#87888b"/><polygon points="1360.4,488.0 1372.0,488.0 1367.5,475.1 1356.2,475.1" fill="#87888b"/><polygon points="1356.2,475.1 1367.5,475.1 1362.2,462.5 1351.3,462.5" fill="#87888b"/><polygon points="1351.3,462.5 1362.2,462.5 1356.2,450.2 1345.6,450.2" fill="#86878a"/><polygon points="1345.6,450.2 1356.2,450.2 1349.5,438.5 1339.3,438.5" fill="#858689"/><polygon points="1339.3,438.5 1349.5,438.5 1342.0,427.2 1332.3,427.2" fill="#848588"/><polygon points="1332.3,427.2 1342.0,427.2 1333.9,416.5 1324.7,416.5" fill="#838487"/><polygon points="1324.7,416.5 1333.9,416.5 1325.2,406.4 1316.5,406.4" fill="#828386"/><polygon points="1316.5,406.4 1325.2,406.4 1315.8,397.0 1307.8,397.0" fill="#818285"/><polygon points="1307.8,397.0 1315.8,397.0 1306.0,388.2 1298.5,388.2" fill="#808184"/><polygon points="1298.5,388.2 1306.0,388.2 1295.6,380.1 1288.8,380.1" fill="#7f8083"/><polygon points="1288.8,380.1 1295.6,380.1 1284.7,372.8 1278.6,372.8" fill="#7e7f82"/><polygon points="1278.6,372.8 1284.7,372.8 1273.4,366.3 1268.0,366.3" fill="#7d7e81"/><polygon points="1268.0,366.3 1273.4,366.3 1261.8,360.6 1257.1,360.6" fill="#7d7e81"/><polygon points="1257.1,360.6 1261.8,360.6 1249.8,355.7 1245.9,355.7" fill="#7c7d80"/><polygon points="1245.9,355.7 1249.8,355.7 1237.6,351.7 1234.4,351.7" fill="#7c7d80"/><polygon points="1234.4,351.7 1237.6,351.7 1225.1,348.6 1222.7,348.6" fill="#7b7c7f"/><polygon points="1222.7,348.6 1225.1,348.6 1212.5,346.3 1210.9,346.3" fill="#7b7c7f"/><polygon points="1210.9,346.3 1212.5,346.3 1199.8,345.0 1199.0,345.0" fill="#7b7c7f"/><polygon points="1199.0,345.0 1199.8,345.0 1187.0,344.5 1187.0,344.5" fill="#7b7c7f"/><polygon points="1187.0,767.5 1187.0,767.5 1200.4,767.0 1199.8,767.0" fill="#797a7d"/><polygon points="1199.8,767.0 1200.4,767.0 1213.7,765.7 1212.5,765.7" fill="#797a7d"/><polygon points="1212.5,765.7 1213.7,765.7 1226.9,763.4 1225.1,763.4" fill="#797a7d"/><polygon points="1225.1,763.4 1226.9,763.4 1239.9,760.3 1237.6,760.3" fill="#797a7d"/><polygon points="1237.6,760.3 1239.9,760.3 1252.7,756.3 1249.8,756.3" fill="#797a7d"/><polygon points="1249.8,756.3 1252.7,756.3 1265.2,751.4 1261.8,751.4" fill="#797a7d"/><polygon points="1261.8,751.4 1265.2,751.4 1277.4,745.7 1273.4,745.7" fill="#797a7d"/><polygon points="1273.4,745.7 1277.4,745.7 1289.1,739.2 1284.7,739.2" fill="#797a7d"/><polygon points="1284.7,739.2 1289.1,739.2 1300.5,731.9 1295.6,731.9" fill="#797a7d"/><polygon points="1295.6,731.9 1300.5,731.9 1311.4,723.8 1306.0,723.8" fill="#797a7d"/><polygon points="1306.0,723.8 1311.4,723.8 1321.7,715.0 1315.8,715.0" fill="#797a7d"/><polygon points="1315.8,715.0 1321.7,715.0 1331.5,705.6 1325.2,705.6" fill="#797a7d"/><polygon points="1325.2,705.6 1331.5,705.6 1340.6,695.5 1333.9,695.5" fill="#797a7d"/><polygon points="1333.9,695.5 1340.6,695.5 1349.1,684.8 1342.0,684.8" fill="#7a7b7e"/><polygon points="1342.0,684.8 1349.1,684.8 1356.9,673.5 1349.5,673.5" fill="#7a7b7e"/><polygon points="1349.5,673.5 1356.9,673.5 1363.9,661.8 1356.2,661.8" fill="#7b7c7f"/><polygon points="1356.2,661.8 1363.9,661.8 1370.2,649.5 1362.2,649.5" fill="#7c7d80"/><polygon points="1362.2,649.5 1370.2,649.5 1375.7,636.9 1367.5,636.9" fill="#7c7d80"/><polygon points="1367.5,636.9 1375.7,636.9 1380.5,624.0 1372.0,624.0" fill="#7d7e81"/><polygon points="1372.0,624.0 1380.5,624.0 1384.3,610.7 1375.7,610.7" fill="#7e7f82"/><polygon points="1375.7,610.7 1384.3,610.7 1387.4,597.3 1378.6,597.3" fill="#7f8083"/><polygon points="1378.6,597.3 1387.4,597.3 1389.5,583.6 1380.7,583.6" fill="#7f8083"/><polygon points="1380.7,583.6 1389.5,583.6 1390.9,569.8 1382.0,569.8" fill="#808184"/><polygon points="1382.0,569.8 1390.9,569.8 1391.3,556.0 1382.4,556.0" fill="#818285"/><polygon points="1382.4,556.0 1391.3,556.0 1390.9,542.2 1382.0,542.2" fill="#818285"/><polygon points="1382.0,542.2 1390.9,542.2 1389.5,528.4 1380.7,528.4" fill="#818285"/><polygon points="1380.7,528.4 1389.5,528.4 1387.4,514.7 1378.6,514.7" fill="#818285"/><polygon points="1378.6,514.7 1387.4,514.7 1384.3,501.3 1375.7,501.3" fill="#818285"/><polygon points="1375.7,501.3 1384.3,501.3 1380.5,488.0 1372.0,488.0" fill="#818285"/><polygon points="1372.0,488.0 1380.5,488.0 1375.7,475.1 1367.5,475.1" fill="#818285"/><polygon points="1367.5,475.1 1375.7,475.1 1370.2,462.5 1362.2,462.5" fill="#818285"/><polygon points="1362.2,462.5 1370.2,462.5 1363.9,450.2 1356.2,450.2" fill="#818285"/><polygon points="1356.2,450.2 1363.9,450.2 1356.9,438.5 1349.5,438.5" fill="#808184"/><polygon points="1349.5,438.5 1356.9,438.5 1349.1,427.2 1342.0,427.2" fill="#7f8083"/><polygon points="1342.0,427.2 1349.1,427.2 1340.6,416.5 1333.9,416.5" fill="#7e7f82"/><polygon points="1333.9,416.5 1340.6,416.5 1331.5,406.4 1325.2,406.4" fill="#7e7f82"/><polygon points="1325.2,406.4 1331.5,406.4 1321.7,397.0 1315.8,397.0" fill="#7d7e81"/><polygon points="1315.8,397.0 1321.7,397.0 1311.4,388.2 1306.0,388.2" fill="#7c7d80"/><polygon points="1306.0,388.2 1311.4,388.2 1300.5,380.1 1295.6,380.1" fill="#7c7d80"/><polygon points="1295.6,380.1 1300.5,380.1 1289.1,372.8 1284.7,372.8" fill="#7b7c7f"/><polygon points="1284.7,372.8 1289.1,372.8 1277.4,366.3 1273.4,366.3" fill="#7a7b7e"/><polygon points="1273.4,366.3 1277.4,366.3 1265.2,360.6 1261.8,360.6" fill="#7a7b7e"/><polygon points="1261.8,360.6 1265.2,360.6 1252.7,355.7 1249.8,355.7" fill="#7a7b7e"/><polygon points="1249.8,355.7 1252.7,355.7 1239.9,351.7 1237.6,351.7" fill="#797a7d"/><polygon points="1237.6,351.7 1239.9,351.7 1226.9,348.6 1225.1,348.6" fill="#797a7d"/><polygon points="1225.1,348.6 1226.9,348.6 1213.7,346.3 1212.5,346.3" fill="#797a7d"/><polygon points="1212.5,346.3 1213.7,346.3 1200.4,345.0 1199.8,345.0" fill="#797a7d"/><polygon points="1199.8,345.0 1200.4,345.0 1187.0,344.5 1187.0,344.5" fill="#797a7d"/><polygon points="1187.0,767.5 1187.0,767.5 1200.7,767.0 1200.4,767.0" fill="#757679"/><polygon points="1200.4,767.0 1200.7,767.0 1214.4,765.7 1213.7,765.7" fill="#757679"/><polygon points="1213.7,765.7 1214.4,765.7 1227.9,763.4 1226.9,763.4" fill="#757679"/><polygon points="1226.9,763.4 1227.9,763.4 1241.3,760.3 1239.9,760.3" fill="#757679"/><polygon points="1239.9,760.3 1241.3,760.3 1254.4,756.3 1252.7,756.3" fill="#757679"/><polygon points="1252.7,756.3 1254.4,756.3 1267.2,751.4 1265.2,751.4" fill="#757679"/><polygon points="1265.2,751.4 1267.2,751.4 1279.7,745.7 1277.4,745.7" fill="#757679"/><polygon points="1277.4,745.7 1279.7,745.7 1291.8,739.2 1289.1,739.2" fill="#757679"/><polygon points="1289.1,739.2 1291.8,739.2 1303.5,731.9 1300.5,731.9" fill="#757679"/><polygon points="1300.5,731.9 1303.5,731.9 1314.7,723.8 1311.4,723.8" fill="#757679"/><polygon points="1311.4,723.8 1314.7,723.8 1325.3,715.0 1321.7,715.0" fill="#757679"/><polygon points="1321.7,715.0 1325.3,715.0 1335.3,705.6 1331.5,705.6" fill="#757679"/><polygon points="1331.5,705.6 1335.3,705.6 1344.7,695.5 1340.6,695.5" fill="#76777a"/><polygon points="1340.6,695.5 1344.7,695.5 1353.4,684.8 1349.1,684.8" fill="#76777a"/><polygon points="1349.1,684.8 1353.4,684.8 1361.4,673.5 1356.9,673.5" fill="#76777a"/><polygon points="1356.9,673.5 1361.4,673.5 1368.6,661.8 1363.9,661.8" fill="#77787b"/><polygon points="1363.9,661.8 1368.6,661.8 1375.1,649.5 1370.2,649.5" fill="#77787b"/><polygon points="1370.2,649.5 1375.1,649.5 1380.7,636.9 1375.7,636.9" fill="#78797c"/><polygon points="1375.7,636.9 1380.7,636.9 1385.6,624.0 1380.5,624.0" fill="#78797c"/><polygon points="1380.5,624.0 1385.6,624.0 1389.5,610.7 1384.3,610.7" fill="#78797c"/><polygon points="1384.3,610.7 1389.5,610.7 1392.7,597.3 1387.4,597.3" fill="#797a7d"/><polygon points="1387.4,597.3 1392.7,597.3 1394.9,583.6 1389.5,583.6" fill="#797a7d"/><polygon points="1389.5,583.6 1394.9,583.6 1396.2,569.8 1390.9,569.8" fill="#7a7b7e"/><polygon points="1390.9,569.8 1396.2,569.8 1396.7,556.0 1391.3,556.0" fill="#7a7b7e"/><polygon points="1391.3,556.0 1396.7,556.0 1396.2,542.2 1390.9,542.2" fill="#7b7c7f"/><polygon points="1390.9,542.2 1396.2,542.2 1394.9,528.4 1389.5,528.4" fill="#7b7c7f"/><polygon points="1389.5,528.4 1394.9,528.4 1392.7,514.7 1387.4,514.7" fill="#7b7c7f"/><polygon points="1387.4,514.7 1392.7,514.7 1389.5,501.3 1384.3,501.3" fill="#7b7c7f"/><polygon points="1384.3,501.3 1389.5,501.3 1385.6,488.0 1380.5,488.0" fill="#7b7c7f"/><polygon points="1380.5,488.0 1385.6,488.0 1380.7,475.1 1375.7,475.1" fill="#7b7c7f"/><polygon points="1375.7,475.1 1380.7,475.1 1375.1,462.5 1370.2,462.5" fill="#7b7c7f"/><polygon points="1370.2,462.5 1375.1,462.5 1368.6,450.2 1363.9,450.2" fill="#7a7b7e"/><polygon points="1363.9,450.2 1368.6,450.2 1361.4,438.5 1356.9,438.5" fill="#7a7b7e"/><polygon points="1356.9,438.5 1361.4,438.5 1353.4,427.2 1349.1,427.2" fill="#797a7d"/><polygon points="1349.1,427.2 1353.4,427.2 1344.7,416.5 1340.6,416.5" fill="#797a7d"/><polygon points="1340.6,416.5 1344.7,416.5 1335.3,406.4 1331.5,406.4" fill="#78797c"/><polygon points="1331.5,406.4 1335.3,406.4 1325.3,397.0 1321.7,397.0" fill="#78797c"/><polygon points="1321.7,397.0 1325.3,397.0 1314.7,388.2 1311.4,388.2" fill="#77787b"/><polygon points="1311.4,388.2 1314.7,388.2 1303.5,380.1 1300.5,380.1" fill="#77787b"/><polygon points="1300.5,380.1 1303.5,380.1 1291.8,372.8 1289.1,372.8" fill="#77787b"/><polygon points="1289.1,372.8 1291.8,372.8 1279.7,366.3 1277.4,366.3" fill="#76777a"/><polygon points="1277.4,366.3 1279.7,366.3 1267.2,360.6 1265.2,360.6" fill="#76777a"/><polygon points="1265.2,360.6 1267.2,360.6 1254.4,355.7 1252.7,355.7" fill="#76777a"/><polygon points="1252.7,355.7 1254.4,355.7 1241.3,351.7 1239.9,351.7" fill="#76777a"/><polygon points="1239.9,351.7 1241.3,351.7 1227.9,348.6 1226.9,348.6" fill="#757679"/><polygon points="1226.9,348.6 1227.9,348.6 1214.4,346.3 1213.7,346.3" fill="#757679"/><polygon points="1213.7,346.3 1214.4,346.3 1200.7,345.0 1200.4,345.0" fill="#757679"/><polygon points="1200.4,345.0 1200.7,345.0 1187.0,344.5 1187.0,344.5" fill="#757679"/><polygon points="1187.0,767.5 1187.0,767.5 1200.8,767.0 1200.7,767.0" fill="#707174"/><polygon points="1200.7,767.0 1200.8,767.0 1214.6,765.7 1214.4,765.7" fill="#707174"/><polygon points="1214.4,765.7 1214.6,765.7 1228.3,763.4 1227.9,763.4" fill="#707174"/><polygon points="1227.9,763.4 1228.3,763.4 1241.7,760.3 1241.3,760.3" fill="#707174"/><polygon points="1241.3,760.3 1241.7,760.3 1255.0,756.3 1254.4,756.3" fill="#707174"/><polygon points="1254.4,756.3 1255.0,756.3 1267.9,751.4 1267.2,751.4" fill="#707174"/><polygon points="1267.2,751.4 1267.9,751.4 1280.5,745.7 1279.7,745.7" fill="#707174"/><polygon points="1279.7,745.7 1280.5,745.7 1292.8,739.2 1291.8,739.2" fill="#707174"/><polygon points="1291.8,739.2 1292.8,739.2 1304.5,731.9 1303.5,731.9" fill="#707174"/><polygon points="1303.5,731.9 1304.5,731.9 1315.8,723.8 1314.7,723.8" fill="#707174"/><polygon points="1314.7,723.8 1315.8,723.8 1326.5,715.0 1325.3,715.0" fill="#707174"/><polygon points="1325.3,715.0 1326.5,715.0 1336.6,705.6 1335.3,705.6" fill="#707174"/><polygon points="1335.3,705.6 1336.6,705.6 1346.0,695.5 1344.7,695.5" fill="#717275"/><polygon points="1344.7,695.5 1346.0,695.5 1354.8,684.8 1353.4,684.8" fill="#717275"/><polygon points="1353.4,684.8 1354.8,684.8 1362.9,673.5 1361.4,673.5" fill="#717275"/><polygon points="1361.4,673.5 1362.9,673.5 1370.2,661.8 1368.6,661.8" fill="#717275"/><polygon points="1368.6,661.8 1370.2,661.8 1376.7,649.5 1375.1,649.5" fill="#717275"/><polygon points="1375.1,649.5 1376.7,649.5 1382.4,636.9 1380.7,636.9" fill="#717275"/><polygon points="1380.7,636.9 1382.4,636.9 1387.3,624.0 1385.6,624.0" fill="#717275"/><polygon points="1385.6,624.0 1387.3,624.0 1391.3,610.7 1389.5,610.7" fill="#727376"/><polygon points="1389.5,610.7 1391.3,610.7 1394.4,597.3 1392.7,597.3" fill="#727376"/><polygon points="1392.7,597.3 1394.4,597.3 1396.7,583.6 1394.9,583.6" fill="#727376"/><polygon points="1394.9,583.6 1396.7,583.6 1398.0,569.8 1396.2,569.8" fill="#727376"/><polygon points="1396.2,569.8 1398.0,569.8 1398.5,556.0 1396.7,556.0" fill="#727376"/><polygon points="1396.7,556.0 1398.5,556.0 1398.0,542.2 1396.2,542.2" fill="#727376"/><polygon points="1396.2,542.2 1398.0,542.2 1396.7,528.4 1394.9,528.4" fill="#727376"/><polygon points="1394.9,528.4 1396.7,528.4 1394.4,514.7 1392.7,514.7" fill="#727376"/><polygon points="1392.7,514.7 1394.4,514.7 1391.3,501.3 1389.5,501.3" fill="#727376"/><polygon points="1389.5,501.3 1391.3,501.3 1387.3,488.0 1385.6,488.0" fill="#727376"/><polygon points="1385.6,488.0 1387.3,488.0 1382.4,475.1 1380.7,475.1" fill="#727376"/><polygon points="1380.7,475.1 1382.4,475.1 1376.7,462.5 1375.1,462.5" fill="#727376"/><polygon points="1375.1,462.5 1376.7,462.5 1370.2,450.2 1368.6,450.2" fill="#727376"/><polygon points="1368.6,450.2 1370.2,450.2 1362.9,438.5 1361.4,438.5" fill="#727376"/><polygon points="1361.4,438.5 1362.9,438.5 1354.8,427.2 1353.4,427.2" fill="#727376"/><polygon points="1353.4,427.2 1354.8,427.2 1346.0,416.5 1344.7,416.5" fill="#727376"/><polygon points="1344.7,416.5 1346.0,416.5 1336.6,406.4 1335.3,406.4" fill="#717275"/><polygon points="1335.3,406.4 1336.6,406.4 1326.5,397.0 1325.3,397.0" fill="#717275"/><polygon points="1325.3,397.0 1326.5,397.0 1315.8,388.2 1314.7,388.2" fill="#717275"/><polygon points="1314.7,388.2 1315.8,388.2 1304.5,380.1 1303.5,380.1" fill="#717275"/><polygon points="1303.5,380.1 1304.5,380.1 1292.8,372.8 1291.8,372.8" fill="#717275"/><polygon points="1291.8,372.8 1292.8,372.8 1280.5,366.3 1279.7,366.3" fill="#717275"/><polygon points="1279.7,366.3 1280.5,366.3 1267.9,360.6 1267.2,360.6" fill="#717275"/><polygon points="1267.2,360.6 1267.9,360.6 1255.0,355.7 1254.4,355.7" fill="#717275"/><polygon points="1254.4,355.7 1255.0,355.7 1241.7,351.7 1241.3,351.7" fill="#717275"/><polygon points="1241.3,351.7 1241.7,351.7 1228.3,348.6 1227.9,348.6" fill="#717275"/><polygon points="1227.9,348.6 1228.3,348.6 1214.6,346.3 1214.4,346.3" fill="#707174"/><polygon points="1214.4,346.3 1214.6,346.3 1200.8,345.0 1200.7,345.0" fill="#707174"/><polygon points="1200.7,345.0 1200.8,345.0 1187.0,344.5 1187.0,344.5" fill="#707174"/></g><circle cx="1187" cy="556" r="211.5" fill="url(#sphTint)"/><path d="M1019.2 684.7 C1070 672 1130 666 1187 666 C1240 666 1300 672 1354.6 685 C1370 689 1382 696 1390 707 C1396 714 1395 724 1380 736 L1325 790 L1300 815 L1070 815 L1045.4 789.5 L993 735.5 C978 725 976 716 981 708 C990 696 1005 688 1019.2 684.7Z" fill="url(#cone)"/><clipPath id="conec"><path d="M1019.2 684.7 C1070 672 1130 666 1187 666 C1240 666 1300 672 1354.6 685 C1370 689 1382 696 1390 707 C1396 714 1395 724 1380 736 L1325 790 L1300 815 L1070 815 L1045.4 789.5 L993 735.5 C978 725 976 716 981 708 C990 696 1005 688 1019.2 684.7Z"/></clipPath><g clip-path="url(#conec)"><polygon points="1394.0,715.0 1394.0,715.0 1386.1,724.1" fill="rgb(205,158,76)"/><polygon points="1394.0,715.0 1386.1,724.1 1386.1,724.1" fill="rgb(196,149,67)"/><polygon points="1394.0,715.0 1394.0,715.0 1386.1,724.1" fill="rgb(205,158,76)"/><polygon points="1394.0,715.0 1386.1,724.1 1386.1,724.1" fill="rgb(196,149,67)"/><polygon points="1394.0,715.0 1394.0,715.0 1386.1,724.1" fill="rgb(205,158,76)"/><polygon points="1394.0,715.0 1386.1,724.1 1386.1,724.1" fill="rgb(196,149,67)"/><polygon points="1394.0,715.0 1394.0,715.0 1386.1,724.1" fill="rgb(205,158,76)"/><polygon points="1394.0,715.0 1386.0,722.3 1386.1,724.1" fill="rgb(196,149,67)"/><polygon points="1394.0,715.0 1392.2,708.6 1386.0,722.3" fill="rgb(205,158,76)"/><polygon points="1392.2,708.6 1383.2,716.3 1386.0,722.3" fill="rgb(196,149,67)"/><polygon points="1392.2,708.6 1386.9,702.3 1383.2,716.3" fill="rgb(205,158,76)"/><polygon points="1386.9,702.3 1377.2,710.4 1383.2,716.3" fill="rgb(196,149,67)"/><polygon points="1386.9,702.3 1378.2,696.2 1377.2,710.4" fill="rgb(205,158,76)"/><polygon points="1378.2,696.2 1367.8,704.7 1377.2,710.4" fill="rgb(196,149,67)"/><polygon points="1378.2,696.2 1366.3,690.5 1367.8,704.7" fill="rgb(205,158,76)"/><polygon points="1366.3,690.5 1355.4,699.4 1367.8,704.7" fill="rgb(196,149,67)"/><polygon points="1366.3,690.5 1351.2,685.2 1355.4,699.4" fill="rgb(205,158,76)"/><polygon points="1351.2,685.2 1340.1,694.5 1355.4,699.4" fill="rgb(196,149,67)"/><polygon points="1351.2,685.2 1333.4,680.4 1340.1,694.5" fill="rgb(205,158,76)"/><polygon points="1333.4,680.4 1322.2,690.1 1340.1,694.5" fill="rgb(196,149,67)"/><polygon points="1333.4,680.4 1313.0,676.1 1322.2,690.1" fill="rgb(205,158,76)"/><polygon points="1313.0,676.1 1301.9,686.3 1322.2,690.1" fill="rgb(196,149,67)"/><polygon points="1313.0,676.1 1290.5,672.6 1301.9,686.3" fill="rgb(205,158,76)"/><polygon points="1290.5,672.6 1279.7,683.1 1301.9,686.3" fill="rgb(196,149,67)"/><polygon points="1290.5,672.6 1266.2,669.7 1279.7,683.1" fill="rgb(205,158,76)"/><polygon points="1266.2,669.7 1255.9,680.6 1279.7,683.1" fill="rgb(196,149,67)"/><polygon points="1266.2,669.7 1240.6,667.7 1255.9,680.6" fill="rgb(205,158,76)"/><polygon points="1240.6,667.7 1230.9,678.9 1255.9,680.6" fill="rgb(196,149,67)"/><polygon points="1240.6,667.7 1214.0,666.4 1230.9,678.9" fill="rgb(205,158,76)"/><polygon points="1214.0,666.4 1205.2,678.0 1230.9,678.9" fill="rgb(196,149,67)"/><polygon points="1214.0,666.4 1187.0,666.0 1205.2,678.0" fill="rgb(205,158,76)"/><polygon points="1187.0,666.0 1179.2,677.8 1205.2,678.0" fill="rgb(196,149,67)"/><polygon points="1187.0,666.0 1160.0,666.4 1179.2,677.8" fill="rgb(205,158,76)"/><polygon points="1160.0,666.4 1153.3,678.4 1179.2,677.8" fill="rgb(196,149,67)"/><polygon points="1160.0,666.4 1133.4,667.7 1153.3,678.4" fill="rgb(205,158,76)"/><polygon points="1133.4,667.7 1128.0,679.9 1153.3,678.4" fill="rgb(196,149,67)"/><polygon points="1133.4,667.7 1107.8,669.7 1128.0,679.9" fill="rgb(205,158,76)"/><polygon points="1107.8,669.7 1103.6,682.0 1128.0,679.9" fill="rgb(196,149,67)"/><polygon points="1107.8,669.7 1083.5,672.6 1103.6,682.0" fill="rgb(205,158,76)"/><polygon points="1083.5,672.6 1080.8,684.9 1103.6,682.0" fill="rgb(196,149,67)"/><polygon points="1083.5,672.6 1061.0,676.1 1080.8,684.9" fill="rgb(205,158,76)"/><polygon points="1061.0,676.1 1059.7,688.5 1080.8,684.9" fill="rgb(196,149,67)"/><polygon points="1061.0,676.1 1040.6,680.4 1059.7,688.5" fill="rgb(205,158,76)"/><polygon points="1040.6,680.4 1040.8,692.7 1059.7,688.5" fill="rgb(196,149,67)"/><polygon points="1040.6,680.4 1022.8,685.2 1040.8,692.7" fill="rgb(205,158,76)"/><polygon points="1022.8,685.2 1024.4,697.4 1040.8,692.7" fill="rgb(196,149,67)"/><polygon points="1022.8,685.2 1007.7,690.5 1024.4,697.4" fill="rgb(205,158,76)"/><polygon points="1007.7,690.5 1010.8,702.5 1024.4,697.4" fill="rgb(196,149,67)"/><polygon points="1007.7,690.5 995.8,696.2 1010.8,702.5" fill="rgb(205,158,76)"/><polygon points="995.8,696.2 1000.2,708.1 1010.8,702.5" fill="rgb(196,149,67)"/><polygon points="995.8,696.2 987.1,702.3 1000.2,708.1" fill="rgb(205,158,76)"/><polygon points="987.1,702.3 992.8,713.9 1000.2,708.1" fill="rgb(196,149,67)"/><polygon points="987.1,702.3 981.8,708.6 992.8,713.9" fill="rgb(205,158,76)"/><polygon points="981.8,708.6 988.7,719.9 992.8,713.9" fill="rgb(196,149,67)"/><polygon points="981.8,708.6 980.0,715.0 988.7,719.9" fill="rgb(205,158,76)"/><polygon points="980.0,715.0 987.9,724.1 988.7,719.9" fill="rgb(196,149,67)"/><polygon points="980.0,715.0 980.0,715.0 987.9,724.1" fill="rgb(205,158,76)"/><polygon points="980.0,715.0 987.9,724.1 987.9,724.1" fill="rgb(196,149,67)"/><polygon points="980.0,715.0 980.0,715.0 987.9,724.1" fill="rgb(205,158,76)"/><polygon points="980.0,715.0 987.9,724.1 987.9,724.1" fill="rgb(196,149,67)"/><polygon points="1386.1,724.1 1386.1,724.1 1378.2,733.2" fill="rgb(205,161,76)"/><polygon points="1386.1,724.1 1378.2,733.2 1378.2,733.2" fill="rgb(196,152,67)"/><polygon points="1386.1,724.1 1386.1,724.1 1378.2,733.2" fill="rgb(205,161,76)"/><polygon points="1386.1,724.1 1378.2,733.2 1378.2,733.2" fill="rgb(196,152,67)"/><polygon points="1386.1,724.1 1386.1,724.1 1378.2,733.2" fill="rgb(205,161,76)"/><polygon points="1386.1,724.1 1378.2,733.2 1378.2,733.2" fill="rgb(196,152,67)"/><polygon points="1386.1,724.1 1386.0,722.3 1378.2,733.2" fill="rgb(205,161,76)"/><polygon points="1386.0,722.3 1377.6,729.8 1378.2,733.2" fill="rgb(196,152,67)"/><polygon points="1386.0,722.3 1383.2,716.3 1377.6,729.8" fill="rgb(205,161,76)"/><polygon points="1383.2,716.3 1374.0,724.1 1377.6,729.8" fill="rgb(196,152,67)"/><polygon points="1383.2,716.3 1377.2,710.4 1374.0,724.1" fill="rgb(205,161,76)"/><polygon points="1377.2,710.4 1367.3,718.6 1374.0,724.1" fill="rgb(196,152,67)"/><polygon points="1377.2,710.4 1367.8,704.7 1367.3,718.6" fill="rgb(205,161,76)"/><polygon points="1367.8,704.7 1357.4,713.4 1367.3,718.6" fill="rgb(196,152,67)"/><polygon points="1367.8,704.7 1355.4,699.4 1357.4,713.4" fill="rgb(205,161,76)"/><polygon points="1355.4,699.4 1344.6,708.5 1357.4,713.4" fill="rgb(196,152,67)"/><polygon points="1355.4,699.4 1340.1,694.5 1344.6,708.5" fill="rgb(205,161,76)"/><polygon points="1340.1,694.5 1329.1,704.0 1344.6,708.5" fill="rgb(196,152,67)"/><polygon points="1340.1,694.5 1322.2,690.1 1329.1,704.0" fill="rgb(205,161,76)"/><polygon points="1322.2,690.1 1311.2,700.0 1329.1,704.0" fill="rgb(196,152,67)"/><polygon points="1322.2,690.1 1301.9,686.3 1311.2,700.0" fill="rgb(205,161,76)"/><polygon points="1301.9,686.3 1291.1,696.6 1311.2,700.0" fill="rgb(196,152,67)"/><polygon points="1301.9,686.3 1279.7,683.1 1291.1,696.6" fill="rgb(205,161,76)"/><polygon points="1279.7,683.1 1269.3,693.8 1291.1,696.6" fill="rgb(196,152,67)"/><polygon points="1279.7,683.1 1255.9,680.6 1269.3,693.8" fill="rgb(205,161,76)"/><polygon points="1255.9,680.6 1246.1,691.7 1269.3,693.8" fill="rgb(196,152,67)"/><polygon points="1255.9,680.6 1230.9,678.9 1246.1,691.7" fill="rgb(205,161,76)"/><polygon points="1230.9,678.9 1221.8,690.3 1246.1,691.7" fill="rgb(196,152,67)"/><polygon points="1230.9,678.9 1205.2,678.0 1221.8,690.3" fill="rgb(205,161,76)"/><polygon points="1205.2,678.0 1197.0,689.6 1221.8,690.3" fill="rgb(196,152,67)"/><polygon points="1205.2,678.0 1179.2,677.8 1197.0,689.6" fill="rgb(205,161,76)"/><polygon points="1179.2,677.8 1172.0,689.7 1197.0,689.6" fill="rgb(196,152,67)"/><polygon points="1179.2,677.8 1153.3,678.4 1172.0,689.7" fill="rgb(205,161,76)"/><polygon points="1153.3,678.4 1147.2,690.5 1172.0,689.7" fill="rgb(196,152,67)"/><polygon points="1153.3,678.4 1128.0,679.9 1147.2,690.5" fill="rgb(205,161,76)"/><polygon points="1128.0,679.9 1123.2,692.1 1147.2,690.5" fill="rgb(196,152,67)"/><polygon points="1128.0,679.9 1103.6,682.0 1123.2,692.1" fill="rgb(205,161,76)"/><polygon points="1103.6,682.0 1100.2,694.3 1123.2,692.1" fill="rgb(196,152,67)"/><polygon points="1103.6,682.0 1080.8,684.9 1100.2,694.3" fill="rgb(205,161,76)"/><polygon points="1080.8,684.9 1078.7,697.2 1100.2,694.3" fill="rgb(196,152,67)"/><polygon points="1080.8,684.9 1059.7,688.5 1078.7,697.2" fill="rgb(205,161,76)"/><polygon points="1059.7,688.5 1059.0,700.8 1078.7,697.2" fill="rgb(196,152,67)"/><polygon points="1059.7,688.5 1040.8,692.7 1059.0,700.8" fill="rgb(205,161,76)"/><polygon points="1040.8,692.7 1041.6,704.9 1059.0,700.8" fill="rgb(196,152,67)"/><polygon points="1040.8,692.7 1024.4,697.4 1041.6,704.9" fill="rgb(205,161,76)"/><polygon points="1024.4,697.4 1026.6,709.4 1041.6,704.9" fill="rgb(196,152,67)"/><polygon points="1024.4,697.4 1010.8,702.5 1026.6,709.4" fill="rgb(205,161,76)"/><polygon points="1010.8,702.5 1014.4,714.4 1026.6,709.4" fill="rgb(196,152,67)"/><polygon points="1010.8,702.5 1000.2,708.1 1014.4,714.4" fill="rgb(205,161,76)"/><polygon points="1000.2,708.1 1005.1,719.7 1014.4,714.4" fill="rgb(196,152,67)"/><polygon points="1000.2,708.1 992.8,713.9 1005.1,719.7" fill="rgb(205,161,76)"/><polygon points="992.8,713.9 999.0,725.3 1005.1,719.7" fill="rgb(196,152,67)"/><polygon points="992.8,713.9 988.7,719.9 999.0,725.3" fill="rgb(205,161,76)"/><polygon points="988.7,719.9 996.0,730.9 999.0,725.3" fill="rgb(196,152,67)"/><polygon points="988.7,719.9 987.9,724.1 996.0,730.9" fill="rgb(205,161,76)"/><polygon points="987.9,724.1 995.8,733.2 996.0,730.9" fill="rgb(196,152,67)"/><polygon points="987.9,724.1 987.9,724.1 995.8,733.2" fill="rgb(205,161,76)"/><polygon points="987.9,724.1 995.8,733.2 995.8,733.2" fill="rgb(196,152,67)"/><polygon points="987.9,724.1 987.9,724.1 995.8,733.2" fill="rgb(205,161,76)"/><polygon points="987.9,724.1 995.8,733.2 995.8,733.2" fill="rgb(196,152,67)"/><polygon points="1378.2,733.2 1378.2,733.2 1370.3,742.3" fill="rgb(205,164,76)"/><polygon points="1378.2,733.2 1370.3,742.3 1370.3,742.3" fill="rgb(196,155,67)"/><polygon points="1378.2,733.2 1378.2,733.2 1370.3,742.3" fill="rgb(205,164,76)"/><polygon points="1378.2,733.2 1370.3,742.3 1370.3,742.3" fill="rgb(196,155,67)"/><polygon points="1378.2,733.2 1378.2,733.2 1370.3,742.3" fill="rgb(205,164,76)"/><polygon points="1378.2,733.2 1370.3,742.3 1370.3,742.3" fill="rgb(196,155,67)"/><polygon points="1378.2,733.2 1377.6,729.8 1370.3,742.3" fill="rgb(205,164,76)"/><polygon points="1377.6,729.8 1369.1,737.5 1370.3,742.3" fill="rgb(196,155,67)"/><polygon points="1377.6,729.8 1374.0,724.1 1369.1,737.5" fill="rgb(205,164,76)"/><polygon points="1374.0,724.1 1364.7,732.2 1369.1,737.5" fill="rgb(196,155,67)"/><polygon points="1374.0,724.1 1367.3,718.6 1364.7,732.2" fill="rgb(205,164,76)"/><polygon points="1367.3,718.6 1357.3,727.1 1364.7,732.2" fill="rgb(196,155,67)"/><polygon points="1367.3,718.6 1357.4,713.4 1357.3,727.1" fill="rgb(205,164,76)"/><polygon points="1357.4,713.4 1347.0,722.3 1357.3,727.1" fill="rgb(196,155,67)"/><polygon points="1357.4,713.4 1344.6,708.5 1347.0,722.3" fill="rgb(205,164,76)"/><polygon points="1344.6,708.5 1333.9,717.8 1347.0,722.3" fill="rgb(196,155,67)"/><polygon points="1344.6,708.5 1329.1,704.0 1333.9,717.8" fill="rgb(205,164,76)"/><polygon points="1329.1,704.0 1318.3,713.7 1333.9,717.8" fill="rgb(196,155,67)"/><polygon points="1329.1,704.0 1311.2,700.0 1318.3,713.7" fill="rgb(205,164,76)"/><polygon points="1311.2,700.0 1300.5,710.1 1318.3,713.7" fill="rgb(196,155,67)"/><polygon points="1311.2,700.0 1291.1,696.6 1300.5,710.1" fill="rgb(205,164,76)"/><polygon points="1291.1,696.6 1280.7,707.1 1300.5,710.1" fill="rgb(196,155,67)"/><polygon points="1291.1,696.6 1269.3,693.8 1280.7,707.1" fill="rgb(205,164,76)"/><polygon points="1269.3,693.8 1259.4,704.7 1280.7,707.1" fill="rgb(196,155,67)"/><polygon points="1269.3,693.8 1246.1,691.7 1259.4,704.7" fill="rgb(205,164,76)"/><polygon points="1246.1,691.7 1236.8,702.9 1259.4,704.7" fill="rgb(196,155,67)"/><polygon points="1246.1,691.7 1221.8,690.3 1236.8,702.9" fill="rgb(205,164,76)"/><polygon points="1221.8,690.3 1213.3,701.8 1236.8,702.9" fill="rgb(196,155,67)"/><polygon points="1221.8,690.3 1197.0,689.6 1213.3,701.8" fill="rgb(205,164,76)"/><polygon points="1197.0,689.6 1189.4,701.3 1213.3,701.8" fill="rgb(196,155,67)"/><polygon points="1197.0,689.6 1172.0,689.7 1189.4,701.3" fill="rgb(205,164,76)"/><polygon points="1172.0,689.7 1165.5,701.6 1189.4,701.3" fill="rgb(196,155,67)"/><polygon points="1172.0,689.7 1147.2,690.5 1165.5,701.6" fill="rgb(205,164,76)"/><polygon points="1147.2,690.5 1141.9,702.6 1165.5,701.6" fill="rgb(196,155,67)"/><polygon points="1147.2,690.5 1123.2,692.1 1141.9,702.6" fill="rgb(205,164,76)"/><polygon points="1123.2,692.1 1119.1,704.3 1141.9,702.6" fill="rgb(196,155,67)"/><polygon points="1123.2,692.1 1100.2,694.3 1119.1,704.3" fill="rgb(205,164,76)"/><polygon points="1100.2,694.3 1097.4,706.6 1119.1,704.3" fill="rgb(196,155,67)"/><polygon points="1100.2,694.3 1078.7,697.2 1097.4,706.6" fill="rgb(205,164,76)"/><polygon points="1078.7,697.2 1077.3,709.5 1097.4,706.6" fill="rgb(196,155,67)"/><polygon points="1078.7,697.2 1059.0,700.8 1077.3,709.5" fill="rgb(205,164,76)"/><polygon points="1059.0,700.8 1059.1,713.0 1077.3,709.5" fill="rgb(196,155,67)"/><polygon points="1059.0,700.8 1041.6,704.9 1059.1,713.0" fill="rgb(205,164,76)"/><polygon points="1041.6,704.9 1043.0,717.0 1059.1,713.0" fill="rgb(196,155,67)"/><polygon points="1041.6,704.9 1026.6,709.4 1043.0,717.0" fill="rgb(205,164,76)"/><polygon points="1026.6,709.4 1029.4,721.4 1043.0,717.0" fill="rgb(196,155,67)"/><polygon points="1026.6,709.4 1014.4,714.4 1029.4,721.4" fill="rgb(205,164,76)"/><polygon points="1014.4,714.4 1018.6,726.1 1029.4,721.4" fill="rgb(196,155,67)"/><polygon points="1014.4,714.4 1005.1,719.7 1018.6,726.1" fill="rgb(205,164,76)"/><polygon points="1005.1,719.7 1010.5,731.2 1018.6,726.1" fill="rgb(196,155,67)"/><polygon points="1005.1,719.7 999.0,725.3 1010.5,731.2" fill="rgb(205,164,76)"/><polygon points="999.0,725.3 1005.6,736.5 1010.5,731.2" fill="rgb(196,155,67)"/><polygon points="999.0,725.3 996.0,730.9 1005.6,736.5" fill="rgb(205,164,76)"/><polygon points="996.0,730.9 1003.7,741.8 1005.6,736.5" fill="rgb(196,155,67)"/><polygon points="996.0,730.9 995.8,733.2 1003.7,741.8" fill="rgb(205,164,76)"/><polygon points="995.8,733.2 1003.7,742.3 1003.7,741.8" fill="rgb(196,155,67)"/><polygon points="995.8,733.2 995.8,733.2 1003.7,742.3" fill="rgb(205,164,76)"/><polygon points="995.8,733.2 1003.7,742.3 1003.7,742.3" fill="rgb(196,155,67)"/><polygon points="995.8,733.2 995.8,733.2 1003.7,742.3" fill="rgb(205,164,76)"/><polygon points="995.8,733.2 1003.7,742.3 1003.7,742.3" fill="rgb(196,155,67)"/><polygon points="1370.3,742.3 1370.3,742.3 1362.4,751.4" fill="rgb(205,167,76)"/><polygon points="1370.3,742.3 1362.4,751.4 1362.4,751.4" fill="rgb(196,158,67)"/><polygon points="1370.3,742.3 1370.3,742.3 1362.4,751.4" fill="rgb(205,167,76)"/><polygon points="1370.3,742.3 1362.4,751.4 1362.4,751.4" fill="rgb(196,158,67)"/><polygon points="1370.3,742.3 1370.3,742.3 1362.4,751.4" fill="rgb(205,167,76)"/><polygon points="1370.3,742.3 1362.4,750.4 1362.4,751.4" fill="rgb(196,158,67)"/><polygon points="1370.3,742.3 1369.1,737.5 1362.4,750.4" fill="rgb(205,167,76)"/><polygon points="1369.1,737.5 1360.3,745.4 1362.4,750.4" fill="rgb(196,158,67)"/><polygon points="1369.1,737.5 1364.7,732.2 1360.3,745.4" fill="rgb(205,167,76)"/><polygon points="1364.7,732.2 1355.2,740.6 1360.3,745.4" fill="rgb(196,158,67)"/><polygon points="1364.7,732.2 1357.3,727.1 1355.2,740.6" fill="rgb(205,167,76)"/><polygon points="1357.3,727.1 1347.3,735.9 1355.2,740.6" fill="rgb(196,158,67)"/><polygon points="1357.3,727.1 1347.0,722.3 1347.3,735.9" fill="rgb(205,167,76)"/><polygon points="1347.0,722.3 1336.6,731.4 1347.3,735.9" fill="rgb(196,158,67)"/><polygon points="1347.0,722.3 1333.9,717.8 1336.6,731.4" fill="rgb(205,167,76)"/><polygon points="1333.9,717.8 1323.3,727.3 1336.6,731.4" fill="rgb(196,158,67)"/><polygon points="1333.9,717.8 1318.3,713.7 1323.3,727.3" fill="rgb(205,167,76)"/><polygon points="1318.3,713.7 1307.8,723.6 1323.3,727.3" fill="rgb(196,158,67)"/><polygon points="1318.3,713.7 1300.5,710.1 1307.8,723.6" fill="rgb(205,167,76)"/><polygon points="1300.5,710.1 1290.1,720.4 1307.8,723.6" fill="rgb(196,158,67)"/><polygon points="1300.5,710.1 1280.7,707.1 1290.1,720.4" fill="rgb(205,167,76)"/><polygon points="1280.7,707.1 1270.7,717.8 1290.1,720.4" fill="rgb(196,158,67)"/><polygon points="1280.7,707.1 1259.4,704.7 1270.7,717.8" fill="rgb(205,167,76)"/><polygon points="1259.4,704.7 1249.9,715.7 1270.7,717.8" fill="rgb(196,158,67)"/><polygon points="1259.4,704.7 1236.8,702.9 1249.9,715.7" fill="rgb(205,167,76)"/><polygon points="1236.8,702.9 1228.0,714.2 1249.9,715.7" fill="rgb(196,158,67)"/><polygon points="1236.8,702.9 1213.3,701.8 1228.0,714.2" fill="rgb(205,167,76)"/><polygon points="1213.3,701.8 1205.3,713.3 1228.0,714.2" fill="rgb(196,158,67)"/><polygon points="1213.3,701.8 1189.4,701.3 1205.3,713.3" fill="rgb(205,167,76)"/><polygon points="1189.4,701.3 1182.4,713.1 1205.3,713.3" fill="rgb(196,158,67)"/><polygon points="1189.4,701.3 1165.5,701.6 1182.4,713.1" fill="rgb(205,167,76)"/><polygon points="1165.5,701.6 1159.6,713.6 1182.4,713.1" fill="rgb(196,158,67)"/><polygon points="1165.5,701.6 1141.9,702.6 1159.6,713.6" fill="rgb(205,167,76)"/><polygon points="1141.9,702.6 1137.2,714.7 1159.6,713.6" fill="rgb(196,158,67)"/><polygon points="1141.9,702.6 1119.1,704.3 1137.2,714.7" fill="rgb(205,167,76)"/><polygon points="1119.1,704.3 1115.6,716.4 1137.2,714.7" fill="rgb(196,158,67)"/><polygon points="1119.1,704.3 1097.4,706.6 1115.6,716.4" fill="rgb(205,167,76)"/><polygon points="1097.4,706.6 1095.3,718.8 1115.6,716.4" fill="rgb(196,158,67)"/><polygon points="1097.4,706.6 1077.3,709.5 1095.3,718.8" fill="rgb(205,167,76)"/><polygon points="1077.3,709.5 1076.6,721.7 1095.3,718.8" fill="rgb(196,158,67)"/><polygon points="1077.3,709.5 1059.1,713.0 1076.6,721.7" fill="rgb(205,167,76)"/><polygon points="1059.1,713.0 1059.7,725.1 1076.6,721.7" fill="rgb(196,158,67)"/><polygon points="1059.1,713.0 1043.0,717.0 1059.7,725.1" fill="rgb(205,167,76)"/><polygon points="1043.0,717.0 1045.1,728.9 1059.7,725.1" fill="rgb(196,158,67)"/><polygon points="1043.0,717.0 1029.4,721.4 1045.1,728.9" fill="rgb(205,167,76)"/><polygon points="1029.4,721.4 1032.8,733.2 1045.1,728.9" fill="rgb(196,158,67)"/><polygon points="1029.4,721.4 1018.6,726.1 1032.8,733.2" fill="rgb(205,167,76)"/><polygon points="1018.6,726.1 1023.2,737.7 1032.8,733.2" fill="rgb(196,158,67)"/><polygon points="1018.6,726.1 1010.5,731.2 1023.2,737.7" fill="rgb(205,167,76)"/><polygon points="1010.5,731.2 1016.4,742.5 1023.2,737.7" fill="rgb(196,158,67)"/><polygon points="1010.5,731.2 1005.6,736.5 1016.4,742.5" fill="rgb(205,167,76)"/><polygon points="1005.6,736.5 1012.5,747.4 1016.4,742.5" fill="rgb(196,158,67)"/><polygon points="1005.6,736.5 1003.7,741.8 1012.5,747.4" fill="rgb(205,167,76)"/><polygon points="1003.7,741.8 1011.6,751.4 1012.5,747.4" fill="rgb(196,158,67)"/><polygon points="1003.7,741.8 1003.7,742.3 1011.6,751.4" fill="rgb(205,167,76)"/><polygon points="1003.7,742.3 1011.6,751.4 1011.6,751.4" fill="rgb(196,158,67)"/><polygon points="1003.7,742.3 1003.7,742.3 1011.6,751.4" fill="rgb(205,167,76)"/><polygon points="1003.7,742.3 1011.6,751.4 1011.6,751.4" fill="rgb(196,158,67)"/><polygon points="1003.7,742.3 1003.7,742.3 1011.6,751.4" fill="rgb(205,167,76)"/><polygon points="1003.7,742.3 1011.6,751.4 1011.6,751.4" fill="rgb(196,158,67)"/><polygon points="1362.4,751.4 1362.4,751.4 1354.6,760.6" fill="rgb(205,171,76)"/><polygon points="1362.4,751.4 1354.6,760.6 1354.6,760.6" fill="rgb(196,162,67)"/><polygon points="1362.4,751.4 1362.4,751.4 1354.6,760.6" fill="rgb(205,171,76)"/><polygon points="1362.4,751.4 1354.6,760.6 1354.6,760.6" fill="rgb(196,162,67)"/><polygon points="1362.4,751.4 1362.4,750.4 1354.6,760.6" fill="rgb(205,171,76)"/><polygon points="1362.4,750.4 1354.2,758.2 1354.6,760.6" fill="rgb(196,162,67)"/><polygon points="1362.4,750.4 1360.3,745.4 1354.2,758.2" fill="rgb(205,171,76)"/><polygon points="1360.3,745.4 1351.3,753.6 1354.2,758.2" fill="rgb(196,162,67)"/><polygon points="1360.3,745.4 1355.2,740.6 1351.3,753.6" fill="rgb(205,171,76)"/><polygon points="1355.2,740.6 1345.7,749.1 1351.3,753.6" fill="rgb(196,162,67)"/><polygon points="1355.2,740.6 1347.3,735.9 1345.7,749.1" fill="rgb(205,171,76)"/><polygon points="1347.3,735.9 1337.3,744.8 1345.7,749.1" fill="rgb(196,162,67)"/><polygon points="1347.3,735.9 1336.6,731.4 1337.3,744.8" fill="rgb(205,171,76)"/><polygon points="1336.6,731.4 1326.3,740.7 1337.3,744.8" fill="rgb(196,162,67)"/><polygon points="1336.6,731.4 1323.3,727.3 1326.3,740.7" fill="rgb(205,171,76)"/><polygon points="1323.3,727.3 1313.0,737.0 1326.3,740.7" fill="rgb(196,162,67)"/><polygon points="1323.3,727.3 1307.8,723.6 1313.0,737.0" fill="rgb(205,171,76)"/><polygon points="1307.8,723.6 1297.5,733.7 1313.0,737.0" fill="rgb(196,162,67)"/><polygon points="1307.8,723.6 1290.1,720.4 1297.5,733.7" fill="rgb(205,171,76)"/><polygon points="1290.1,720.4 1280.1,730.9 1297.5,733.7" fill="rgb(196,162,67)"/><polygon points="1290.1,720.4 1270.7,717.8 1280.1,730.9" fill="rgb(205,171,76)"/><polygon points="1270.7,717.8 1261.1,728.6 1280.1,730.9" fill="rgb(196,162,67)"/><polygon points="1270.7,717.8 1249.9,715.7 1261.1,728.6" fill="rgb(205,171,76)"/><polygon points="1249.9,715.7 1240.9,726.8 1261.1,728.6" fill="rgb(196,162,67)"/><polygon points="1249.9,715.7 1228.0,714.2 1240.9,726.8" fill="rgb(205,171,76)"/><polygon points="1228.0,714.2 1219.7,725.6 1240.9,726.8" fill="rgb(196,162,67)"/><polygon points="1228.0,714.2 1205.3,713.3 1219.7,725.6" fill="rgb(205,171,76)"/><polygon points="1205.3,713.3 1198.0,725.0 1219.7,725.6" fill="rgb(196,162,67)"/><polygon points="1205.3,713.3 1182.4,713.1 1198.0,725.0" fill="rgb(205,171,76)"/><polygon points="1182.4,713.1 1176.0,725.0 1198.0,725.0" fill="rgb(196,162,67)"/><polygon points="1182.4,713.1 1159.6,713.6 1176.0,725.0" fill="rgb(205,171,76)"/><polygon points="1159.6,713.6 1154.3,725.6 1176.0,725.0" fill="rgb(196,162,67)"/><polygon points="1159.6,713.6 1137.2,714.7 1154.3,725.6" fill="rgb(205,171,76)"/><polygon points="1137.2,714.7 1133.1,726.8 1154.3,725.6" fill="rgb(196,162,67)"/><polygon points="1137.2,714.7 1115.6,716.4 1133.1,726.8" fill="rgb(205,171,76)"/><polygon points="1115.6,716.4 1112.9,728.6 1133.1,726.8" fill="rgb(196,162,67)"/><polygon points="1115.6,716.4 1095.3,718.8 1112.9,728.6" fill="rgb(205,171,76)"/><polygon points="1095.3,718.8 1093.9,730.9 1112.9,728.6" fill="rgb(196,162,67)"/><polygon points="1095.3,718.8 1076.6,721.7 1093.9,730.9" fill="rgb(205,171,76)"/><polygon points="1076.6,721.7 1076.5,733.7 1093.9,730.9" fill="rgb(196,162,67)"/><polygon points="1076.6,721.7 1059.7,725.1 1076.5,733.7" fill="rgb(205,171,76)"/><polygon points="1059.7,725.1 1061.0,737.0 1076.5,733.7" fill="rgb(196,162,67)"/><polygon points="1059.7,725.1 1045.1,728.9 1061.0,737.0" fill="rgb(205,171,76)"/><polygon points="1045.1,728.9 1047.7,740.7 1061.0,737.0" fill="rgb(196,162,67)"/><polygon points="1045.1,728.9 1032.8,733.2 1047.7,740.7" fill="rgb(205,171,76)"/><polygon points="1032.8,733.2 1036.7,744.8 1047.7,740.7" fill="rgb(196,162,67)"/><polygon points="1032.8,733.2 1023.2,737.7 1036.7,744.8" fill="rgb(205,171,76)"/><polygon points="1023.2,737.7 1028.3,749.1 1036.7,744.8" fill="rgb(196,162,67)"/><polygon points="1023.2,737.7 1016.4,742.5 1028.3,749.1" fill="rgb(205,171,76)"/><polygon points="1016.4,742.5 1022.7,753.6 1028.3,749.1" fill="rgb(196,162,67)"/><polygon points="1016.4,742.5 1012.5,747.4 1022.7,753.6" fill="rgb(205,171,76)"/><polygon points="1012.5,747.4 1019.8,758.2 1022.7,753.6" fill="rgb(196,162,67)"/><polygon points="1012.5,747.4 1011.6,751.4 1019.8,758.2" fill="rgb(205,171,76)"/><polygon points="1011.6,751.4 1019.4,760.6 1019.8,758.2" fill="rgb(196,162,67)"/><polygon points="1011.6,751.4 1011.6,751.4 1019.4,760.6" fill="rgb(205,171,76)"/><polygon points="1011.6,751.4 1019.4,760.6 1019.4,760.6" fill="rgb(196,162,67)"/><polygon points="1011.6,751.4 1011.6,751.4 1019.4,760.6" fill="rgb(205,171,76)"/><polygon points="1011.6,751.4 1019.4,760.6 1019.4,760.6" fill="rgb(196,162,67)"/><polygon points="1011.6,751.4 1011.6,751.4 1019.4,760.6" fill="rgb(205,171,76)"/><polygon points="1011.6,751.4 1019.4,760.6 1019.4,760.6" fill="rgb(196,162,67)"/><polygon points="1354.6,760.6 1354.6,760.6 1346.7,769.7" fill="rgb(205,174,75)"/><polygon points="1354.6,760.6 1346.7,769.7 1346.7,769.7" fill="rgb(196,165,66)"/><polygon points="1354.6,760.6 1354.6,760.6 1346.7,769.7" fill="rgb(205,174,75)"/><polygon points="1354.6,760.6 1346.7,769.7 1346.7,769.7" fill="rgb(196,165,66)"/><polygon points="1354.6,760.6 1354.2,758.2 1346.7,769.7" fill="rgb(205,174,75)"/><polygon points="1354.2,758.2 1345.8,766.2 1346.7,769.7" fill="rgb(196,165,66)"/><polygon points="1354.2,758.2 1351.3,753.6 1345.8,766.2" fill="rgb(205,174,75)"/><polygon points="1351.3,753.6 1342.3,762.0 1345.8,766.2" fill="rgb(196,165,66)"/><polygon points="1351.3,753.6 1345.7,749.1 1342.3,762.0" fill="rgb(205,174,75)"/><polygon points="1345.7,749.1 1336.1,757.8 1342.3,762.0" fill="rgb(196,165,66)"/><polygon points="1345.7,749.1 1337.3,744.8 1336.1,757.8" fill="rgb(205,174,75)"/><polygon points="1337.3,744.8 1327.3,753.9 1336.1,757.8" fill="rgb(196,165,66)"/><polygon points="1337.3,744.8 1326.3,740.7 1327.3,753.9" fill="rgb(205,174,75)"/><polygon points="1326.3,740.7 1316.2,750.3 1327.3,753.9" fill="rgb(196,165,66)"/><polygon points="1326.3,740.7 1313.0,737.0 1316.2,750.3" fill="rgb(205,174,75)"/><polygon points="1313.0,737.0 1302.8,747.0 1316.2,750.3" fill="rgb(196,165,66)"/><polygon points="1313.0,737.0 1297.5,733.7 1302.8,747.0" fill="rgb(205,174,75)"/><polygon points="1297.5,733.7 1287.5,744.0 1302.8,747.0" fill="rgb(196,165,66)"/><polygon points="1297.5,733.7 1280.1,730.9 1287.5,744.0" fill="rgb(205,174,75)"/><polygon points="1280.1,730.9 1270.4,741.5 1287.5,744.0" fill="rgb(196,165,66)"/><polygon points="1280.1,730.9 1261.1,728.6 1270.4,741.5" fill="rgb(205,174,75)"/><polygon points="1261.1,728.6 1251.9,739.5 1270.4,741.5" fill="rgb(196,165,66)"/><polygon points="1261.1,728.6 1240.9,726.8 1251.9,739.5" fill="rgb(205,174,75)"/><polygon points="1240.9,726.8 1232.3,738.0 1251.9,739.5" fill="rgb(196,165,66)"/><polygon points="1240.9,726.8 1219.7,725.6 1232.3,738.0" fill="rgb(205,174,75)"/><polygon points="1219.7,725.6 1212.0,737.1 1232.3,738.0" fill="rgb(196,165,66)"/><polygon points="1219.7,725.6 1198.0,725.0 1212.0,737.1" fill="rgb(205,174,75)"/><polygon points="1198.0,725.0 1191.2,736.7 1212.0,737.1" fill="rgb(196,165,66)"/><polygon points="1198.0,725.0 1176.0,725.0 1191.2,736.7" fill="rgb(205,174,75)"/><polygon points="1176.0,725.0 1170.3,736.8 1191.2,736.7" fill="rgb(196,165,66)"/><polygon points="1176.0,725.0 1154.3,725.6 1170.3,736.8" fill="rgb(205,174,75)"/><polygon points="1154.3,725.6 1149.7,737.6 1170.3,736.8" fill="rgb(196,165,66)"/><polygon points="1154.3,725.6 1133.1,726.8 1149.7,737.6" fill="rgb(205,174,75)"/><polygon points="1133.1,726.8 1129.8,738.9 1149.7,737.6" fill="rgb(196,165,66)"/><polygon points="1133.1,726.8 1112.9,728.6 1129.8,738.9" fill="rgb(205,174,75)"/><polygon points="1112.9,728.6 1110.8,740.7 1129.8,738.9" fill="rgb(196,165,66)"/><polygon points="1112.9,728.6 1093.9,730.9 1110.8,740.7" fill="rgb(205,174,75)"/><polygon points="1093.9,730.9 1093.2,743.0 1110.8,740.7" fill="rgb(196,165,66)"/><polygon points="1093.9,730.9 1076.5,733.7 1093.2,743.0" fill="rgb(205,174,75)"/><polygon points="1076.5,733.7 1077.1,745.7 1093.2,743.0" fill="rgb(196,165,66)"/><polygon points="1076.5,733.7 1061.0,737.0 1077.1,745.7" fill="rgb(205,174,75)"/><polygon points="1061.0,737.0 1062.9,748.9 1077.1,745.7" fill="rgb(196,165,66)"/><polygon points="1061.0,737.0 1047.7,740.7 1062.9,748.9" fill="rgb(205,174,75)"/><polygon points="1047.7,740.7 1050.9,752.4 1062.9,748.9" fill="rgb(196,165,66)"/><polygon points="1047.7,740.7 1036.7,744.8 1050.9,752.4" fill="rgb(205,174,75)"/><polygon points="1036.7,744.8 1041.1,756.2 1050.9,752.4" fill="rgb(196,165,66)"/><polygon points="1036.7,744.8 1028.3,749.1 1041.1,756.2" fill="rgb(205,174,75)"/><polygon points="1028.3,749.1 1033.9,760.3 1041.1,756.2" fill="rgb(196,165,66)"/><polygon points="1028.3,749.1 1022.7,753.6 1033.9,760.3" fill="rgb(205,174,75)"/><polygon points="1022.7,753.6 1029.3,764.5 1033.9,760.3" fill="rgb(196,165,66)"/><polygon points="1022.7,753.6 1019.8,758.2 1029.3,764.5" fill="rgb(205,174,75)"/><polygon points="1019.8,758.2 1027.4,768.8 1029.3,764.5" fill="rgb(196,165,66)"/><polygon points="1019.8,758.2 1019.4,760.6 1027.4,768.8" fill="rgb(205,174,75)"/><polygon points="1019.4,760.6 1027.3,769.7 1027.4,768.8" fill="rgb(196,165,66)"/><polygon points="1019.4,760.6 1019.4,760.6 1027.3,769.7" fill="rgb(205,174,75)"/><polygon points="1019.4,760.6 1027.3,769.7 1027.3,769.7" fill="rgb(196,165,66)"/><polygon points="1019.4,760.6 1019.4,760.6 1027.3,769.7" fill="rgb(205,174,75)"/><polygon points="1019.4,760.6 1027.3,769.7 1027.3,769.7" fill="rgb(196,165,66)"/><polygon points="1019.4,760.6 1019.4,760.6 1027.3,769.7" fill="rgb(205,174,75)"/><polygon points="1019.4,760.6 1027.3,769.7 1027.3,769.7" fill="rgb(196,165,66)"/><polygon points="1346.7,769.7 1346.7,769.7 1338.8,778.8" fill="rgb(205,177,75)"/><polygon points="1346.7,769.7 1338.8,778.8 1338.8,778.8" fill="rgb(196,168,66)"/><polygon points="1346.7,769.7 1346.7,769.7 1338.8,778.8" fill="rgb(205,177,75)"/><polygon points="1346.7,769.7 1338.8,778.4 1338.8,778.8" fill="rgb(196,168,66)"/><polygon points="1346.7,769.7 1345.8,766.2 1338.8,778.4" fill="rgb(205,177,75)"/><polygon points="1345.8,766.2 1337.2,774.4 1338.8,778.4" fill="rgb(196,168,66)"/><polygon points="1345.8,766.2 1342.3,762.0 1337.2,774.4" fill="rgb(205,177,75)"/><polygon points="1342.3,762.0 1333.1,770.5 1337.2,774.4" fill="rgb(196,168,66)"/><polygon points="1342.3,762.0 1336.1,757.8 1333.1,770.5" fill="rgb(205,177,75)"/><polygon points="1336.1,757.8 1326.5,766.8 1333.1,770.5" fill="rgb(196,168,66)"/><polygon points="1336.1,757.8 1327.3,753.9 1326.5,766.8" fill="rgb(205,177,75)"/><polygon points="1327.3,753.9 1317.4,763.3 1326.5,766.8" fill="rgb(196,168,66)"/><polygon points="1327.3,753.9 1316.2,750.3 1317.4,763.3" fill="rgb(205,177,75)"/><polygon points="1316.2,750.3 1306.2,760.0 1317.4,763.3" fill="rgb(196,168,66)"/><polygon points="1316.2,750.3 1302.8,747.0 1306.2,760.0" fill="rgb(205,177,75)"/><polygon points="1302.8,747.0 1292.9,757.0 1306.2,760.0" fill="rgb(196,168,66)"/><polygon points="1302.8,747.0 1287.5,744.0 1292.9,757.0" fill="rgb(205,177,75)"/><polygon points="1287.5,744.0 1277.8,754.5 1292.9,757.0" fill="rgb(196,168,66)"/><polygon points="1287.5,744.0 1270.4,741.5 1277.8,754.5" fill="rgb(205,177,75)"/><polygon points="1270.4,741.5 1261.2,752.3 1277.8,754.5" fill="rgb(196,168,66)"/><polygon points="1270.4,741.5 1251.9,739.5 1261.2,752.3" fill="rgb(205,177,75)"/><polygon points="1251.9,739.5 1243.2,750.6 1261.2,752.3" fill="rgb(196,168,66)"/><polygon points="1251.9,739.5 1232.3,738.0 1243.2,750.6" fill="rgb(205,177,75)"/><polygon points="1232.3,738.0 1224.4,749.4 1243.2,750.6" fill="rgb(196,168,66)"/><polygon points="1232.3,738.0 1212.0,737.1 1224.4,749.4" fill="rgb(205,177,75)"/><polygon points="1212.0,737.1 1204.8,748.7 1224.4,749.4" fill="rgb(196,168,66)"/><polygon points="1212.0,737.1 1191.2,736.7 1204.8,748.7" fill="rgb(205,177,75)"/><polygon points="1191.2,736.7 1185.0,748.4 1204.8,748.7" fill="rgb(196,168,66)"/><polygon points="1191.2,736.7 1170.3,736.8 1185.0,748.4" fill="rgb(205,177,75)"/><polygon points="1170.3,736.8 1165.2,748.8 1185.0,748.4" fill="rgb(196,168,66)"/><polygon points="1170.3,736.8 1149.7,737.6 1165.2,748.8" fill="rgb(205,177,75)"/><polygon points="1149.7,737.6 1145.8,749.6 1165.2,748.8" fill="rgb(196,168,66)"/><polygon points="1149.7,737.6 1129.8,738.9 1145.8,749.6" fill="rgb(205,177,75)"/><polygon points="1129.8,738.9 1127.1,750.9 1145.8,749.6" fill="rgb(196,168,66)"/><polygon points="1129.8,738.9 1110.8,740.7 1127.1,750.9" fill="rgb(205,177,75)"/><polygon points="1110.8,740.7 1109.4,752.7 1127.1,750.9" fill="rgb(196,168,66)"/><polygon points="1110.8,740.7 1093.2,743.0 1109.4,752.7" fill="rgb(205,177,75)"/><polygon points="1093.2,743.0 1093.0,755.0 1109.4,752.7" fill="rgb(196,168,66)"/><polygon points="1093.2,743.0 1077.1,745.7 1093.0,755.0" fill="rgb(205,177,75)"/><polygon points="1077.1,745.7 1078.3,757.6 1093.0,755.0" fill="rgb(196,168,66)"/><polygon points="1077.1,745.7 1062.9,748.9 1078.3,757.6" fill="rgb(205,177,75)"/><polygon points="1062.9,748.9 1065.4,760.6 1078.3,757.6" fill="rgb(196,168,66)"/><polygon points="1062.9,748.9 1050.9,752.4 1065.4,760.6" fill="rgb(205,177,75)"/><polygon points="1050.9,752.4 1054.6,764.0 1065.4,760.6" fill="rgb(196,168,66)"/><polygon points="1050.9,752.4 1041.1,756.2 1054.6,764.0" fill="rgb(205,177,75)"/><polygon points="1041.1,756.2 1046.0,767.5 1054.6,764.0" fill="rgb(196,168,66)"/><polygon points="1041.1,756.2 1033.9,760.3 1046.0,767.5" fill="rgb(205,177,75)"/><polygon points="1033.9,760.3 1039.9,771.3 1046.0,767.5" fill="rgb(196,168,66)"/><polygon points="1033.9,760.3 1029.3,764.5 1039.9,771.3" fill="rgb(205,177,75)"/><polygon points="1029.3,764.5 1036.3,775.2 1039.9,771.3" fill="rgb(196,168,66)"/><polygon points="1029.3,764.5 1027.4,768.8 1036.3,775.2" fill="rgb(205,177,75)"/><polygon points="1027.4,768.8 1035.2,778.8 1036.3,775.2" fill="rgb(196,168,66)"/><polygon points="1027.4,768.8 1027.3,769.7 1035.2,778.8" fill="rgb(205,177,75)"/><polygon points="1027.3,769.7 1035.2,778.8 1035.2,778.8" fill="rgb(196,168,66)"/><polygon points="1027.3,769.7 1027.3,769.7 1035.2,778.8" fill="rgb(205,177,75)"/><polygon points="1027.3,769.7 1035.2,778.8 1035.2,778.8" fill="rgb(196,168,66)"/><polygon points="1027.3,769.7 1027.3,769.7 1035.2,778.8" fill="rgb(205,177,75)"/><polygon points="1027.3,769.7 1035.2,778.8 1035.2,778.8" fill="rgb(196,168,66)"/><polygon points="1027.3,769.7 1027.3,769.7 1035.2,778.8" fill="rgb(205,177,75)"/><polygon points="1027.3,769.7 1035.2,778.8 1035.2,778.8" fill="rgb(196,168,66)"/><polygon points="1338.8,778.8 1338.8,778.8 1330.9,787.9" fill="rgb(205,180,75)"/><polygon points="1338.8,778.8 1330.9,787.9 1330.9,787.9" fill="rgb(196,171,66)"/><polygon points="1338.8,778.8 1338.8,778.4 1330.9,787.9" fill="rgb(205,180,75)"/><polygon points="1338.8,778.4 1330.7,786.4 1330.9,787.9" fill="rgb(196,171,66)"/><polygon points="1338.8,778.4 1337.2,774.4 1330.7,786.4" fill="rgb(205,180,75)"/><polygon points="1337.2,774.4 1328.5,782.8 1330.7,786.4" fill="rgb(196,171,66)"/><polygon points="1337.2,774.4 1333.1,770.5 1328.5,782.8" fill="rgb(205,180,75)"/><polygon points="1333.1,770.5 1323.8,779.3 1328.5,782.8" fill="rgb(196,171,66)"/><polygon points="1333.1,770.5 1326.5,766.8 1323.8,779.3" fill="rgb(205,180,75)"/><polygon points="1326.5,766.8 1316.9,776.0 1323.8,779.3" fill="rgb(196,171,66)"/><polygon points="1326.5,766.8 1317.4,763.3 1316.9,776.0" fill="rgb(205,180,75)"/><polygon points="1317.4,763.3 1307.7,772.8 1316.9,776.0" fill="rgb(196,171,66)"/><polygon points="1317.4,763.3 1306.2,760.0 1307.7,772.8" fill="rgb(205,180,75)"/><polygon points="1306.2,760.0 1296.4,769.9 1307.7,772.8" fill="rgb(196,171,66)"/><polygon points="1306.2,760.0 1292.9,757.0 1296.4,769.9" fill="rgb(205,180,75)"/><polygon points="1292.9,757.0 1283.3,767.3 1296.4,769.9" fill="rgb(196,171,66)"/><polygon points="1292.9,757.0 1277.8,754.5 1283.3,767.3" fill="rgb(205,180,75)"/><polygon points="1277.8,754.5 1268.5,765.1 1283.3,767.3" fill="rgb(196,171,66)"/><polygon points="1277.8,754.5 1261.2,752.3 1268.5,765.1" fill="rgb(205,180,75)"/><polygon points="1261.2,752.3 1252.3,763.2 1268.5,765.1" fill="rgb(196,171,66)"/><polygon points="1261.2,752.3 1243.2,750.6 1252.3,763.2" fill="rgb(205,180,75)"/><polygon points="1243.2,750.6 1235.0,761.8 1252.3,763.2" fill="rgb(196,171,66)"/><polygon points="1243.2,750.6 1224.4,749.4 1235.0,761.8" fill="rgb(205,180,75)"/><polygon points="1224.4,749.4 1216.9,760.8 1235.0,761.8" fill="rgb(196,171,66)"/><polygon points="1224.4,749.4 1204.8,748.7 1216.9,760.8" fill="rgb(205,180,75)"/><polygon points="1204.8,748.7 1198.3,760.3 1216.9,760.8" fill="rgb(196,171,66)"/><polygon points="1204.8,748.7 1185.0,748.4 1198.3,760.3" fill="rgb(205,180,75)"/><polygon points="1185.0,748.4 1179.5,760.3 1198.3,760.3" fill="rgb(196,171,66)"/><polygon points="1185.0,748.4 1165.2,748.8 1179.5,760.3" fill="rgb(205,180,75)"/><polygon points="1165.2,748.8 1160.8,760.7 1179.5,760.3" fill="rgb(196,171,66)"/><polygon points="1165.2,748.8 1145.8,749.6 1160.8,760.7" fill="rgb(205,180,75)"/><polygon points="1145.8,749.6 1142.5,761.6 1160.8,760.7" fill="rgb(196,171,66)"/><polygon points="1145.8,749.6 1127.1,750.9 1142.5,761.6" fill="rgb(205,180,75)"/><polygon points="1127.1,750.9 1125.1,762.9 1142.5,761.6" fill="rgb(196,171,66)"/><polygon points="1127.1,750.9 1109.4,752.7 1125.1,762.9" fill="rgb(205,180,75)"/><polygon points="1109.4,752.7 1108.6,764.7 1125.1,762.9" fill="rgb(196,171,66)"/><polygon points="1109.4,752.7 1093.0,755.0 1108.6,764.7" fill="rgb(205,180,75)"/><polygon points="1093.0,755.0 1093.6,766.9 1108.6,764.7" fill="rgb(196,171,66)"/><polygon points="1093.0,755.0 1078.3,757.6 1093.6,766.9" fill="rgb(205,180,75)"/><polygon points="1078.3,757.6 1080.1,769.4 1093.6,766.9" fill="rgb(196,171,66)"/><polygon points="1078.3,757.6 1065.4,760.6 1080.1,769.4" fill="rgb(205,180,75)"/><polygon points="1065.4,760.6 1068.4,772.2 1080.1,769.4" fill="rgb(196,171,66)"/><polygon points="1065.4,760.6 1054.6,764.0 1068.4,772.2" fill="rgb(205,180,75)"/><polygon points="1054.6,764.0 1058.8,775.3 1068.4,772.2" fill="rgb(196,171,66)"/><polygon points="1054.6,764.0 1046.0,767.5 1058.8,775.3" fill="rgb(205,180,75)"/><polygon points="1046.0,767.5 1051.4,778.7 1058.8,775.3" fill="rgb(196,171,66)"/><polygon points="1046.0,767.5 1039.9,771.3 1051.4,778.7" fill="rgb(205,180,75)"/><polygon points="1039.9,771.3 1046.3,782.1 1051.4,778.7" fill="rgb(196,171,66)"/><polygon points="1039.9,771.3 1036.3,775.2 1046.3,782.1" fill="rgb(205,180,75)"/><polygon points="1036.3,775.2 1043.6,785.7 1046.3,782.1" fill="rgb(196,171,66)"/><polygon points="1036.3,775.2 1035.2,778.8 1043.6,785.7" fill="rgb(205,180,75)"/><polygon points="1035.2,778.8 1043.1,787.9 1043.6,785.7" fill="rgb(196,171,66)"/><polygon points="1035.2,778.8 1035.2,778.8 1043.1,787.9" fill="rgb(205,180,75)"/><polygon points="1035.2,778.8 1043.1,787.9 1043.1,787.9" fill="rgb(196,171,66)"/><polygon points="1035.2,778.8 1035.2,778.8 1043.1,787.9" fill="rgb(205,180,75)"/><polygon points="1035.2,778.8 1043.1,787.9 1043.1,787.9" fill="rgb(196,171,66)"/><polygon points="1035.2,778.8 1035.2,778.8 1043.1,787.9" fill="rgb(205,180,75)"/><polygon points="1035.2,778.8 1043.1,787.9 1043.1,787.9" fill="rgb(196,171,66)"/><polygon points="1035.2,778.8 1035.2,778.8 1043.1,787.9" fill="rgb(205,180,75)"/><polygon points="1035.2,778.8 1043.1,787.9 1043.1,787.9" fill="rgb(196,171,66)"/><polygon points="1330.9,787.9 1330.9,787.9 1323.0,797.0" fill="rgb(205,183,75)"/><polygon points="1330.9,787.9 1323.0,797.0 1323.0,797.0" fill="rgb(196,174,66)"/><polygon points="1330.9,787.9 1330.7,786.4 1323.0,797.0" fill="rgb(205,183,75)"/><polygon points="1330.7,786.4 1322.4,794.7 1323.0,797.0" fill="rgb(196,174,66)"/><polygon points="1330.7,786.4 1328.5,782.8 1322.4,794.7" fill="rgb(205,183,75)"/><polygon points="1328.5,782.8 1319.6,791.5 1322.4,794.7" fill="rgb(196,174,66)"/><polygon points="1328.5,782.8 1323.8,779.3 1319.6,791.5" fill="rgb(205,183,75)"/><polygon points="1323.8,779.3 1314.6,788.3 1319.6,791.5" fill="rgb(196,174,66)"/><polygon points="1323.8,779.3 1316.9,776.0 1314.6,788.3" fill="rgb(205,183,75)"/><polygon points="1316.9,776.0 1307.4,785.4 1314.6,788.3" fill="rgb(196,174,66)"/><polygon points="1316.9,776.0 1307.7,772.8 1307.4,785.4" fill="rgb(205,183,75)"/><polygon points="1307.7,772.8 1298.1,782.6 1307.4,785.4" fill="rgb(196,174,66)"/><polygon points="1307.7,772.8 1296.4,769.9 1298.1,782.6" fill="rgb(205,183,75)"/><polygon points="1296.4,769.9 1286.9,780.0 1298.1,782.6" fill="rgb(196,174,66)"/><polygon points="1296.4,769.9 1283.3,767.3 1286.9,780.0" fill="rgb(205,183,75)"/><polygon points="1283.3,767.3 1274.0,777.8 1286.9,780.0" fill="rgb(196,174,66)"/><polygon points="1283.3,767.3 1268.5,765.1 1274.0,777.8" fill="rgb(205,183,75)"/><polygon points="1268.5,765.1 1259.6,775.9 1274.0,777.8" fill="rgb(196,174,66)"/><polygon points="1268.5,765.1 1252.3,763.2 1259.6,775.9" fill="rgb(205,183,75)"/><polygon points="1252.3,763.2 1243.9,774.3 1259.6,775.9" fill="rgb(196,174,66)"/><polygon points="1252.3,763.2 1235.0,761.8 1243.9,774.3" fill="rgb(205,183,75)"/><polygon points="1235.0,761.8 1227.3,773.1 1243.9,774.3" fill="rgb(196,174,66)"/><polygon points="1235.0,761.8 1216.9,760.8 1227.3,773.1" fill="rgb(205,183,75)"/><polygon points="1216.9,760.8 1210.0,772.4 1227.3,773.1" fill="rgb(196,174,66)"/><polygon points="1216.9,760.8 1198.3,760.3 1210.0,772.4" fill="rgb(205,183,75)"/><polygon points="1198.3,760.3 1192.3,772.0 1210.0,772.4" fill="rgb(196,174,66)"/><polygon points="1198.3,760.3 1179.5,760.3 1192.3,772.0" fill="rgb(205,183,75)"/><polygon points="1179.5,760.3 1174.6,772.1 1192.3,772.0" fill="rgb(196,174,66)"/><polygon points="1179.5,760.3 1160.8,760.7 1174.6,772.1" fill="rgb(205,183,75)"/><polygon points="1160.8,760.7 1157.0,772.6 1174.6,772.1" fill="rgb(196,174,66)"/><polygon points="1160.8,760.7 1142.5,761.6 1157.0,772.6" fill="rgb(205,183,75)"/><polygon points="1142.5,761.6 1139.9,773.5 1157.0,772.6" fill="rgb(196,174,66)"/><polygon points="1142.5,761.6 1125.1,762.9 1139.9,773.5" fill="rgb(205,183,75)"/><polygon points="1125.1,762.9 1123.7,774.9 1139.9,773.5" fill="rgb(196,174,66)"/><polygon points="1125.1,762.9 1108.6,764.7 1123.7,774.9" fill="rgb(205,183,75)"/><polygon points="1108.6,764.7 1108.5,776.6 1123.7,774.9" fill="rgb(196,174,66)"/><polygon points="1108.6,764.7 1093.6,766.9 1108.5,776.6" fill="rgb(205,183,75)"/><polygon points="1093.6,766.9 1094.7,778.6 1108.5,776.6" fill="rgb(196,174,66)"/><polygon points="1093.6,766.9 1080.1,769.4 1094.7,778.6" fill="rgb(205,183,75)"/><polygon points="1080.1,769.4 1082.4,781.0 1094.7,778.6" fill="rgb(196,174,66)"/><polygon points="1080.1,769.4 1068.4,772.2 1082.4,781.0" fill="rgb(205,183,75)"/><polygon points="1068.4,772.2 1072.0,783.7 1082.4,781.0" fill="rgb(196,174,66)"/><polygon points="1068.4,772.2 1058.8,775.3 1072.0,783.7" fill="rgb(205,183,75)"/><polygon points="1058.8,775.3 1063.5,786.5 1072.0,783.7" fill="rgb(196,174,66)"/><polygon points="1058.8,775.3 1051.4,778.7 1063.5,786.5" fill="rgb(205,183,75)"/><polygon points="1051.4,778.7 1057.1,789.6 1063.5,786.5" fill="rgb(196,174,66)"/><polygon points="1051.4,778.7 1046.3,782.1 1057.1,789.6" fill="rgb(205,183,75)"/><polygon points="1046.3,782.1 1053.0,792.8 1057.1,789.6" fill="rgb(196,174,66)"/><polygon points="1046.3,782.1 1043.6,785.7 1053.0,792.8" fill="rgb(205,183,75)"/><polygon points="1043.6,785.7 1051.1,796.0 1053.0,792.8" fill="rgb(196,174,66)"/><polygon points="1043.6,785.7 1043.1,787.9 1051.1,796.0" fill="rgb(205,183,75)"/><polygon points="1043.1,787.9 1051.0,797.0 1051.1,796.0" fill="rgb(196,174,66)"/><polygon points="1043.1,787.9 1043.1,787.9 1051.0,797.0" fill="rgb(205,183,75)"/><polygon points="1043.1,787.9 1051.0,797.0 1051.0,797.0" fill="rgb(196,174,66)"/><polygon points="1043.1,787.9 1043.1,787.9 1051.0,797.0" fill="rgb(205,183,75)"/><polygon points="1043.1,787.9 1051.0,797.0 1051.0,797.0" fill="rgb(196,174,66)"/><polygon points="1043.1,787.9 1043.1,787.9 1051.0,797.0" fill="rgb(205,183,75)"/><polygon points="1043.1,787.9 1051.0,797.0 1051.0,797.0" fill="rgb(196,174,66)"/><polygon points="1043.1,787.9 1043.1,787.9 1051.0,797.0" fill="rgb(205,183,75)"/><polygon points="1043.1,787.9 1051.0,797.0 1051.0,797.0" fill="rgb(196,174,66)"/></g><clipPath id="bandc"><path d="M1045 797 A142 25 0 0 1 1329 797 L1315 806 A128 17 0 0 0 1059 806 Z"/></clipPath><clipPath id="silc"><path d="M993 735.5 L1045.4 789.5 L1067 812 L1303 812 L1325 790 L1380 736Z"/></clipPath><g clip-path="url(#silc)"><path d="M1045 797 A142 25 0 0 1 1329 797 L1315 806 A128 17 0 0 0 1059 806 Z" fill="#a2a6aa"/><g clip-path="url(#bandc)"><polygon points="1315.0,801.0 1312.5,797.7 1322.3,794.5" fill="#c8b046"/><polygon points="1312.5,797.7 1305.3,794.5 1317.1,789.7" fill="#c8b046"/><polygon points="1305.3,794.5 1293.4,791.6 1306.9,785.2" fill="#c8b046"/><polygon points="1293.4,791.6 1277.5,789.0 1292.1,781.1" fill="#c8b046"/><polygon points="1277.5,789.0 1258.1,786.9 1273.3,777.7" fill="#c8b046"/><polygon points="1258.1,786.9 1236.0,785.3 1251.1,775.0" fill="#c8b046"/><polygon points="1236.0,785.3 1212.0,784.3 1226.5,773.1" fill="#c8b046"/><polygon points="1212.0,784.3 1187.0,784.0 1200.3,772.1" fill="#c8b046"/><polygon points="1187.0,784.0 1162.0,784.3 1173.7,772.1" fill="#c8b046"/><polygon points="1162.0,784.3 1138.0,785.3 1147.5,773.1" fill="#c8b046"/><polygon points="1138.0,785.3 1115.9,786.9 1122.9,775.0" fill="#c8b046"/><polygon points="1115.9,786.9 1096.5,789.0 1100.7,777.7" fill="#c8b046"/><polygon points="1096.5,789.0 1080.6,791.6 1081.9,781.1" fill="#c8b046"/><polygon points="1080.6,791.6 1068.7,794.5 1067.1,785.2" fill="#c8b046"/><polygon points="1068.7,794.5 1061.5,797.7 1056.9,789.7" fill="#c8b046"/><polygon points="1061.5,797.7 1059.0,801.0 1051.7,794.5" fill="#c8b046"/></g></g><path d="M1059 801 A128 17 0 0 1 1315 801 L1303 812 C1290 830 1277 852 1277 872 C1277 890 1288.6 900 1288.6 917 A104 24.7 0 0 1 1080.8 917 C1081 900 1091 890 1091 872 C1091 852 1078 830 1067 812 Z" fill="url(#neckH)"/><clipPath id="neckc"><path d="M1059 801 A128 17 0 0 1 1315 801 L1303 812 C1290 830 1277 852 1277 872 C1277 890 1288.6 900 1288.6 917 A104 24.7 0 0 1 1080.8 917 C1081 900 1091 890 1091 872 C1091 852 1078 830 1067 812 Z"/></clipPath><g clip-path="url(#neckc)"><polygon points="1314.0,801.0 1314.0,801.0 1304.5,811.6" fill="rgb(100,102,105)"/><polygon points="1314.0,801.0 1304.5,811.6 1304.5,811.6" fill="rgb(91,93,96)"/><polygon points="1314.0,801.0 1314.0,801.0 1304.5,811.6" fill="rgb(100,102,105)"/><polygon points="1314.0,801.0 1304.5,811.6 1304.5,811.6" fill="rgb(91,93,96)"/><polygon points="1314.0,801.0 1314.0,801.0 1304.5,811.6" fill="rgb(99,102,106)"/><polygon points="1314.0,801.0 1304.5,811.6 1304.5,811.6" fill="rgb(90,93,97)"/><polygon points="1314.0,801.0 1314.0,801.0 1304.5,811.6" fill="rgb(99,102,106)"/><polygon points="1314.0,801.0 1304.5,811.6 1304.5,811.6" fill="rgb(90,93,97)"/><polygon points="1314.0,801.0 1314.0,801.0 1304.5,811.6" fill="rgb(98,102,107)"/><polygon points="1314.0,801.0 1304.5,811.6 1304.5,811.6" fill="rgb(89,93,98)"/><polygon points="1314.0,801.0 1314.0,801.0 1304.5,811.6" fill="rgb(98,102,107)"/><polygon points="1314.0,801.0 1304.5,811.6 1304.5,811.6" fill="rgb(89,93,98)"/><polygon points="1314.0,801.0 1314.0,801.0 1304.5,811.6" fill="rgb(97,102,108)"/><polygon points="1314.0,801.0 1304.5,811.6 1304.5,811.6" fill="rgb(88,93,99)"/><polygon points="1314.0,801.0 1314.0,801.0 1304.5,811.6" fill="rgb(97,102,108)"/><polygon points="1314.0,801.0 1304.5,811.6 1304.5,811.6" fill="rgb(88,93,99)"/><polygon points="1314.0,801.0 1314.0,801.0 1304.5,811.6" fill="rgb(97,102,108)"/><polygon points="1314.0,801.0 1304.5,811.6 1304.5,811.6" fill="rgb(88,93,99)"/><polygon points="1314.0,801.0 1314.0,801.0 1304.5,811.6" fill="rgb(97,102,108)"/><polygon points="1314.0,801.0 1304.5,811.6 1304.5,811.6" fill="rgb(88,93,99)"/><polygon points="1314.0,801.0 1314.0,801.0 1304.3,810.6" fill="rgb(97,102,108)"/><polygon points="1314.0,801.0 1304.3,810.6 1304.5,811.6" fill="rgb(88,93,99)"/><polygon points="1314.0,801.0 1313.2,799.1 1302.8,808.6" fill="rgb(97,102,109)"/><polygon points="1314.0,801.0 1302.8,808.6 1304.3,810.6" fill="rgb(88,93,100)"/><polygon points="1313.2,799.1 1310.8,797.2 1299.9,806.7" fill="rgb(101,106,113)"/><polygon points="1313.2,799.1 1299.9,806.7 1302.8,808.6" fill="rgb(92,97,104)"/><polygon points="1310.8,797.2 1306.8,795.4 1295.5,804.8" fill="rgb(107,111,118)"/><polygon points="1310.8,797.2 1295.5,804.8 1299.9,806.7" fill="rgb(98,102,109)"/><polygon points="1306.8,795.4 1301.3,793.6 1289.7,803.0" fill="rgb(114,119,125)"/><polygon points="1306.8,795.4 1289.7,803.0 1295.5,804.8" fill="rgb(105,110,116)"/><polygon points="1301.3,793.6 1294.4,792.0 1282.6,801.3" fill="rgb(123,127,133)"/><polygon points="1301.3,793.6 1282.6,801.3 1289.7,803.0" fill="rgb(114,118,124)"/><polygon points="1294.4,792.0 1286.1,790.4 1274.3,799.8" fill="rgb(132,137,142)"/><polygon points="1294.4,792.0 1274.3,799.8 1282.6,801.3" fill="rgb(123,128,133)"/><polygon points="1286.1,790.4 1276.5,789.0 1265.0,798.4" fill="rgb(142,146,151)"/><polygon points="1286.1,790.4 1265.0,798.4 1274.3,799.8" fill="rgb(133,137,142)"/><polygon points="1276.5,789.0 1265.8,787.7 1254.6,797.1" fill="rgb(152,155,160)"/><polygon points="1276.5,789.0 1254.6,797.1 1265.0,798.4" fill="rgb(143,146,151)"/><polygon points="1265.8,787.7 1254.1,786.6 1243.3,796.1" fill="rgb(161,164,168)"/><polygon points="1265.8,787.7 1243.3,796.1 1254.6,797.1" fill="rgb(152,155,159)"/><polygon points="1254.1,786.6 1241.5,785.7 1231.3,795.2" fill="rgb(170,172,176)"/><polygon points="1254.1,786.6 1231.3,795.2 1243.3,796.1" fill="rgb(161,163,167)"/><polygon points="1241.5,785.7 1228.3,785.0 1218.8,794.6" fill="rgb(177,179,182)"/><polygon points="1241.5,785.7 1218.8,794.6 1231.3,795.2" fill="rgb(168,170,173)"/><polygon points="1228.3,785.0 1214.5,784.4 1205.8,794.1" fill="rgb(183,185,187)"/><polygon points="1228.3,785.0 1205.8,794.1 1218.8,794.6" fill="rgb(174,176,178)"/><polygon points="1214.5,784.4 1200.3,784.1 1192.6,793.9" fill="rgb(188,189,190)"/><polygon points="1214.5,784.4 1192.6,793.9 1205.8,794.1" fill="rgb(179,180,181)"/><polygon points="1200.3,784.1 1186.0,784.0 1179.4,793.9" fill="rgb(190,191,191)"/><polygon points="1200.3,784.1 1179.4,793.9 1192.6,793.9" fill="rgb(181,182,182)"/><polygon points="1186.0,784.0 1171.7,784.1 1166.2,794.1" fill="rgb(191,191,190)"/><polygon points="1186.0,784.0 1166.2,794.1 1179.4,793.9" fill="rgb(182,182,181)"/><polygon points="1171.7,784.1 1157.5,784.4 1153.2,794.6" fill="rgb(190,189,188)"/><polygon points="1171.7,784.1 1153.2,794.6 1166.2,794.1" fill="rgb(181,180,179)"/><polygon points="1157.5,784.4 1143.7,785.0 1140.7,795.2" fill="rgb(187,185,183)"/><polygon points="1157.5,784.4 1140.7,795.2 1153.2,794.6" fill="rgb(178,176,174)"/><polygon points="1143.7,785.0 1130.5,785.7 1128.7,796.1" fill="rgb(182,180,177)"/><polygon points="1143.7,785.0 1128.7,796.1 1140.7,795.2" fill="rgb(173,171,168)"/><polygon points="1130.5,785.7 1117.9,786.6 1117.4,797.1" fill="rgb(176,173,170)"/><polygon points="1130.5,785.7 1117.4,797.1 1128.7,796.1" fill="rgb(167,164,161)"/><polygon points="1117.9,786.6 1106.2,787.7 1107.0,798.4" fill="rgb(168,166,161)"/><polygon points="1117.9,786.6 1107.0,798.4 1117.4,797.1" fill="rgb(159,157,152)"/><polygon points="1106.2,787.7 1095.5,789.0 1097.7,799.8" fill="rgb(160,157,152)"/><polygon points="1106.2,787.7 1097.7,799.8 1107.0,798.4" fill="rgb(151,148,143)"/><polygon points="1095.5,789.0 1085.9,790.4 1089.4,801.3" fill="rgb(151,148,142)"/><polygon points="1095.5,789.0 1089.4,801.3 1097.7,799.8" fill="rgb(142,139,133)"/><polygon points="1085.9,790.4 1077.6,792.0 1082.3,803.0" fill="rgb(142,138,132)"/><polygon points="1085.9,790.4 1082.3,803.0 1089.4,801.3" fill="rgb(133,129,123)"/><polygon points="1077.6,792.0 1070.7,793.6 1076.5,804.8" fill="rgb(133,129,123)"/><polygon points="1077.6,792.0 1076.5,804.8 1082.3,803.0" fill="rgb(124,120,114)"/><polygon points="1070.7,793.6 1065.2,795.4 1072.1,806.7" fill="rgb(125,121,114)"/><polygon points="1070.7,793.6 1072.1,806.7 1076.5,804.8" fill="rgb(116,112,105)"/><polygon points="1065.2,795.4 1061.2,797.2 1069.2,808.6" fill="rgb(118,113,107)"/><polygon points="1065.2,795.4 1069.2,808.6 1072.1,806.7" fill="rgb(109,104,98)"/><polygon points="1061.2,797.2 1058.8,799.1 1067.7,810.6" fill="rgb(113,108,101)"/><polygon points="1061.2,797.2 1067.7,810.6 1069.2,808.6" fill="rgb(104,99,92)"/><polygon points="1058.8,799.1 1058.0,801.0 1067.5,811.6" fill="rgb(109,104,97)"/><polygon points="1058.8,799.1 1067.5,811.6 1067.7,810.6" fill="rgb(100,95,88)"/><polygon points="1058.0,801.0 1058.0,801.0 1067.5,811.6" fill="rgb(108,103,97)"/><polygon points="1058.0,801.0 1067.5,811.6 1067.5,811.6" fill="rgb(99,94,88)"/><polygon points="1058.0,801.0 1058.0,801.0 1067.5,811.6" fill="rgb(108,103,97)"/><polygon points="1058.0,801.0 1067.5,811.6 1067.5,811.6" fill="rgb(99,94,88)"/><polygon points="1304.5,811.6 1304.5,811.6 1296.5,822.1" fill="rgb(100,102,105)"/><polygon points="1304.5,811.6 1296.5,822.1 1296.5,822.1" fill="rgb(91,93,96)"/><polygon points="1304.5,811.6 1304.5,811.6 1296.5,822.1" fill="rgb(99,102,106)"/><polygon points="1304.5,811.6 1296.5,822.1 1296.5,822.1" fill="rgb(90,93,97)"/><polygon points="1304.5,811.6 1304.5,811.6 1296.5,822.1" fill="rgb(99,102,106)"/><polygon points="1304.5,811.6 1296.5,822.1 1296.5,822.1" fill="rgb(90,93,97)"/><polygon points="1304.5,811.6 1304.5,811.6 1296.5,822.1" fill="rgb(98,102,107)"/><polygon points="1304.5,811.6 1296.5,822.1 1296.5,822.1" fill="rgb(89,93,98)"/><polygon points="1304.5,811.6 1304.5,811.6 1296.5,822.1" fill="rgb(98,102,107)"/><polygon points="1304.5,811.6 1296.5,822.1 1296.5,822.1" fill="rgb(89,93,98)"/><polygon points="1304.5,811.6 1304.5,811.6 1296.5,822.1" fill="rgb(97,102,108)"/><polygon points="1304.5,811.6 1296.5,822.1 1296.5,822.1" fill="rgb(88,93,99)"/><polygon points="1304.5,811.6 1304.5,811.6 1296.5,822.1" fill="rgb(97,102,108)"/><polygon points="1304.5,811.6 1296.5,822.1 1296.5,822.1" fill="rgb(88,93,99)"/><polygon points="1304.5,811.6 1304.5,811.6 1296.5,822.1" fill="rgb(97,102,108)"/><polygon points="1304.5,811.6 1296.5,822.1 1296.5,822.1" fill="rgb(88,93,99)"/><polygon points="1304.5,811.6 1304.5,811.6 1296.5,822.1" fill="rgb(97,102,108)"/><polygon points="1304.5,811.6 1296.5,822.1 1296.5,822.1" fill="rgb(88,93,99)"/><polygon points="1304.5,811.6 1304.5,811.6 1296.5,822.1" fill="rgb(97,102,108)"/><polygon points="1304.5,811.6 1296.5,822.1 1296.5,822.1" fill="rgb(88,93,99)"/><polygon points="1304.5,811.6 1304.3,810.6 1295.8,820.1" fill="rgb(97,102,109)"/><polygon points="1304.5,811.6 1295.8,820.1 1296.5,822.1" fill="rgb(88,93,100)"/><polygon points="1304.3,810.6 1302.8,808.6 1293.7,818.1" fill="rgb(99,104,111)"/><polygon points="1304.3,810.6 1293.7,818.1 1295.8,820.1" fill="rgb(90,95,102)"/><polygon points="1302.8,808.6 1299.9,806.7 1290.3,816.1" fill="rgb(104,108,115)"/><polygon points="1302.8,808.6 1290.3,816.1 1293.7,818.1" fill="rgb(95,99,106)"/><polygon points="1299.9,806.7 1295.5,804.8 1285.6,814.2" fill="rgb(110,115,122)"/><polygon points="1299.9,806.7 1285.6,814.2 1290.3,816.1" fill="rgb(101,106,113)"/><polygon points="1295.5,804.8 1289.7,803.0 1279.6,812.4" fill="rgb(119,123,130)"/><polygon points="1295.5,804.8 1279.6,812.4 1285.6,814.2" fill="rgb(110,114,121)"/><polygon points="1289.7,803.0 1282.6,801.3 1272.4,810.7" fill="rgb(128,132,138)"/><polygon points="1289.7,803.0 1272.4,810.7 1279.6,812.4" fill="rgb(119,123,129)"/><polygon points="1282.6,801.3 1274.3,799.8 1264.1,809.1" fill="rgb(138,142,147)"/><polygon points="1282.6,801.3 1264.1,809.1 1272.4,810.7" fill="rgb(129,133,138)"/><polygon points="1274.3,799.8 1265.0,798.4 1254.9,807.8" fill="rgb(148,151,156)"/><polygon points="1274.3,799.8 1254.9,807.8 1264.1,809.1" fill="rgb(139,142,147)"/><polygon points="1265.0,798.4 1254.6,797.1 1244.8,806.6" fill="rgb(158,161,165)"/><polygon points="1265.0,798.4 1244.8,806.6 1254.9,807.8" fill="rgb(149,152,156)"/><polygon points="1254.6,797.1 1243.3,796.1 1233.9,805.6" fill="rgb(167,169,173)"/><polygon points="1254.6,797.1 1233.9,805.6 1244.8,806.6" fill="rgb(158,160,164)"/><polygon points="1243.3,796.1 1231.3,795.2 1222.5,804.8" fill="rgb(175,177,180)"/><polygon points="1243.3,796.1 1222.5,804.8 1233.9,805.6" fill="rgb(166,168,171)"/><polygon points="1231.3,795.2 1218.8,794.6 1210.6,804.2" fill="rgb(182,183,186)"/><polygon points="1231.3,795.2 1210.6,804.2 1222.5,804.8" fill="rgb(173,174,177)"/><polygon points="1218.8,794.6 1205.8,794.1 1198.4,803.9" fill="rgb(187,188,190)"/><polygon points="1218.8,794.6 1198.4,803.9 1210.6,804.2" fill="rgb(178,179,181)"/><polygon points="1205.8,794.1 1192.6,793.9 1186.0,803.7" fill="rgb(190,191,192)"/><polygon points="1205.8,794.1 1186.0,803.7 1198.4,803.9" fill="rgb(181,182,183)"/><polygon points="1192.6,793.9 1179.4,793.9 1173.6,803.9" fill="rgb(192,192,192)"/><polygon points="1192.6,793.9 1173.6,803.9 1186.0,803.7" fill="rgb(183,183,183)"/><polygon points="1179.4,793.9 1166.2,794.1 1161.4,804.2" fill="rgb(192,191,190)"/><polygon points="1179.4,793.9 1161.4,804.2 1173.6,803.9" fill="rgb(183,182,181)"/><polygon points="1166.2,794.1 1153.2,794.6 1149.5,804.8" fill="rgb(190,189,187)"/><polygon points="1166.2,794.1 1149.5,804.8 1161.4,804.2" fill="rgb(181,180,178)"/><polygon points="1153.2,794.6 1140.7,795.2 1138.1,805.6" fill="rgb(186,184,182)"/><polygon points="1153.2,794.6 1138.1,805.6 1149.5,804.8" fill="rgb(177,175,173)"/><polygon points="1140.7,795.2 1128.7,796.1 1127.2,806.6" fill="rgb(180,178,175)"/><polygon points="1140.7,795.2 1127.2,806.6 1138.1,805.6" fill="rgb(171,169,166)"/><polygon points="1128.7,796.1 1117.4,797.1 1117.1,807.8" fill="rgb(173,171,167)"/><polygon points="1128.7,796.1 1117.1,807.8 1127.2,806.6" fill="rgb(164,162,158)"/><polygon points="1117.4,797.1 1107.0,798.4 1107.9,809.1" fill="rgb(165,162,158)"/><polygon points="1117.4,797.1 1107.9,809.1 1117.1,807.8" fill="rgb(156,153,149)"/><polygon points="1107.0,798.4 1097.7,799.8 1099.6,810.7" fill="rgb(156,153,148)"/><polygon points="1107.0,798.4 1099.6,810.7 1107.9,809.1" fill="rgb(147,144,139)"/><polygon points="1097.7,799.8 1089.4,801.3 1092.4,812.4" fill="rgb(147,143,138)"/><polygon points="1097.7,799.8 1092.4,812.4 1099.6,810.7" fill="rgb(138,134,129)"/><polygon points="1089.4,801.3 1082.3,803.0 1086.4,814.2" fill="rgb(138,134,128)"/><polygon points="1089.4,801.3 1086.4,814.2 1092.4,812.4" fill="rgb(129,125,119)"/><polygon points="1082.3,803.0 1076.5,804.8 1081.7,816.1" fill="rgb(130,125,119)"/><polygon points="1082.3,803.0 1081.7,816.1 1086.4,814.2" fill="rgb(121,116,110)"/><polygon points="1076.5,804.8 1072.1,806.7 1078.3,818.1" fill="rgb(122,117,110)"/><polygon points="1076.5,804.8 1078.3,818.1 1081.7,816.1" fill="rgb(113,108,101)"/><polygon points="1072.1,806.7 1069.2,808.6 1076.2,820.1" fill="rgb(115,110,104)"/><polygon points="1072.1,806.7 1076.2,820.1 1078.3,818.1" fill="rgb(106,101,95)"/><polygon points="1069.2,808.6 1067.7,810.6 1075.5,822.1" fill="rgb(111,106,99)"/><polygon points="1069.2,808.6 1075.5,822.1 1076.2,820.1" fill="rgb(102,97,90)"/><polygon points="1067.7,810.6 1067.5,811.6 1075.5,822.1" fill="rgb(109,104,97)"/><polygon points="1067.7,810.6 1075.5,822.1 1075.5,822.1" fill="rgb(100,95,88)"/><polygon points="1067.5,811.6 1067.5,811.6 1075.5,822.1" fill="rgb(108,103,97)"/><polygon points="1067.5,811.6 1075.5,822.1 1075.5,822.1" fill="rgb(99,94,88)"/><polygon points="1067.5,811.6 1067.5,811.6 1075.5,822.1" fill="rgb(108,103,97)"/><polygon points="1067.5,811.6 1075.5,822.1 1075.5,822.1" fill="rgb(99,94,88)"/><polygon points="1296.5,822.1 1296.5,822.1 1290.0,832.7" fill="rgb(100,102,105)"/><polygon points="1296.5,822.1 1290.0,832.7 1290.0,832.7" fill="rgb(91,93,96)"/><polygon points="1296.5,822.1 1296.5,822.1 1290.0,832.7" fill="rgb(99,102,106)"/><polygon points="1296.5,822.1 1290.0,832.7 1290.0,832.7" fill="rgb(90,93,97)"/><polygon points="1296.5,822.1 1296.5,822.1 1290.0,832.7" fill="rgb(99,102,106)"/><polygon points="1296.5,822.1 1290.0,832.7 1290.0,832.7" fill="rgb(90,93,97)"/><polygon points="1296.5,822.1 1296.5,822.1 1290.0,832.7" fill="rgb(98,102,107)"/><polygon points="1296.5,822.1 1290.0,832.7 1290.0,832.7" fill="rgb(89,93,98)"/><polygon points="1296.5,822.1 1296.5,822.1 1290.0,832.7" fill="rgb(98,102,107)"/><polygon points="1296.5,822.1 1290.0,832.7 1290.0,832.7" fill="rgb(89,93,98)"/><polygon points="1296.5,822.1 1296.5,822.1 1290.0,832.7" fill="rgb(97,102,108)"/><polygon points="1296.5,822.1 1290.0,832.7 1290.0,832.7" fill="rgb(88,93,99)"/><polygon points="1296.5,822.1 1296.5,822.1 1290.0,832.7" fill="rgb(97,102,108)"/><polygon points="1296.5,822.1 1290.0,832.7 1290.0,832.7" fill="rgb(88,93,99)"/><polygon points="1296.5,822.1 1296.5,822.1 1290.0,832.7" fill="rgb(97,102,108)"/><polygon points="1296.5,822.1 1290.0,832.7 1290.0,832.7" fill="rgb(88,93,99)"/><polygon points="1296.5,822.1 1296.5,822.1 1290.0,832.7" fill="rgb(97,102,108)"/><polygon points="1296.5,822.1 1290.0,832.7 1290.0,832.7" fill="rgb(88,93,99)"/><polygon points="1296.5,822.1 1296.5,822.1 1289.9,831.6" fill="rgb(97,102,108)"/><polygon points="1296.5,822.1 1289.9,831.6 1290.0,832.7" fill="rgb(88,93,99)"/><polygon points="1296.5,822.1 1295.8,820.1 1288.6,829.5" fill="rgb(97,102,109)"/><polygon points="1296.5,822.1 1288.6,829.5 1289.9,831.6" fill="rgb(88,93,100)"/><polygon points="1295.8,820.1 1293.7,818.1 1286.0,827.4" fill="rgb(101,106,113)"/><polygon points="1295.8,820.1 1286.0,827.4 1288.6,829.5" fill="rgb(92,97,104)"/><polygon points="1293.7,818.1 1290.3,816.1 1282.1,825.4" fill="rgb(107,112,119)"/><polygon points="1293.7,818.1 1282.1,825.4 1286.0,827.4" fill="rgb(98,103,110)"/><polygon points="1290.3,816.1 1285.6,814.2 1277.1,823.5" fill="rgb(115,120,126)"/><polygon points="1290.3,816.1 1277.1,823.5 1282.1,825.4" fill="rgb(106,111,117)"/><polygon points="1285.6,814.2 1279.6,812.4 1270.9,821.7" fill="rgb(124,129,135)"/><polygon points="1285.6,814.2 1270.9,821.7 1277.1,823.5" fill="rgb(115,120,126)"/><polygon points="1279.6,812.4 1272.4,810.7 1263.6,820.0" fill="rgb(134,138,144)"/><polygon points="1279.6,812.4 1263.6,820.0 1270.9,821.7" fill="rgb(125,129,135)"/><polygon points="1272.4,810.7 1264.1,809.1 1255.3,818.5" fill="rgb(144,148,153)"/><polygon points="1272.4,810.7 1255.3,818.5 1263.6,820.0" fill="rgb(135,139,144)"/><polygon points="1264.1,809.1 1254.9,807.8 1246.2,817.1" fill="rgb(155,158,163)"/><polygon points="1264.1,809.1 1246.2,817.1 1255.3,818.5" fill="rgb(146,149,154)"/><polygon points="1254.9,807.8 1244.8,806.6 1236.3,816.0" fill="rgb(165,167,171)"/><polygon points="1254.9,807.8 1236.3,816.0 1246.2,817.1" fill="rgb(156,158,162)"/><polygon points="1244.8,806.6 1233.9,805.6 1225.8,815.1" fill="rgb(173,176,179)"/><polygon points="1244.8,806.6 1225.8,815.1 1236.3,816.0" fill="rgb(164,167,170)"/><polygon points="1233.9,805.6 1222.5,804.8 1214.8,814.4" fill="rgb(181,183,186)"/><polygon points="1233.9,805.6 1214.8,814.4 1225.8,815.1" fill="rgb(172,174,177)"/><polygon points="1222.5,804.8 1210.6,804.2 1203.4,813.9" fill="rgb(187,189,191)"/><polygon points="1222.5,804.8 1203.4,813.9 1214.8,814.4" fill="rgb(178,180,182)"/><polygon points="1210.6,804.2 1198.4,803.9 1191.8,813.6" fill="rgb(192,193,194)"/><polygon points="1210.6,804.2 1191.8,813.6 1203.4,813.9" fill="rgb(183,184,185)"/><polygon points="1198.4,803.9 1186.0,803.7 1180.2,813.6" fill="rgb(195,195,195)"/><polygon points="1198.4,803.9 1180.2,813.6 1191.8,813.6" fill="rgb(186,186,186)"/><polygon points="1186.0,803.7 1173.6,803.9 1168.6,813.9" fill="rgb(195,195,195)"/><polygon points="1186.0,803.7 1168.6,813.9 1180.2,813.6" fill="rgb(186,186,186)"/><polygon points="1173.6,803.9 1161.4,804.2 1157.2,814.4" fill="rgb(194,193,192)"/><polygon points="1173.6,803.9 1157.2,814.4 1168.6,813.9" fill="rgb(185,184,183)"/><polygon points="1161.4,804.2 1149.5,804.8 1146.2,815.1" fill="rgb(191,189,187)"/><polygon points="1161.4,804.2 1146.2,815.1 1157.2,814.4" fill="rgb(182,180,178)"/><polygon points="1149.5,804.8 1138.1,805.6 1135.7,816.0" fill="rgb(186,184,181)"/><polygon points="1149.5,804.8 1135.7,816.0 1146.2,815.1" fill="rgb(177,175,172)"/><polygon points="1138.1,805.6 1127.2,806.6 1125.8,817.1" fill="rgb(179,177,173)"/><polygon points="1138.1,805.6 1125.8,817.1 1135.7,816.0" fill="rgb(170,168,164)"/><polygon points="1127.2,806.6 1117.1,807.8 1116.7,818.5" fill="rgb(171,169,165)"/><polygon points="1127.2,806.6 1116.7,818.5 1125.8,817.1" fill="rgb(162,160,156)"/><polygon points="1117.1,807.8 1107.9,809.1 1108.4,820.0" fill="rgb(163,159,155)"/><polygon points="1117.1,807.8 1108.4,820.0 1116.7,818.5" fill="rgb(154,150,146)"/><polygon points="1107.9,809.1 1099.6,810.7 1101.1,821.7" fill="rgb(153,150,144)"/><polygon points="1107.9,809.1 1101.1,821.7 1108.4,820.0" fill="rgb(144,141,135)"/><polygon points="1099.6,810.7 1092.4,812.4 1094.9,823.5" fill="rgb(144,140,134)"/><polygon points="1099.6,810.7 1094.9,823.5 1101.1,821.7" fill="rgb(135,131,125)"/><polygon points="1092.4,812.4 1086.4,814.2 1089.9,825.4" fill="rgb(135,130,124)"/><polygon points="1092.4,812.4 1089.9,825.4 1094.9,823.5" fill="rgb(126,121,115)"/><polygon points="1086.4,814.2 1081.7,816.1 1086.0,827.4" fill="rgb(126,122,115)"/><polygon points="1086.4,814.2 1086.0,827.4 1089.9,825.4" fill="rgb(117,113,106)"/><polygon points="1081.7,816.1 1078.3,818.1 1083.4,829.5" fill="rgb(119,114,107)"/><polygon points="1081.7,816.1 1083.4,829.5 1086.0,827.4" fill="rgb(110,105,98)"/><polygon points="1078.3,818.1 1076.2,820.1 1082.1,831.6" fill="rgb(113,108,101)"/><polygon points="1078.3,818.1 1082.1,831.6 1083.4,829.5" fill="rgb(104,99,92)"/><polygon points="1076.2,820.1 1075.5,822.1 1082.0,832.7" fill="rgb(109,104,97)"/><polygon points="1076.2,820.1 1082.0,832.7 1082.1,831.6" fill="rgb(100,95,88)"/><polygon points="1075.5,822.1 1075.5,822.1 1082.0,832.7" fill="rgb(108,103,97)"/><polygon points="1075.5,822.1 1082.0,832.7 1082.0,832.7" fill="rgb(99,94,88)"/><polygon points="1075.5,822.1 1075.5,822.1 1082.0,832.7" fill="rgb(108,103,97)"/><polygon points="1075.5,822.1 1082.0,832.7 1082.0,832.7" fill="rgb(99,94,88)"/><polygon points="1075.5,822.1 1075.5,822.1 1082.0,832.7" fill="rgb(108,103,97)"/><polygon points="1075.5,822.1 1082.0,832.7 1082.0,832.7" fill="rgb(99,94,88)"/><polygon points="1290.0,832.7 1290.0,832.7 1285.1,843.3" fill="rgb(99,102,106)"/><polygon points="1290.0,832.7 1285.1,843.3 1285.1,843.3" fill="rgb(90,93,97)"/><polygon points="1290.0,832.7 1290.0,832.7 1285.1,843.3" fill="rgb(99,102,106)"/><polygon points="1290.0,832.7 1285.1,843.3 1285.1,843.3" fill="rgb(90,93,97)"/><polygon points="1290.0,832.7 1290.0,832.7 1285.1,843.3" fill="rgb(98,102,107)"/><polygon points="1290.0,832.7 1285.1,843.3 1285.1,843.3" fill="rgb(89,93,98)"/><polygon points="1290.0,832.7 1290.0,832.7 1285.1,843.3" fill="rgb(98,102,107)"/><polygon points="1290.0,832.7 1285.1,843.3 1285.1,843.3" fill="rgb(89,93,98)"/><polygon points="1290.0,832.7 1290.0,832.7 1285.1,843.3" fill="rgb(97,102,108)"/><polygon points="1290.0,832.7 1285.1,843.3 1285.1,843.3" fill="rgb(88,93,99)"/><polygon points="1290.0,832.7 1290.0,832.7 1285.1,843.3" fill="rgb(97,102,108)"/><polygon points="1290.0,832.7 1285.1,843.3 1285.1,843.3" fill="rgb(88,93,99)"/><polygon points="1290.0,832.7 1290.0,832.7 1285.1,843.3" fill="rgb(97,102,108)"/><polygon points="1290.0,832.7 1285.1,843.3 1285.1,843.3" fill="rgb(88,93,99)"/><polygon points="1290.0,832.7 1290.0,832.7 1285.1,843.3" fill="rgb(97,102,108)"/><polygon points="1290.0,832.7 1285.1,843.3 1285.1,843.3" fill="rgb(88,93,99)"/><polygon points="1290.0,832.7 1290.0,832.7 1285.1,843.3" fill="rgb(97,102,108)"/><polygon points="1290.0,832.7 1285.1,843.3 1285.1,843.3" fill="rgb(88,93,99)"/><polygon points="1290.0,832.7 1289.9,831.6 1284.5,841.1" fill="rgb(97,102,109)"/><polygon points="1290.0,832.7 1284.5,841.1 1285.1,843.3" fill="rgb(88,93,100)"/><polygon points="1289.9,831.6 1288.6,829.5 1282.6,838.9" fill="rgb(99,104,111)"/><polygon points="1289.9,831.6 1282.6,838.9 1284.5,841.1" fill="rgb(90,95,102)"/><polygon points="1288.6,829.5 1286.0,827.4 1279.6,836.8" fill="rgb(104,109,116)"/><polygon points="1288.6,829.5 1279.6,836.8 1282.6,838.9" fill="rgb(95,100,107)"/><polygon points="1286.0,827.4 1282.1,825.4 1275.3,834.7" fill="rgb(112,117,123)"/><polygon points="1286.0,827.4 1275.3,834.7 1279.6,836.8" fill="rgb(103,108,114)"/><polygon points="1282.1,825.4 1277.1,823.5 1269.9,832.8" fill="rgb(121,125,132)"/><polygon points="1282.1,825.4 1269.9,832.8 1275.3,834.7" fill="rgb(112,116,123)"/><polygon points="1277.1,823.5 1270.9,821.7 1263.5,830.9" fill="rgb(131,135,141)"/><polygon points="1277.1,823.5 1263.5,830.9 1269.9,832.8" fill="rgb(122,126,132)"/><polygon points="1270.9,821.7 1263.6,820.0 1256.1,829.3" fill="rgb(142,146,151)"/><polygon points="1270.9,821.7 1256.1,829.3 1263.5,830.9" fill="rgb(133,137,142)"/><polygon points="1263.6,820.0 1255.3,818.5 1247.8,827.8" fill="rgb(153,156,161)"/><polygon points="1263.6,820.0 1247.8,827.8 1256.1,829.3" fill="rgb(144,147,152)"/><polygon points="1255.3,818.5 1246.2,817.1 1238.7,826.5" fill="rgb(164,167,171)"/><polygon points="1255.3,818.5 1238.7,826.5 1247.8,827.8" fill="rgb(155,158,162)"/><polygon points="1246.2,817.1 1236.3,816.0 1229.0,825.5" fill="rgb(174,176,180)"/><polygon points="1246.2,817.1 1229.0,825.5 1238.7,826.5" fill="rgb(165,167,171)"/><polygon points="1236.3,816.0 1225.8,815.1 1218.7,824.6" fill="rgb(182,185,188)"/><polygon points="1236.3,816.0 1218.7,824.6 1229.0,825.5" fill="rgb(173,176,179)"/><polygon points="1225.8,815.1 1214.8,814.4 1208.1,824.0" fill="rgb(190,191,194)"/><polygon points="1225.8,815.1 1208.1,824.0 1218.7,824.6" fill="rgb(181,182,185)"/><polygon points="1214.8,814.4 1203.4,813.9 1197.1,823.6" fill="rgb(196,197,198)"/><polygon points="1214.8,814.4 1197.1,823.6 1208.1,824.0" fill="rgb(187,188,189)"/><polygon points="1203.4,813.9 1191.8,813.6 1186.0,823.5" fill="rgb(199,200,201)"/><polygon points="1203.4,813.9 1186.0,823.5 1197.1,823.6" fill="rgb(190,191,192)"/><polygon points="1191.8,813.6 1180.2,813.6 1174.9,823.6" fill="rgb(201,201,201)"/><polygon points="1191.8,813.6 1174.9,823.6 1186.0,823.5" fill="rgb(192,192,192)"/><polygon points="1180.2,813.6 1168.6,813.9 1163.9,824.0" fill="rgb(201,200,199)"/><polygon points="1180.2,813.6 1163.9,824.0 1174.9,823.6" fill="rgb(192,191,190)"/><polygon points="1168.6,813.9 1157.2,814.4 1153.3,824.6" fill="rgb(198,197,196)"/><polygon points="1168.6,813.9 1153.3,824.6 1163.9,824.0" fill="rgb(189,188,187)"/><polygon points="1157.2,814.4 1146.2,815.1 1143.0,825.5" fill="rgb(194,192,190)"/><polygon points="1157.2,814.4 1143.0,825.5 1153.3,824.6" fill="rgb(185,183,181)"/><polygon points="1146.2,815.1 1135.7,816.0 1133.3,826.5" fill="rgb(188,185,182)"/><polygon points="1146.2,815.1 1133.3,826.5 1143.0,825.5" fill="rgb(179,176,173)"/><polygon points="1135.7,816.0 1125.8,817.1 1124.2,827.8" fill="rgb(180,177,174)"/><polygon points="1135.7,816.0 1124.2,827.8 1133.3,826.5" fill="rgb(171,168,165)"/><polygon points="1125.8,817.1 1116.7,818.5 1115.9,829.3" fill="rgb(171,168,164)"/><polygon points="1125.8,817.1 1115.9,829.3 1124.2,827.8" fill="rgb(162,159,155)"/><polygon points="1116.7,818.5 1108.4,820.0 1108.5,830.9" fill="rgb(161,158,153)"/><polygon points="1116.7,818.5 1108.5,830.9 1115.9,829.3" fill="rgb(152,149,144)"/><polygon points="1108.4,820.0 1101.1,821.7 1102.1,832.8" fill="rgb(151,147,142)"/><polygon points="1108.4,820.0 1102.1,832.8 1108.5,830.9" fill="rgb(142,138,133)"/><polygon points="1101.1,821.7 1094.9,823.5 1096.7,834.7" fill="rgb(141,137,131)"/><polygon points="1101.1,821.7 1096.7,834.7 1102.1,832.8" fill="rgb(132,128,122)"/><polygon points="1094.9,823.5 1089.9,825.4 1092.4,836.8" fill="rgb(132,127,121)"/><polygon points="1094.9,823.5 1092.4,836.8 1096.7,834.7" fill="rgb(123,118,112)"/><polygon points="1089.9,825.4 1086.0,827.4 1089.4,838.9" fill="rgb(123,118,112)"/><polygon points="1089.9,825.4 1089.4,838.9 1092.4,836.8" fill="rgb(114,109,103)"/><polygon points="1086.0,827.4 1083.4,829.5 1087.5,841.1" fill="rgb(116,111,104)"/><polygon points="1086.0,827.4 1087.5,841.1 1089.4,838.9" fill="rgb(107,102,95)"/><polygon points="1083.4,829.5 1082.1,831.6 1086.9,843.3" fill="rgb(111,106,99)"/><polygon points="1083.4,829.5 1086.9,843.3 1087.5,841.1" fill="rgb(102,97,90)"/><polygon points="1082.1,831.6 1082.0,832.7 1086.9,843.3" fill="rgb(109,104,97)"/><polygon points="1082.1,831.6 1086.9,843.3 1086.9,843.3" fill="rgb(100,95,88)"/><polygon points="1082.0,832.7 1082.0,832.7 1086.9,843.3" fill="rgb(108,103,97)"/><polygon points="1082.0,832.7 1086.9,843.3 1086.9,843.3" fill="rgb(99,94,88)"/><polygon points="1082.0,832.7 1082.0,832.7 1086.9,843.3" fill="rgb(108,103,97)"/><polygon points="1082.0,832.7 1086.9,843.3 1086.9,843.3" fill="rgb(99,94,88)"/><polygon points="1082.0,832.7 1082.0,832.7 1086.9,843.3" fill="rgb(108,103,97)"/><polygon points="1082.0,832.7 1086.9,843.3 1086.9,843.3" fill="rgb(99,94,88)"/><polygon points="1285.1,843.3 1285.1,843.3 1281.7,853.9" fill="rgb(99,102,106)"/><polygon points="1285.1,843.3 1281.7,853.9 1281.7,853.9" fill="rgb(90,93,97)"/><polygon points="1285.1,843.3 1285.1,843.3 1281.7,853.9" fill="rgb(99,102,106)"/><polygon points="1285.1,843.3 1281.7,853.9 1281.7,853.9" fill="rgb(90,93,97)"/><polygon points="1285.1,843.3 1285.1,843.3 1281.7,853.9" fill="rgb(98,102,107)"/><polygon points="1285.1,843.3 1281.7,853.9 1281.7,853.9" fill="rgb(89,93,98)"/><polygon points="1285.1,843.3 1285.1,843.3 1281.7,853.9" fill="rgb(98,102,107)"/><polygon points="1285.1,843.3 1281.7,853.9 1281.7,853.9" fill="rgb(89,93,98)"/><polygon points="1285.1,843.3 1285.1,843.3 1281.7,853.9" fill="rgb(97,102,108)"/><polygon points="1285.1,843.3 1281.7,853.9 1281.7,853.9" fill="rgb(88,93,99)"/><polygon points="1285.1,843.3 1285.1,843.3 1281.7,853.9" fill="rgb(97,102,108)"/><polygon points="1285.1,843.3 1281.7,853.9 1281.7,853.9" fill="rgb(88,93,99)"/><polygon points="1285.1,843.3 1285.1,843.3 1281.7,853.9" fill="rgb(97,102,108)"/><polygon points="1285.1,843.3 1281.7,853.9 1281.7,853.9" fill="rgb(88,93,99)"/><polygon points="1285.1,843.3 1285.1,843.3 1281.7,853.9" fill="rgb(97,102,108)"/><polygon points="1285.1,843.3 1281.7,853.9 1281.7,853.9" fill="rgb(88,93,99)"/><polygon points="1285.1,843.3 1285.1,843.3 1281.6,852.7" fill="rgb(97,102,108)"/><polygon points="1285.1,843.3 1281.6,852.7 1281.7,853.9" fill="rgb(88,93,99)"/><polygon points="1285.1,843.3 1284.5,841.1 1280.4,850.4" fill="rgb(97,102,109)"/><polygon points="1285.1,843.3 1280.4,850.4 1281.6,852.7" fill="rgb(88,93,100)"/><polygon points="1284.5,841.1 1282.6,838.9 1278.0,848.2" fill="rgb(102,107,114)"/><polygon points="1284.5,841.1 1278.0,848.2 1280.4,850.4" fill="rgb(93,98,105)"/><polygon points="1282.6,838.9 1279.6,836.8 1274.5,846.0" fill="rgb(109,114,120)"/><polygon points="1282.6,838.9 1274.5,846.0 1278.0,848.2" fill="rgb(100,105,111)"/><polygon points="1279.6,836.8 1275.3,834.7 1269.8,843.9" fill="rgb(118,123,129)"/><polygon points="1279.6,836.8 1269.8,843.9 1274.5,846.0" fill="rgb(109,114,120)"/><polygon points="1275.3,834.7 1269.9,832.8 1264.1,842.0" fill="rgb(128,133,139)"/><polygon points="1275.3,834.7 1264.1,842.0 1269.8,843.9" fill="rgb(119,124,130)"/><polygon points="1269.9,832.8 1263.5,830.9 1257.4,840.2" fill="rgb(140,144,150)"/><polygon points="1269.9,832.8 1257.4,840.2 1264.1,842.0" fill="rgb(131,135,141)"/><polygon points="1263.5,830.9 1256.1,829.3 1249.8,838.6" fill="rgb(152,156,161)"/><polygon points="1263.5,830.9 1249.8,838.6 1257.4,840.2" fill="rgb(143,147,152)"/><polygon points="1256.1,829.3 1247.8,827.8 1241.4,837.1" fill="rgb(164,167,172)"/><polygon points="1256.1,829.3 1241.4,837.1 1249.8,838.6" fill="rgb(155,158,163)"/><polygon points="1247.8,827.8 1238.7,826.5 1232.3,835.9" fill="rgb(175,178,182)"/><polygon points="1247.8,827.8 1232.3,835.9 1241.4,837.1" fill="rgb(166,169,173)"/><polygon points="1238.7,826.5 1229.0,825.5 1222.6,834.9" fill="rgb(185,187,191)"/><polygon points="1238.7,826.5 1222.6,834.9 1232.3,835.9" fill="rgb(176,178,182)"/><polygon points="1229.0,825.5 1218.7,824.6 1212.5,834.2" fill="rgb(194,196,199)"/><polygon points="1229.0,825.5 1212.5,834.2 1222.6,834.9" fill="rgb(185,187,190)"/><polygon points="1218.7,824.6 1208.1,824.0 1202.0,833.7" fill="rgb(201,202,204)"/><polygon points="1218.7,824.6 1202.0,833.7 1212.5,834.2" fill="rgb(192,193,195)"/><polygon points="1208.1,824.0 1197.1,823.6 1191.4,833.4" fill="rgb(206,207,208)"/><polygon points="1208.1,824.0 1191.4,833.4 1202.0,833.7" fill="rgb(197,198,199)"/><polygon points="1197.1,823.6 1186.0,823.5 1180.6,833.4" fill="rgb(209,209,210)"/><polygon points="1197.1,823.6 1180.6,833.4 1191.4,833.4" fill="rgb(200,200,201)"/><polygon points="1186.0,823.5 1174.9,823.6 1170.0,833.7" fill="rgb(210,209,209)"/><polygon points="1186.0,823.5 1170.0,833.7 1180.6,833.4" fill="rgb(201,200,200)"/><polygon points="1174.9,823.6 1163.9,824.0 1159.5,834.2" fill="rgb(208,207,206)"/><polygon points="1174.9,823.6 1159.5,834.2 1170.0,833.7" fill="rgb(199,198,197)"/><polygon points="1163.9,824.0 1153.3,824.6 1149.4,834.9" fill="rgb(204,203,201)"/><polygon points="1163.9,824.0 1149.4,834.9 1159.5,834.2" fill="rgb(195,194,192)"/><polygon points="1153.3,824.6 1143.0,825.5 1139.7,835.9" fill="rgb(199,197,194)"/><polygon points="1153.3,824.6 1139.7,835.9 1149.4,834.9" fill="rgb(190,188,185)"/><polygon points="1143.0,825.5 1133.3,826.5 1130.6,837.1" fill="rgb(191,188,185)"/><polygon points="1143.0,825.5 1130.6,837.1 1139.7,835.9" fill="rgb(182,179,176)"/><polygon points="1133.3,826.5 1124.2,827.8 1122.2,838.6" fill="rgb(182,179,175)"/><polygon points="1133.3,826.5 1122.2,838.6 1130.6,837.1" fill="rgb(173,170,166)"/><polygon points="1124.2,827.8 1115.9,829.3 1114.6,840.2" fill="rgb(172,168,164)"/><polygon points="1124.2,827.8 1114.6,840.2 1122.2,838.6" fill="rgb(163,159,155)"/><polygon points="1115.9,829.3 1108.5,830.9 1107.9,842.0" fill="rgb(161,157,152)"/><polygon points="1115.9,829.3 1107.9,842.0 1114.6,840.2" fill="rgb(152,148,143)"/><polygon points="1108.5,830.9 1102.1,832.8 1102.2,843.9" fill="rgb(150,146,140)"/><polygon points="1108.5,830.9 1102.2,843.9 1107.9,842.0" fill="rgb(141,137,131)"/><polygon points="1102.1,832.8 1096.7,834.7 1097.5,846.0" fill="rgb(139,135,128)"/><polygon points="1102.1,832.8 1097.5,846.0 1102.2,843.9" fill="rgb(130,126,119)"/><polygon points="1096.7,834.7 1092.4,836.8 1094.0,848.2" fill="rgb(129,124,118)"/><polygon points="1096.7,834.7 1094.0,848.2 1097.5,846.0" fill="rgb(120,115,109)"/><polygon points="1092.4,836.8 1089.4,838.9 1091.6,850.4" fill="rgb(120,116,109)"/><polygon points="1092.4,836.8 1091.6,850.4 1094.0,848.2" fill="rgb(111,107,100)"/><polygon points="1089.4,838.9 1087.5,841.1 1090.4,852.7" fill="rgb(114,109,102)"/><polygon points="1089.4,838.9 1090.4,852.7 1091.6,850.4" fill="rgb(105,100,93)"/><polygon points="1087.5,841.1 1086.9,843.3 1090.3,853.9" fill="rgb(109,104,97)"/><polygon points="1087.5,841.1 1090.3,853.9 1090.4,852.7" fill="rgb(100,95,88)"/><polygon points="1086.9,843.3 1086.9,843.3 1090.3,853.9" fill="rgb(108,103,97)"/><polygon points="1086.9,843.3 1090.3,853.9 1090.3,853.9" fill="rgb(99,94,88)"/><polygon points="1086.9,843.3 1086.9,843.3 1090.3,853.9" fill="rgb(108,103,97)"/><polygon points="1086.9,843.3 1090.3,853.9 1090.3,853.9" fill="rgb(99,94,88)"/><polygon points="1086.9,843.3 1086.9,843.3 1090.3,853.9" fill="rgb(108,103,97)"/><polygon points="1086.9,843.3 1090.3,853.9 1090.3,853.9" fill="rgb(99,94,88)"/><polygon points="1086.9,843.3 1086.9,843.3 1090.3,853.9" fill="rgb(108,103,97)"/><polygon points="1086.9,843.3 1090.3,853.9 1090.3,853.9" fill="rgb(99,94,88)"/><polygon points="1281.7,853.9 1281.7,853.9 1279.9,864.4" fill="rgb(99,102,106)"/><polygon points="1281.7,853.9 1279.9,864.4 1279.9,864.4" fill="rgb(90,93,97)"/><polygon points="1281.7,853.9 1281.7,853.9 1279.9,864.4" fill="rgb(98,102,107)"/><polygon points="1281.7,853.9 1279.9,864.4 1279.9,864.4" fill="rgb(89,93,98)"/><polygon points="1281.7,853.9 1281.7,853.9 1279.9,864.4" fill="rgb(98,102,107)"/><polygon points="1281.7,853.9 1279.9,864.4 1279.9,864.4" fill="rgb(89,93,98)"/><polygon points="1281.7,853.9 1281.7,853.9 1279.9,864.4" fill="rgb(97,102,108)"/><polygon points="1281.7,853.9 1279.9,864.4 1279.9,864.4" fill="rgb(88,93,99)"/><polygon points="1281.7,853.9 1281.7,853.9 1279.9,864.4" fill="rgb(97,102,108)"/><polygon points="1281.7,853.9 1279.9,864.4 1279.9,864.4" fill="rgb(88,93,99)"/><polygon points="1281.7,853.9 1281.7,853.9 1279.9,864.4" fill="rgb(97,102,108)"/><polygon points="1281.7,853.9 1279.9,864.4 1279.9,864.4" fill="rgb(88,93,99)"/><polygon points="1281.7,853.9 1281.7,853.9 1279.9,864.4" fill="rgb(97,102,108)"/><polygon points="1281.7,853.9 1279.9,864.4 1279.9,864.4" fill="rgb(88,93,99)"/><polygon points="1281.7,853.9 1281.7,853.9 1279.9,864.4" fill="rgb(97,102,108)"/><polygon points="1281.7,853.9 1279.9,864.4 1279.9,864.4" fill="rgb(88,93,99)"/><polygon points="1281.7,853.9 1281.6,852.7 1279.3,862.1" fill="rgb(97,102,109)"/><polygon points="1281.7,853.9 1279.3,862.1 1279.9,864.4" fill="rgb(88,93,100)"/><polygon points="1281.6,852.7 1280.4,850.4 1277.5,859.7" fill="rgb(99,104,111)"/><polygon points="1281.6,852.7 1277.5,859.7 1279.3,862.1" fill="rgb(90,95,102)"/><polygon points="1280.4,850.4 1278.0,848.2 1274.6,857.4" fill="rgb(106,111,117)"/><polygon points="1280.4,850.4 1274.6,857.4 1277.5,859.7" fill="rgb(97,102,108)"/><polygon points="1278.0,848.2 1274.5,846.0 1270.6,855.2" fill="rgb(115,119,126)"/><polygon points="1278.0,848.2 1270.6,855.2 1274.6,857.4" fill="rgb(106,110,117)"/><polygon points="1274.5,846.0 1269.8,843.9 1265.5,853.2" fill="rgb(125,130,136)"/><polygon points="1274.5,846.0 1265.5,853.2 1270.6,855.2" fill="rgb(116,121,127)"/><polygon points="1269.8,843.9 1264.1,842.0 1259.4,851.2" fill="rgb(137,141,147)"/><polygon points="1269.8,843.9 1259.4,851.2 1265.5,853.2" fill="rgb(128,132,138)"/><polygon points="1264.1,842.0 1257.4,840.2 1252.4,849.4" fill="rgb(150,154,159)"/><polygon points="1264.1,842.0 1252.4,849.4 1259.4,851.2" fill="rgb(141,145,150)"/><polygon points="1257.4,840.2 1249.8,838.6 1244.5,847.9" fill="rgb(163,166,171)"/><polygon points="1257.4,840.2 1244.5,847.9 1252.4,849.4" fill="rgb(154,157,162)"/><polygon points="1249.8,838.6 1241.4,837.1 1236.0,846.5" fill="rgb(175,178,183)"/><polygon points="1249.8,838.6 1236.0,846.5 1244.5,847.9" fill="rgb(166,169,174)"/><polygon points="1241.4,837.1 1232.3,835.9 1226.7,845.3" fill="rgb(187,190,193)"/><polygon points="1241.4,837.1 1226.7,845.3 1236.0,846.5" fill="rgb(178,181,184)"/><polygon points="1232.3,835.9 1222.6,834.9 1217.0,844.4" fill="rgb(197,199,202)"/><polygon points="1232.3,835.9 1217.0,844.4 1226.7,845.3" fill="rgb(188,190,193)"/><polygon points="1222.6,834.9 1212.5,834.2 1206.9,843.8" fill="rgb(206,208,210)"/><polygon points="1222.6,834.9 1206.9,843.8 1217.0,844.4" fill="rgb(197,199,201)"/><polygon points="1212.5,834.2 1202.0,833.7 1196.5,843.4" fill="rgb(213,214,215)"/><polygon points="1212.5,834.2 1196.5,843.4 1206.9,843.8" fill="rgb(204,205,206)"/><polygon points="1202.0,833.7 1191.4,833.4 1186.0,843.2" fill="rgb(217,217,218)"/><polygon points="1202.0,833.7 1186.0,843.2 1196.5,843.4" fill="rgb(208,208,209)"/><polygon points="1191.4,833.4 1180.6,833.4 1175.5,843.4" fill="rgb(219,219,219)"/><polygon points="1191.4,833.4 1175.5,843.4 1186.0,843.2" fill="rgb(210,210,210)"/><polygon points="1180.6,833.4 1170.0,833.7 1165.1,843.8" fill="rgb(218,218,217)"/><polygon points="1180.6,833.4 1165.1,843.8 1175.5,843.4" fill="rgb(209,209,208)"/><polygon points="1170.0,833.7 1159.5,834.2 1155.0,844.4" fill="rgb(215,214,213)"/><polygon points="1170.0,833.7 1155.0,844.4 1165.1,843.8" fill="rgb(206,205,204)"/><polygon points="1159.5,834.2 1149.4,834.9 1145.3,845.3" fill="rgb(210,208,206)"/><polygon points="1159.5,834.2 1145.3,845.3 1155.0,844.4" fill="rgb(201,199,197)"/><polygon points="1149.4,834.9 1139.7,835.9 1136.0,846.5" fill="rgb(202,200,197)"/><polygon points="1149.4,834.9 1136.0,846.5 1145.3,845.3" fill="rgb(193,191,188)"/><polygon points="1139.7,835.9 1130.6,837.1 1127.5,847.9" fill="rgb(193,191,187)"/><polygon points="1139.7,835.9 1127.5,847.9 1136.0,846.5" fill="rgb(184,182,178)"/><polygon points="1130.6,837.1 1122.2,838.6 1119.6,849.4" fill="rgb(183,180,175)"/><polygon points="1130.6,837.1 1119.6,849.4 1127.5,847.9" fill="rgb(174,171,166)"/><polygon points="1122.2,838.6 1114.6,840.2 1112.6,851.2" fill="rgb(171,168,163)"/><polygon points="1122.2,838.6 1112.6,851.2 1119.6,849.4" fill="rgb(162,159,154)"/><polygon points="1114.6,840.2 1107.9,842.0 1106.5,853.2" fill="rgb(159,155,150)"/><polygon points="1114.6,840.2 1106.5,853.2 1112.6,851.2" fill="rgb(150,146,141)"/><polygon points="1107.9,842.0 1102.2,843.9 1101.4,855.2" fill="rgb(147,143,137)"/><polygon points="1107.9,842.0 1101.4,855.2 1106.5,853.2" fill="rgb(138,134,128)"/><polygon points="1102.2,843.9 1097.5,846.0 1097.4,857.4" fill="rgb(136,132,125)"/><polygon points="1102.2,843.9 1097.4,857.4 1101.4,855.2" fill="rgb(127,123,116)"/><polygon points="1097.5,846.0 1094.0,848.2 1094.5,859.7" fill="rgb(126,121,115)"/><polygon points="1097.5,846.0 1094.5,859.7 1097.4,857.4" fill="rgb(117,112,106)"/><polygon points="1094.0,848.2 1091.6,850.4 1092.7,862.1" fill="rgb(117,113,106)"/><polygon points="1094.0,848.2 1092.7,862.1 1094.5,859.7" fill="rgb(108,104,97)"/><polygon points="1091.6,850.4 1090.4,852.7 1092.1,864.4" fill="rgb(111,106,99)"/><polygon points="1091.6,850.4 1092.1,864.4 1092.7,862.1" fill="rgb(102,97,90)"/><polygon points="1090.4,852.7 1090.3,853.9 1092.1,864.4" fill="rgb(109,104,97)"/><polygon points="1090.4,852.7 1092.1,864.4 1092.1,864.4" fill="rgb(100,95,88)"/><polygon points="1090.3,853.9 1090.3,853.9 1092.1,864.4" fill="rgb(108,103,97)"/><polygon points="1090.3,853.9 1092.1,864.4 1092.1,864.4" fill="rgb(99,94,88)"/><polygon points="1090.3,853.9 1090.3,853.9 1092.1,864.4" fill="rgb(108,103,97)"/><polygon points="1090.3,853.9 1092.1,864.4 1092.1,864.4" fill="rgb(99,94,88)"/><polygon points="1090.3,853.9 1090.3,853.9 1092.1,864.4" fill="rgb(108,103,97)"/><polygon points="1090.3,853.9 1092.1,864.4 1092.1,864.4" fill="rgb(99,94,88)"/><polygon points="1090.3,853.9 1090.3,853.9 1092.1,864.4" fill="rgb(108,103,97)"/><polygon points="1090.3,853.9 1092.1,864.4 1092.1,864.4" fill="rgb(99,94,88)"/><polygon points="1279.9,864.4 1279.9,864.4 1279.5,875.0" fill="rgb(99,102,106)"/><polygon points="1279.9,864.4 1279.5,875.0 1279.5,875.0" fill="rgb(90,93,97)"/><polygon points="1279.9,864.4 1279.9,864.4 1279.5,875.0" fill="rgb(98,102,107)"/><polygon points="1279.9,864.4 1279.5,875.0 1279.5,875.0" fill="rgb(89,93,98)"/><polygon points="1279.9,864.4 1279.9,864.4 1279.5,875.0" fill="rgb(98,102,107)"/><polygon points="1279.9,864.4 1279.5,875.0 1279.5,875.0" fill="rgb(89,93,98)"/><polygon points="1279.9,864.4 1279.9,864.4 1279.5,875.0" fill="rgb(97,102,108)"/><polygon points="1279.9,864.4 1279.5,875.0 1279.5,875.0" fill="rgb(88,93,99)"/><polygon points="1279.9,864.4 1279.9,864.4 1279.5,875.0" fill="rgb(97,102,108)"/><polygon points="1279.9,864.4 1279.5,875.0 1279.5,875.0" fill="rgb(88,93,99)"/><polygon points="1279.9,864.4 1279.9,864.4 1279.5,875.0" fill="rgb(97,102,108)"/><polygon points="1279.9,864.4 1279.5,875.0 1279.5,875.0" fill="rgb(88,93,99)"/><polygon points="1279.9,864.4 1279.9,864.4 1279.5,875.0" fill="rgb(97,102,108)"/><polygon points="1279.9,864.4 1279.5,875.0 1279.5,875.0" fill="rgb(88,93,99)"/><polygon points="1279.9,864.4 1279.9,864.4 1279.4,873.8" fill="rgb(97,102,108)"/><polygon points="1279.9,864.4 1279.4,873.8 1279.5,875.0" fill="rgb(88,93,99)"/><polygon points="1279.9,864.4 1279.3,862.1 1278.2,871.3" fill="rgb(97,102,109)"/><polygon points="1279.9,864.4 1278.2,871.3 1279.4,873.8" fill="rgb(88,93,100)"/><polygon points="1279.3,862.1 1277.5,859.7 1275.9,868.9" fill="rgb(102,107,114)"/><polygon points="1279.3,862.1 1275.9,868.9 1278.2,871.3" fill="rgb(93,98,105)"/><polygon points="1277.5,859.7 1274.6,857.4 1272.4,866.6" fill="rgb(110,115,122)"/><polygon points="1277.5,859.7 1272.4,866.6 1275.9,868.9" fill="rgb(101,106,113)"/><polygon points="1274.6,857.4 1270.6,855.2 1267.9,864.4" fill="rgb(121,125,132)"/><polygon points="1274.6,857.4 1267.9,864.4 1272.4,866.6" fill="rgb(112,116,123)"/><polygon points="1270.6,855.2 1265.5,853.2 1262.3,862.3" fill="rgb(133,137,143)"/><polygon points="1270.6,855.2 1262.3,862.3 1267.9,864.4" fill="rgb(124,128,134)"/><polygon points="1265.5,853.2 1259.4,851.2 1255.8,860.4" fill="rgb(146,150,155)"/><polygon points="1265.5,853.2 1255.8,860.4 1262.3,862.3" fill="rgb(137,141,146)"/><polygon points="1259.4,851.2 1252.4,849.4 1248.3,858.7" fill="rgb(159,163,168)"/><polygon points="1259.4,851.2 1248.3,858.7 1255.8,860.4" fill="rgb(150,154,159)"/><polygon points="1252.4,849.4 1244.5,847.9 1240.1,857.1" fill="rgb(172,176,180)"/><polygon points="1252.4,849.4 1240.1,857.1 1248.3,858.7" fill="rgb(163,167,171)"/><polygon points="1244.5,847.9 1236.0,846.5 1231.3,855.8" fill="rgb(185,188,192)"/><polygon points="1244.5,847.9 1231.3,855.8 1240.1,857.1" fill="rgb(176,179,183)"/><polygon points="1236.0,846.5 1226.7,845.3 1221.8,854.8" fill="rgb(197,199,202)"/><polygon points="1236.0,846.5 1221.8,854.8 1231.3,855.8" fill="rgb(188,190,193)"/><polygon points="1226.7,845.3 1217.0,844.4 1211.9,854.0" fill="rgb(207,208,211)"/><polygon points="1226.7,845.3 1211.9,854.0 1221.8,854.8" fill="rgb(198,199,202)"/><polygon points="1217.0,844.4 1206.9,843.8 1201.7,853.4" fill="rgb(215,216,218)"/><polygon points="1217.0,844.4 1201.7,853.4 1211.9,854.0" fill="rgb(206,207,209)"/><polygon points="1206.9,843.8 1196.5,843.4 1191.2,853.1" fill="rgb(220,221,222)"/><polygon points="1206.9,843.8 1191.2,853.1 1201.7,853.4" fill="rgb(211,212,213)"/><polygon points="1196.5,843.4 1186.0,843.2 1180.8,853.1" fill="rgb(223,224,224)"/><polygon points="1196.5,843.4 1180.8,853.1 1191.2,853.1" fill="rgb(214,215,215)"/><polygon points="1186.0,843.2 1175.5,843.4 1170.3,853.4" fill="rgb(224,224,223)"/><polygon points="1186.0,843.2 1170.3,853.4 1180.8,853.1" fill="rgb(215,215,214)"/><polygon points="1175.5,843.4 1165.1,843.8 1160.1,854.0" fill="rgb(222,221,220)"/><polygon points="1175.5,843.4 1160.1,854.0 1170.3,853.4" fill="rgb(213,212,211)"/><polygon points="1165.1,843.8 1155.0,844.4 1150.2,854.8" fill="rgb(218,216,215)"/><polygon points="1165.1,843.8 1150.2,854.8 1160.1,854.0" fill="rgb(209,207,206)"/><polygon points="1155.0,844.4 1145.3,845.3 1140.7,855.8" fill="rgb(211,209,207)"/><polygon points="1155.0,844.4 1140.7,855.8 1150.2,854.8" fill="rgb(202,200,198)"/><polygon points="1145.3,845.3 1136.0,846.5 1131.9,857.1" fill="rgb(202,200,197)"/><polygon points="1145.3,845.3 1131.9,857.1 1140.7,855.8" fill="rgb(193,191,188)"/><polygon points="1136.0,846.5 1127.5,847.9 1123.7,858.7" fill="rgb(192,189,185)"/><polygon points="1136.0,846.5 1123.7,858.7 1131.9,857.1" fill="rgb(183,180,176)"/><polygon points="1127.5,847.9 1119.6,849.4 1116.2,860.4" fill="rgb(180,177,172)"/><polygon points="1127.5,847.9 1116.2,860.4 1123.7,858.7" fill="rgb(171,168,163)"/><polygon points="1119.6,849.4 1112.6,851.2 1109.7,862.3" fill="rgb(168,164,159)"/><polygon points="1119.6,849.4 1109.7,862.3 1116.2,860.4" fill="rgb(159,155,150)"/><polygon points="1112.6,851.2 1106.5,853.2 1104.1,864.4" fill="rgb(155,151,146)"/><polygon points="1112.6,851.2 1104.1,864.4 1109.7,862.3" fill="rgb(146,142,137)"/><polygon points="1106.5,853.2 1101.4,855.2 1099.6,866.6" fill="rgb(143,139,133)"/><polygon points="1106.5,853.2 1099.6,866.6 1104.1,864.4" fill="rgb(134,130,124)"/><polygon points="1101.4,855.2 1097.4,857.4 1096.1,868.9" fill="rgb(132,127,121)"/><polygon points="1101.4,855.2 1096.1,868.9 1099.6,866.6" fill="rgb(123,118,112)"/><polygon points="1097.4,857.4 1094.5,859.7 1093.8,871.3" fill="rgb(122,117,110)"/><polygon points="1097.4,857.4 1093.8,871.3 1096.1,868.9" fill="rgb(113,108,101)"/><polygon points="1094.5,859.7 1092.7,862.1 1092.6,873.8" fill="rgb(114,109,102)"/><polygon points="1094.5,859.7 1092.6,873.8 1093.8,871.3" fill="rgb(105,100,93)"/><polygon points="1092.7,862.1 1092.1,864.4 1092.5,875.0" fill="rgb(109,104,97)"/><polygon points="1092.7,862.1 1092.5,875.0 1092.6,873.8" fill="rgb(100,95,88)"/><polygon points="1092.1,864.4 1092.1,864.4 1092.5,875.0" fill="rgb(108,103,97)"/><polygon points="1092.1,864.4 1092.5,875.0 1092.5,875.0" fill="rgb(99,94,88)"/><polygon points="1092.1,864.4 1092.1,864.4 1092.5,875.0" fill="rgb(108,103,97)"/><polygon points="1092.1,864.4 1092.5,875.0 1092.5,875.0" fill="rgb(99,94,88)"/><polygon points="1092.1,864.4 1092.1,864.4 1092.5,875.0" fill="rgb(108,103,97)"/><polygon points="1092.1,864.4 1092.5,875.0 1092.5,875.0" fill="rgb(99,94,88)"/><polygon points="1092.1,864.4 1092.1,864.4 1092.5,875.0" fill="rgb(108,103,97)"/><polygon points="1092.1,864.4 1092.5,875.0 1092.5,875.0" fill="rgb(99,94,88)"/><polygon points="1092.1,864.4 1092.1,864.4 1092.5,875.0" fill="rgb(108,103,97)"/><polygon points="1092.1,864.4 1092.5,875.0 1092.5,875.0" fill="rgb(99,94,88)"/><polygon points="1279.5,875.0 1279.5,875.0 1280.4,885.6" fill="rgb(98,102,107)"/><polygon points="1279.5,875.0 1280.4,885.6 1280.4,885.6" fill="rgb(89,93,98)"/><polygon points="1279.5,875.0 1279.5,875.0 1280.4,885.6" fill="rgb(98,102,107)"/><polygon points="1279.5,875.0 1280.4,885.6 1280.4,885.6" fill="rgb(89,93,98)"/><polygon points="1279.5,875.0 1279.5,875.0 1280.4,885.6" fill="rgb(97,102,108)"/><polygon points="1279.5,875.0 1280.4,885.6 1280.4,885.6" fill="rgb(88,93,99)"/><polygon points="1279.5,875.0 1279.5,875.0 1280.4,885.6" fill="rgb(97,102,108)"/><polygon points="1279.5,875.0 1280.4,885.6 1280.4,885.6" fill="rgb(88,93,99)"/><polygon points="1279.5,875.0 1279.5,875.0 1280.4,885.6" fill="rgb(97,102,108)"/><polygon points="1279.5,875.0 1280.4,885.6 1280.4,885.6" fill="rgb(88,93,99)"/><polygon points="1279.5,875.0 1279.5,875.0 1280.4,885.6" fill="rgb(97,102,108)"/><polygon points="1279.5,875.0 1280.4,885.6 1280.4,885.6" fill="rgb(88,93,99)"/><polygon points="1279.5,875.0 1279.5,875.0 1280.4,885.6" fill="rgb(97,102,108)"/><polygon points="1279.5,875.0 1280.4,885.6 1280.4,885.6" fill="rgb(88,93,99)"/><polygon points="1279.5,875.0 1279.4,873.8 1279.9,883.1" fill="rgb(97,102,109)"/><polygon points="1279.5,875.0 1279.9,883.1 1280.4,885.6" fill="rgb(88,93,100)"/><polygon points="1279.4,873.8 1278.2,871.3 1278.1,880.6" fill="rgb(99,104,111)"/><polygon points="1279.4,873.8 1278.1,880.6 1279.9,883.1" fill="rgb(90,95,102)"/><polygon points="1278.2,871.3 1275.9,868.9 1275.1,878.1" fill="rgb(106,111,118)"/><polygon points="1278.2,871.3 1275.1,878.1 1278.1,880.6" fill="rgb(97,102,109)"/><polygon points="1275.9,868.9 1272.4,866.6 1271.1,875.8" fill="rgb(115,120,126)"/><polygon points="1275.9,868.9 1271.1,875.8 1275.1,878.1" fill="rgb(106,111,117)"/><polygon points="1272.4,866.6 1267.9,864.4 1266.0,873.6" fill="rgb(126,131,137)"/><polygon points="1272.4,866.6 1266.0,873.6 1271.1,875.8" fill="rgb(117,122,128)"/><polygon points="1267.9,864.4 1262.3,862.3 1259.8,871.5" fill="rgb(139,143,149)"/><polygon points="1267.9,864.4 1259.8,871.5 1266.0,873.6" fill="rgb(130,134,140)"/><polygon points="1262.3,862.3 1255.8,860.4 1252.8,869.6" fill="rgb(152,156,161)"/><polygon points="1262.3,862.3 1252.8,869.6 1259.8,871.5" fill="rgb(143,147,152)"/><polygon points="1255.8,860.4 1248.3,858.7 1244.9,867.9" fill="rgb(165,169,174)"/><polygon points="1255.8,860.4 1244.9,867.9 1252.8,869.6" fill="rgb(156,160,165)"/><polygon points="1248.3,858.7 1240.1,857.1 1236.3,866.4" fill="rgb(178,181,185)"/><polygon points="1248.3,858.7 1236.3,866.4 1244.9,867.9" fill="rgb(169,172,176)"/><polygon points="1240.1,857.1 1231.3,855.8 1227.0,865.2" fill="rgb(190,193,196)"/><polygon points="1240.1,857.1 1227.0,865.2 1236.3,866.4" fill="rgb(181,184,187)"/><polygon points="1231.3,855.8 1221.8,854.8 1217.2,864.3" fill="rgb(201,203,206)"/><polygon points="1231.3,855.8 1217.2,864.3 1227.0,865.2" fill="rgb(192,194,197)"/><polygon points="1221.8,854.8 1211.9,854.0 1207.0,863.5" fill="rgb(210,211,214)"/><polygon points="1221.8,854.8 1207.0,863.5 1217.2,864.3" fill="rgb(201,202,205)"/><polygon points="1211.9,854.0 1201.7,853.4 1196.6,863.1" fill="rgb(216,218,219)"/><polygon points="1211.9,854.0 1196.6,863.1 1207.0,863.5" fill="rgb(207,209,210)"/><polygon points="1201.7,853.4 1191.2,853.1 1186.0,863.0" fill="rgb(221,221,222)"/><polygon points="1201.7,853.4 1186.0,863.0 1196.6,863.1" fill="rgb(212,212,213)"/><polygon points="1191.2,853.1 1180.8,853.1 1175.4,863.1" fill="rgb(223,223,223)"/><polygon points="1191.2,853.1 1175.4,863.1 1186.0,863.0" fill="rgb(214,214,214)"/><polygon points="1180.8,853.1 1170.3,853.4 1165.0,863.5" fill="rgb(222,222,221)"/><polygon points="1180.8,853.1 1165.0,863.5 1175.4,863.1" fill="rgb(213,213,212)"/><polygon points="1170.3,853.4 1160.1,854.0 1154.8,864.3" fill="rgb(219,218,216)"/><polygon points="1170.3,853.4 1154.8,864.3 1165.0,863.5" fill="rgb(210,209,207)"/><polygon points="1160.1,854.0 1150.2,854.8 1145.0,865.2" fill="rgb(214,212,210)"/><polygon points="1160.1,854.0 1145.0,865.2 1154.8,864.3" fill="rgb(205,203,201)"/><polygon points="1150.2,854.8 1140.7,855.8 1135.7,866.4" fill="rgb(206,204,201)"/><polygon points="1150.2,854.8 1135.7,866.4 1145.0,865.2" fill="rgb(197,195,192)"/><polygon points="1140.7,855.8 1131.9,857.1 1127.1,867.9" fill="rgb(196,194,190)"/><polygon points="1140.7,855.8 1127.1,867.9 1135.7,866.4" fill="rgb(187,185,181)"/><polygon points="1131.9,857.1 1123.7,858.7 1119.2,869.6" fill="rgb(185,182,178)"/><polygon points="1131.9,857.1 1119.2,869.6 1127.1,867.9" fill="rgb(176,173,169)"/><polygon points="1123.7,858.7 1116.2,860.4 1112.2,871.5" fill="rgb(174,170,165)"/><polygon points="1123.7,858.7 1112.2,871.5 1119.2,869.6" fill="rgb(165,161,156)"/><polygon points="1116.2,860.4 1109.7,862.3 1106.0,873.6" fill="rgb(161,157,152)"/><polygon points="1116.2,860.4 1106.0,873.6 1112.2,871.5" fill="rgb(152,148,143)"/><polygon points="1109.7,862.3 1104.1,864.4 1100.9,875.8" fill="rgb(149,145,139)"/><polygon points="1109.7,862.3 1100.9,875.8 1106.0,873.6" fill="rgb(140,136,130)"/><polygon points="1104.1,864.4 1099.6,866.6 1096.9,878.1" fill="rgb(137,133,126)"/><polygon points="1104.1,864.4 1096.9,878.1 1100.9,875.8" fill="rgb(128,124,117)"/><polygon points="1099.6,866.6 1096.1,868.9 1093.9,880.6" fill="rgb(126,122,115)"/><polygon points="1099.6,866.6 1093.9,880.6 1096.9,878.1" fill="rgb(117,113,106)"/><polygon points="1096.1,868.9 1093.8,871.3 1092.1,883.1" fill="rgb(118,113,106)"/><polygon points="1096.1,868.9 1092.1,883.1 1093.9,880.6" fill="rgb(109,104,97)"/><polygon points="1093.8,871.3 1092.6,873.8 1091.6,885.6" fill="rgb(111,106,99)"/><polygon points="1093.8,871.3 1091.6,885.6 1092.1,883.1" fill="rgb(102,97,90)"/><polygon points="1092.6,873.8 1092.5,875.0 1091.6,885.6" fill="rgb(109,104,97)"/><polygon points="1092.6,873.8 1091.6,885.6 1091.6,885.6" fill="rgb(100,95,88)"/><polygon points="1092.5,875.0 1092.5,875.0 1091.6,885.6" fill="rgb(108,103,97)"/><polygon points="1092.5,875.0 1091.6,885.6 1091.6,885.6" fill="rgb(99,94,88)"/><polygon points="1092.5,875.0 1092.5,875.0 1091.6,885.6" fill="rgb(108,103,97)"/><polygon points="1092.5,875.0 1091.6,885.6 1091.6,885.6" fill="rgb(99,94,88)"/><polygon points="1092.5,875.0 1092.5,875.0 1091.6,885.6" fill="rgb(108,103,97)"/><polygon points="1092.5,875.0 1091.6,885.6 1091.6,885.6" fill="rgb(99,94,88)"/><polygon points="1092.5,875.0 1092.5,875.0 1091.6,885.6" fill="rgb(108,103,97)"/><polygon points="1092.5,875.0 1091.6,885.6 1091.6,885.6" fill="rgb(99,94,88)"/><polygon points="1092.5,875.0 1092.5,875.0 1091.6,885.6" fill="rgb(108,103,97)"/><polygon points="1092.5,875.0 1091.6,885.6 1091.6,885.6" fill="rgb(99,94,88)"/><polygon points="1280.4,885.6 1280.4,885.6 1282.5,896.2" fill="rgb(98,102,107)"/><polygon points="1280.4,885.6 1282.5,896.2 1282.5,896.2" fill="rgb(89,93,98)"/><polygon points="1280.4,885.6 1280.4,885.6 1282.5,896.2" fill="rgb(98,102,107)"/><polygon points="1280.4,885.6 1282.5,896.2 1282.5,896.2" fill="rgb(89,93,98)"/><polygon points="1280.4,885.6 1280.4,885.6 1282.5,896.2" fill="rgb(97,102,108)"/><polygon points="1280.4,885.6 1282.5,896.2 1282.5,896.2" fill="rgb(88,93,99)"/><polygon points="1280.4,885.6 1280.4,885.6 1282.5,896.2" fill="rgb(97,102,108)"/><polygon points="1280.4,885.6 1282.5,896.2 1282.5,896.2" fill="rgb(88,93,99)"/><polygon points="1280.4,885.6 1280.4,885.6 1282.5,896.2" fill="rgb(97,102,108)"/><polygon points="1280.4,885.6 1282.5,896.2 1282.5,896.2" fill="rgb(88,93,99)"/><polygon points="1280.4,885.6 1280.4,885.6 1282.5,896.2" fill="rgb(97,102,108)"/><polygon points="1280.4,885.6 1282.5,896.2 1282.5,896.2" fill="rgb(88,93,99)"/><polygon points="1280.4,885.6 1280.4,885.6 1282.3,894.8" fill="rgb(97,102,108)"/><polygon points="1280.4,885.6 1282.3,894.8 1282.5,896.2" fill="rgb(88,93,99)"/><polygon points="1280.4,885.6 1279.9,883.1 1281.1,892.3" fill="rgb(97,102,109)"/><polygon points="1280.4,885.6 1281.1,892.3 1282.3,894.8" fill="rgb(88,93,100)"/><polygon points="1279.9,883.1 1278.1,880.6 1278.7,889.7" fill="rgb(102,107,114)"/><polygon points="1279.9,883.1 1278.7,889.7 1281.1,892.3" fill="rgb(93,98,105)"/><polygon points="1278.1,880.6 1275.1,878.1 1275.1,887.2" fill="rgb(109,114,121)"/><polygon points="1278.1,880.6 1275.1,887.2 1278.7,889.7" fill="rgb(100,105,112)"/><polygon points="1275.1,878.1 1271.1,875.8 1270.5,884.9" fill="rgb(119,124,130)"/><polygon points="1275.1,878.1 1270.5,884.9 1275.1,887.2" fill="rgb(110,115,121)"/><polygon points="1271.1,875.8 1266.0,873.6 1264.7,882.7" fill="rgb(130,135,141)"/><polygon points="1271.1,875.8 1264.7,882.7 1270.5,884.9" fill="rgb(121,126,132)"/><polygon points="1266.0,873.6 1259.8,871.5 1257.9,880.6" fill="rgb(142,146,152)"/><polygon points="1266.0,873.6 1257.9,880.6 1264.7,882.7" fill="rgb(133,137,143)"/><polygon points="1259.8,871.5 1252.8,869.6 1250.3,878.8" fill="rgb(155,159,164)"/><polygon points="1259.8,871.5 1250.3,878.8 1257.9,880.6" fill="rgb(146,150,155)"/><polygon points="1252.8,869.6 1244.9,867.9 1241.8,877.2" fill="rgb(167,171,175)"/><polygon points="1252.8,869.6 1241.8,877.2 1250.3,878.8" fill="rgb(158,162,166)"/><polygon points="1244.9,867.9 1236.3,866.4 1232.7,875.8" fill="rgb(179,182,186)"/><polygon points="1244.9,867.9 1232.7,875.8 1241.8,877.2" fill="rgb(170,173,177)"/><polygon points="1236.3,866.4 1227.0,865.2 1222.9,874.6" fill="rgb(190,192,196)"/><polygon points="1236.3,866.4 1222.9,874.6 1232.7,875.8" fill="rgb(181,183,187)"/><polygon points="1227.0,865.2 1217.2,864.3 1212.7,873.8" fill="rgb(199,201,204)"/><polygon points="1227.0,865.2 1212.7,873.8 1222.9,874.6" fill="rgb(190,192,195)"/><polygon points="1217.2,864.3 1207.0,863.5 1202.2,873.2" fill="rgb(207,208,210)"/><polygon points="1217.2,864.3 1202.2,873.2 1212.7,873.8" fill="rgb(198,199,201)"/><polygon points="1207.0,863.5 1196.6,863.1 1191.4,872.9" fill="rgb(212,213,214)"/><polygon points="1207.0,863.5 1191.4,872.9 1202.2,873.2" fill="rgb(203,204,205)"/><polygon points="1196.6,863.1 1186.0,863.0 1180.6,872.9" fill="rgb(215,215,216)"/><polygon points="1196.6,863.1 1180.6,872.9 1191.4,872.9" fill="rgb(206,206,207)"/><polygon points="1186.0,863.0 1175.4,863.1 1169.8,873.2" fill="rgb(216,215,215)"/><polygon points="1186.0,863.0 1169.8,873.2 1180.6,872.9" fill="rgb(207,206,206)"/><polygon points="1175.4,863.1 1165.0,863.5 1159.3,873.8" fill="rgb(214,213,212)"/><polygon points="1175.4,863.1 1159.3,873.8 1169.8,873.2" fill="rgb(205,204,203)"/><polygon points="1165.0,863.5 1154.8,864.3 1149.1,874.6" fill="rgb(210,209,207)"/><polygon points="1165.0,863.5 1149.1,874.6 1159.3,873.8" fill="rgb(201,200,198)"/><polygon points="1154.8,864.3 1145.0,865.2 1139.3,875.8" fill="rgb(204,202,199)"/><polygon points="1154.8,864.3 1139.3,875.8 1149.1,874.6" fill="rgb(195,193,190)"/><polygon points="1145.0,865.2 1135.7,866.4 1130.2,877.2" fill="rgb(196,193,190)"/><polygon points="1145.0,865.2 1130.2,877.2 1139.3,875.8" fill="rgb(187,184,181)"/><polygon points="1135.7,866.4 1127.1,867.9 1121.7,878.8" fill="rgb(186,183,179)"/><polygon points="1135.7,866.4 1121.7,878.8 1130.2,877.2" fill="rgb(177,174,170)"/><polygon points="1127.1,867.9 1119.2,869.6 1114.1,880.6" fill="rgb(175,172,167)"/><polygon points="1127.1,867.9 1114.1,880.6 1121.7,878.8" fill="rgb(166,163,158)"/><polygon points="1119.2,869.6 1112.2,871.5 1107.3,882.7" fill="rgb(164,160,155)"/><polygon points="1119.2,869.6 1107.3,882.7 1114.1,880.6" fill="rgb(155,151,146)"/><polygon points="1112.2,871.5 1106.0,873.6 1101.5,884.9" fill="rgb(152,148,142)"/><polygon points="1112.2,871.5 1101.5,884.9 1107.3,882.7" fill="rgb(143,139,133)"/><polygon points="1106.0,873.6 1100.9,875.8 1096.9,887.2" fill="rgb(141,136,130)"/><polygon points="1106.0,873.6 1096.9,887.2 1101.5,884.9" fill="rgb(132,127,121)"/><polygon points="1100.9,875.8 1096.9,878.1 1093.3,889.7" fill="rgb(130,126,119)"/><polygon points="1100.9,875.8 1093.3,889.7 1096.9,887.2" fill="rgb(121,117,110)"/><polygon points="1096.9,878.1 1093.9,880.6 1090.9,892.3" fill="rgb(121,116,109)"/><polygon points="1096.9,878.1 1090.9,892.3 1093.3,889.7" fill="rgb(112,107,100)"/><polygon points="1093.9,880.6 1092.1,883.1 1089.7,894.8" fill="rgb(114,109,102)"/><polygon points="1093.9,880.6 1089.7,894.8 1090.9,892.3" fill="rgb(105,100,93)"/><polygon points="1092.1,883.1 1091.6,885.6 1089.5,896.2" fill="rgb(109,104,97)"/><polygon points="1092.1,883.1 1089.5,896.2 1089.7,894.8" fill="rgb(100,95,88)"/><polygon points="1091.6,885.6 1091.6,885.6 1089.5,896.2" fill="rgb(108,103,97)"/><polygon points="1091.6,885.6 1089.5,896.2 1089.5,896.2" fill="rgb(99,94,88)"/><polygon points="1091.6,885.6 1091.6,885.6 1089.5,896.2" fill="rgb(108,103,97)"/><polygon points="1091.6,885.6 1089.5,896.2 1089.5,896.2" fill="rgb(99,94,88)"/><polygon points="1091.6,885.6 1091.6,885.6 1089.5,896.2" fill="rgb(108,103,97)"/><polygon points="1091.6,885.6 1089.5,896.2 1089.5,896.2" fill="rgb(99,94,88)"/><polygon points="1091.6,885.6 1091.6,885.6 1089.5,896.2" fill="rgb(108,103,97)"/><polygon points="1091.6,885.6 1089.5,896.2 1089.5,896.2" fill="rgb(99,94,88)"/><polygon points="1091.6,885.6 1091.6,885.6 1089.5,896.2" fill="rgb(108,103,97)"/><polygon points="1091.6,885.6 1089.5,896.2 1089.5,896.2" fill="rgb(99,94,88)"/><polygon points="1091.6,885.6 1091.6,885.6 1089.5,896.2" fill="rgb(107,103,98)"/><polygon points="1091.6,885.6 1089.5,896.2 1089.5,896.2" fill="rgb(98,94,89)"/><polygon points="1282.5,896.2 1282.5,896.2 1285.7,906.7" fill="rgb(98,102,107)"/><polygon points="1282.5,896.2 1285.7,906.7 1285.7,906.7" fill="rgb(89,93,98)"/><polygon points="1282.5,896.2 1282.5,896.2 1285.7,906.7" fill="rgb(97,102,108)"/><polygon points="1282.5,896.2 1285.7,906.7 1285.7,906.7" fill="rgb(88,93,99)"/><polygon points="1282.5,896.2 1282.5,896.2 1285.7,906.7" fill="rgb(97,102,108)"/><polygon points="1282.5,896.2 1285.7,906.7 1285.7,906.7" fill="rgb(88,93,99)"/><polygon points="1282.5,896.2 1282.5,896.2 1285.7,906.7" fill="rgb(97,102,108)"/><polygon points="1282.5,896.2 1285.7,906.7 1285.7,906.7" fill="rgb(88,93,99)"/><polygon points="1282.5,896.2 1282.5,896.2 1285.7,906.7" fill="rgb(97,102,108)"/><polygon points="1282.5,896.2 1285.7,906.7 1285.7,906.7" fill="rgb(88,93,99)"/><polygon points="1282.5,896.2 1282.5,896.2 1285.7,906.7" fill="rgb(97,102,108)"/><polygon points="1282.5,896.2 1285.7,906.7 1285.7,906.7" fill="rgb(88,93,99)"/><polygon points="1282.5,896.2 1282.3,894.8 1285.0,904.0" fill="rgb(97,102,109)"/><polygon points="1282.5,896.2 1285.0,904.0 1285.7,906.7" fill="rgb(88,93,100)"/><polygon points="1282.3,894.8 1281.1,892.3 1283.2,901.4" fill="rgb(99,104,111)"/><polygon points="1282.3,894.8 1283.2,901.4 1285.0,904.0" fill="rgb(90,95,102)"/><polygon points="1281.1,892.3 1278.7,889.7 1280.1,898.8" fill="rgb(105,110,116)"/><polygon points="1281.1,892.3 1280.1,898.8 1283.2,901.4" fill="rgb(96,101,107)"/><polygon points="1278.7,889.7 1275.1,887.2 1275.8,896.3" fill="rgb(113,117,124)"/><polygon points="1278.7,889.7 1275.8,896.3 1280.1,898.8" fill="rgb(104,108,115)"/><polygon points="1275.1,887.2 1270.5,884.9 1270.4,894.0" fill="rgb(122,127,133)"/><polygon points="1275.1,887.2 1270.4,894.0 1275.8,896.3" fill="rgb(113,118,124)"/><polygon points="1270.5,884.9 1264.7,882.7 1263.9,891.8" fill="rgb(133,137,143)"/><polygon points="1270.5,884.9 1263.9,891.8 1270.4,894.0" fill="rgb(124,128,134)"/><polygon points="1264.7,882.7 1257.9,880.6 1256.5,889.8" fill="rgb(144,148,154)"/><polygon points="1264.7,882.7 1256.5,889.8 1263.9,891.8" fill="rgb(135,139,145)"/><polygon points="1257.9,880.6 1250.3,878.8 1248.1,888.0" fill="rgb(156,159,164)"/><polygon points="1257.9,880.6 1248.1,888.0 1256.5,889.8" fill="rgb(147,150,155)"/><polygon points="1250.3,878.8 1241.8,877.2 1239.0,886.4" fill="rgb(167,170,175)"/><polygon points="1250.3,878.8 1239.0,886.4 1248.1,888.0" fill="rgb(158,161,166)"/><polygon points="1241.8,877.2 1232.7,875.8 1229.2,885.1" fill="rgb(178,180,184)"/><polygon points="1241.8,877.2 1229.2,885.1 1239.0,886.4" fill="rgb(169,171,175)"/><polygon points="1232.7,875.8 1222.9,874.6 1218.9,884.1" fill="rgb(187,189,192)"/><polygon points="1232.7,875.8 1218.9,884.1 1229.2,885.1" fill="rgb(178,180,183)"/><polygon points="1222.9,874.6 1212.7,873.8 1208.2,883.3" fill="rgb(195,196,199)"/><polygon points="1222.9,874.6 1208.2,883.3 1218.9,884.1" fill="rgb(186,187,190)"/><polygon points="1212.7,873.8 1202.2,873.2 1197.2,882.9" fill="rgb(201,202,203)"/><polygon points="1212.7,873.8 1197.2,882.9 1208.2,883.3" fill="rgb(192,193,194)"/><polygon points="1202.2,873.2 1191.4,872.9 1186.0,882.7" fill="rgb(205,205,206)"/><polygon points="1202.2,873.2 1186.0,882.7 1197.2,882.9" fill="rgb(196,196,197)"/><polygon points="1191.4,872.9 1180.6,872.9 1174.8,882.9" fill="rgb(206,206,206)"/><polygon points="1191.4,872.9 1174.8,882.9 1186.0,882.7" fill="rgb(197,197,197)"/><polygon points="1180.6,872.9 1169.8,873.2 1163.8,883.3" fill="rgb(206,205,205)"/><polygon points="1180.6,872.9 1163.8,883.3 1174.8,882.9" fill="rgb(197,196,196)"/><polygon points="1169.8,873.2 1159.3,873.8 1153.1,884.1" fill="rgb(203,202,201)"/><polygon points="1169.8,873.2 1153.1,884.1 1163.8,883.3" fill="rgb(194,193,192)"/><polygon points="1159.3,873.8 1149.1,874.6 1142.8,885.1" fill="rgb(199,197,195)"/><polygon points="1159.3,873.8 1142.8,885.1 1153.1,884.1" fill="rgb(190,188,186)"/><polygon points="1149.1,874.6 1139.3,875.8 1133.0,886.4" fill="rgb(192,190,187)"/><polygon points="1149.1,874.6 1133.0,886.4 1142.8,885.1" fill="rgb(183,181,178)"/><polygon points="1139.3,875.8 1130.2,877.2 1123.9,888.0" fill="rgb(184,181,178)"/><polygon points="1139.3,875.8 1123.9,888.0 1133.0,886.4" fill="rgb(175,172,169)"/><polygon points="1130.2,877.2 1121.7,878.8 1115.5,889.8" fill="rgb(175,171,167)"/><polygon points="1130.2,877.2 1115.5,889.8 1123.9,888.0" fill="rgb(166,162,158)"/><polygon points="1121.7,878.8 1114.1,880.6 1108.1,891.8" fill="rgb(164,161,156)"/><polygon points="1121.7,878.8 1108.1,891.8 1115.5,889.8" fill="rgb(155,152,147)"/><polygon points="1114.1,880.6 1107.3,882.7 1101.6,894.0" fill="rgb(154,150,144)"/><polygon points="1114.1,880.6 1101.6,894.0 1108.1,891.8" fill="rgb(145,141,135)"/><polygon points="1107.3,882.7 1101.5,884.9 1096.2,896.3" fill="rgb(143,139,133)"/><polygon points="1107.3,882.7 1096.2,896.3 1101.6,894.0" fill="rgb(134,130,124)"/><polygon points="1101.5,884.9 1096.9,887.2 1091.9,898.8" fill="rgb(133,129,122)"/><polygon points="1101.5,884.9 1091.9,898.8 1096.2,896.3" fill="rgb(124,120,113)"/><polygon points="1096.9,887.2 1093.3,889.7 1088.8,901.4" fill="rgb(124,119,113)"/><polygon points="1096.9,887.2 1088.8,901.4 1091.9,898.8" fill="rgb(115,110,104)"/><polygon points="1093.3,889.7 1090.9,892.3 1087.0,904.0" fill="rgb(116,112,105)"/><polygon points="1093.3,889.7 1087.0,904.0 1088.8,901.4" fill="rgb(107,103,96)"/><polygon points="1090.9,892.3 1089.7,894.8 1086.3,906.7" fill="rgb(111,106,99)"/><polygon points="1090.9,892.3 1086.3,906.7 1087.0,904.0" fill="rgb(102,97,90)"/><polygon points="1089.7,894.8 1089.5,896.2 1086.3,906.7" fill="rgb(109,104,97)"/><polygon points="1089.7,894.8 1086.3,906.7 1086.3,906.7" fill="rgb(100,95,88)"/><polygon points="1089.5,896.2 1089.5,896.2 1086.3,906.7" fill="rgb(108,103,97)"/><polygon points="1089.5,896.2 1086.3,906.7 1086.3,906.7" fill="rgb(99,94,88)"/><polygon points="1089.5,896.2 1089.5,896.2 1086.3,906.7" fill="rgb(108,103,97)"/><polygon points="1089.5,896.2 1086.3,906.7 1086.3,906.7" fill="rgb(99,94,88)"/><polygon points="1089.5,896.2 1089.5,896.2 1086.3,906.7" fill="rgb(108,103,97)"/><polygon points="1089.5,896.2 1086.3,906.7 1086.3,906.7" fill="rgb(99,94,88)"/><polygon points="1089.5,896.2 1089.5,896.2 1086.3,906.7" fill="rgb(108,103,97)"/><polygon points="1089.5,896.2 1086.3,906.7 1086.3,906.7" fill="rgb(99,94,88)"/><polygon points="1089.5,896.2 1089.5,896.2 1086.3,906.7" fill="rgb(108,103,97)"/><polygon points="1089.5,896.2 1086.3,906.7 1086.3,906.7" fill="rgb(99,94,88)"/><polygon points="1089.5,896.2 1089.5,896.2 1086.3,906.7" fill="rgb(107,103,98)"/><polygon points="1089.5,896.2 1086.3,906.7 1086.3,906.7" fill="rgb(98,94,89)"/><polygon points="1285.7,906.7 1285.7,906.7 1290.0,917.3" fill="rgb(98,102,107)"/><polygon points="1285.7,906.7 1290.0,917.3 1290.0,917.3" fill="rgb(89,93,98)"/><polygon points="1285.7,906.7 1285.7,906.7 1290.0,917.3" fill="rgb(97,102,108)"/><polygon points="1285.7,906.7 1290.0,917.3 1290.0,917.3" fill="rgb(88,93,99)"/><polygon points="1285.7,906.7 1285.7,906.7 1290.0,917.3" fill="rgb(97,102,108)"/><polygon points="1285.7,906.7 1290.0,917.3 1290.0,917.3" fill="rgb(88,93,99)"/><polygon points="1285.7,906.7 1285.7,906.7 1290.0,917.3" fill="rgb(97,102,108)"/><polygon points="1285.7,906.7 1290.0,917.3 1290.0,917.3" fill="rgb(88,93,99)"/><polygon points="1285.7,906.7 1285.7,906.7 1290.0,917.3" fill="rgb(97,102,108)"/><polygon points="1285.7,906.7 1290.0,917.3 1290.0,917.3" fill="rgb(88,93,99)"/><polygon points="1285.7,906.7 1285.7,906.7 1289.8,915.9" fill="rgb(97,102,108)"/><polygon points="1285.7,906.7 1289.8,915.9 1290.0,917.3" fill="rgb(88,93,99)"/><polygon points="1285.7,906.7 1285.0,904.0 1288.5,913.2" fill="rgb(97,102,109)"/><polygon points="1285.7,906.7 1288.5,913.2 1289.8,915.9" fill="rgb(88,93,100)"/><polygon points="1285.0,904.0 1283.2,901.4 1285.9,910.5" fill="rgb(101,106,113)"/><polygon points="1285.0,904.0 1285.9,910.5 1288.5,913.2" fill="rgb(92,97,104)"/><polygon points="1283.2,901.4 1280.1,898.8 1282.1,907.8" fill="rgb(108,112,119)"/><polygon points="1283.2,901.4 1282.1,907.8 1285.9,910.5" fill="rgb(99,103,110)"/><polygon points="1280.1,898.8 1275.8,896.3 1277.0,905.4" fill="rgb(116,120,127)"/><polygon points="1280.1,898.8 1277.0,905.4 1282.1,907.8" fill="rgb(107,111,118)"/><polygon points="1275.8,896.3 1270.4,894.0 1270.8,903.0" fill="rgb(125,130,136)"/><polygon points="1275.8,896.3 1270.8,903.0 1277.0,905.4" fill="rgb(116,121,127)"/><polygon points="1270.4,894.0 1263.9,891.8 1263.5,900.8" fill="rgb(135,140,145)"/><polygon points="1270.4,894.0 1263.5,900.8 1270.8,903.0" fill="rgb(126,131,136)"/><polygon points="1263.9,891.8 1256.5,889.8 1255.3,898.9" fill="rgb(146,150,155)"/><polygon points="1263.9,891.8 1255.3,898.9 1263.5,900.8" fill="rgb(137,141,146)"/><polygon points="1256.5,889.8 1248.1,888.0 1246.2,897.2" fill="rgb(157,160,165)"/><polygon points="1256.5,889.8 1246.2,897.2 1255.3,898.9" fill="rgb(148,151,156)"/><polygon points="1248.1,888.0 1239.0,886.4 1236.3,895.7" fill="rgb(167,170,174)"/><polygon points="1248.1,888.0 1236.3,895.7 1246.2,897.2" fill="rgb(158,161,165)"/><polygon points="1239.0,886.4 1229.2,885.1 1225.8,894.5" fill="rgb(176,179,182)"/><polygon points="1239.0,886.4 1225.8,894.5 1236.3,895.7" fill="rgb(167,170,173)"/><polygon points="1229.2,885.1 1218.9,884.1 1214.8,893.6" fill="rgb(184,186,189)"/><polygon points="1229.2,885.1 1214.8,893.6 1225.8,894.5" fill="rgb(175,177,180)"/><polygon points="1218.9,884.1 1208.2,883.3 1203.4,892.9" fill="rgb(191,192,194)"/><polygon points="1218.9,884.1 1203.4,892.9 1214.8,893.6" fill="rgb(182,183,185)"/><polygon points="1208.2,883.3 1197.2,882.9 1191.8,892.6" fill="rgb(195,196,197)"/><polygon points="1208.2,883.3 1191.8,892.6 1203.4,892.9" fill="rgb(186,187,188)"/><polygon points="1197.2,882.9 1186.0,882.7 1180.2,892.6" fill="rgb(198,198,199)"/><polygon points="1197.2,882.9 1180.2,892.6 1191.8,892.6" fill="rgb(189,189,190)"/><polygon points="1186.0,882.7 1174.8,882.9 1168.6,892.9" fill="rgb(199,198,198)"/><polygon points="1186.0,882.7 1168.6,892.9 1180.2,892.6" fill="rgb(190,189,189)"/><polygon points="1174.8,882.9 1163.8,883.3 1157.2,893.6" fill="rgb(197,196,195)"/><polygon points="1174.8,882.9 1157.2,893.6 1168.6,892.9" fill="rgb(188,187,186)"/><polygon points="1163.8,883.3 1153.1,884.1 1146.2,894.5" fill="rgb(194,193,191)"/><polygon points="1163.8,883.3 1146.2,894.5 1157.2,893.6" fill="rgb(185,184,182)"/><polygon points="1153.1,884.1 1142.8,885.1 1135.7,895.7" fill="rgb(189,187,184)"/><polygon points="1153.1,884.1 1135.7,895.7 1146.2,894.5" fill="rgb(180,178,175)"/><polygon points="1142.8,885.1 1133.0,886.4 1125.8,897.2" fill="rgb(182,180,176)"/><polygon points="1142.8,885.1 1125.8,897.2 1135.7,895.7" fill="rgb(173,171,167)"/><polygon points="1133.0,886.4 1123.9,888.0 1116.7,898.9" fill="rgb(174,171,167)"/><polygon points="1133.0,886.4 1116.7,898.9 1125.8,897.2" fill="rgb(165,162,158)"/><polygon points="1123.9,888.0 1115.5,889.8 1108.5,900.8" fill="rgb(165,161,157)"/><polygon points="1123.9,888.0 1108.5,900.8 1116.7,898.9" fill="rgb(156,152,148)"/><polygon points="1115.5,889.8 1108.1,891.8 1101.2,903.0" fill="rgb(155,151,146)"/><polygon points="1115.5,889.8 1101.2,903.0 1108.5,900.8" fill="rgb(146,142,137)"/><polygon points="1108.1,891.8 1101.6,894.0 1095.0,905.4" fill="rgb(145,141,135)"/><polygon points="1108.1,891.8 1095.0,905.4 1101.2,903.0" fill="rgb(136,132,126)"/><polygon points="1101.6,894.0 1096.2,896.3 1089.9,907.8" fill="rgb(136,131,125)"/><polygon points="1101.6,894.0 1089.9,907.8 1095.0,905.4" fill="rgb(127,122,116)"/><polygon points="1096.2,896.3 1091.9,898.8 1086.1,910.5" fill="rgb(127,122,116)"/><polygon points="1096.2,896.3 1086.1,910.5 1089.9,907.8" fill="rgb(118,113,107)"/><polygon points="1091.9,898.8 1088.8,901.4 1083.5,913.2" fill="rgb(119,114,108)"/><polygon points="1091.9,898.8 1083.5,913.2 1086.1,910.5" fill="rgb(110,105,99)"/><polygon points="1088.8,901.4 1087.0,904.0 1082.2,915.9" fill="rgb(113,108,101)"/><polygon points="1088.8,901.4 1082.2,915.9 1083.5,913.2" fill="rgb(104,99,92)"/><polygon points="1087.0,904.0 1086.3,906.7 1082.0,917.3" fill="rgb(109,104,97)"/><polygon points="1087.0,904.0 1082.0,917.3 1082.2,915.9" fill="rgb(100,95,88)"/><polygon points="1086.3,906.7 1086.3,906.7 1082.0,917.3" fill="rgb(108,103,97)"/><polygon points="1086.3,906.7 1082.0,917.3 1082.0,917.3" fill="rgb(99,94,88)"/><polygon points="1086.3,906.7 1086.3,906.7 1082.0,917.3" fill="rgb(108,103,97)"/><polygon points="1086.3,906.7 1082.0,917.3 1082.0,917.3" fill="rgb(99,94,88)"/><polygon points="1086.3,906.7 1086.3,906.7 1082.0,917.3" fill="rgb(108,103,97)"/><polygon points="1086.3,906.7 1082.0,917.3 1082.0,917.3" fill="rgb(99,94,88)"/><polygon points="1086.3,906.7 1086.3,906.7 1082.0,917.3" fill="rgb(108,103,97)"/><polygon points="1086.3,906.7 1082.0,917.3 1082.0,917.3" fill="rgb(99,94,88)"/><polygon points="1086.3,906.7 1086.3,906.7 1082.0,917.3" fill="rgb(108,103,97)"/><polygon points="1086.3,906.7 1082.0,917.3 1082.0,917.3" fill="rgb(99,94,88)"/><polygon points="1086.3,906.7 1086.3,906.7 1082.0,917.3" fill="rgb(107,103,98)"/><polygon points="1086.3,906.7 1082.0,917.3 1082.0,917.3" fill="rgb(98,94,89)"/><polygon points="1086.3,906.7 1086.3,906.7 1082.0,917.3" fill="rgb(107,103,98)"/><polygon points="1086.3,906.7 1082.0,917.3 1082.0,917.3" fill="rgb(98,94,89)"/></g><path d="M1022 687 C1015 684 1014 676 1020 669 C1050 647 1120 635 1187 635 C1254 635 1324 647 1354 669 C1360 676 1359 684 1352 687 C1300 673 1240 666 1187 666 C1134 666 1074 673 1022 687Z" fill="url(#ring)"/><linearGradient id="ringDk" gradientUnits="userSpaceOnUse" x1="0" y1="648" x2="0" y2="668"><stop offset="0" stop-color="#9a7838" stop-opacity="0"/><stop offset="1" stop-color="#9a7838" stop-opacity="0.85"/></linearGradient><path d="M1022 686 C1070 672 1130 666 1187 666 C1240 666 1300 672 1352 686 C1300 662 1240 650 1187 650 C1130 650 1070 662 1022 686Z" fill="url(#ringDk)"/><path d="M1019.2 685.5 C1070 672 1130 666 1187 666 C1240 666 1300 672 1354.6 685.5" fill="none" stroke="#3c3a36" stroke-width="1.1"/><ellipse cx="1184.7" cy="917.3" rx="104" ry="24.7" fill="#c9534a"/><path d="M1080.8 917.3 A104 24.7 0 0 1 1288.6 917.3" fill="none" stroke="#3a3a3a" stroke-width="0.9"/><path d="M1019.2 684.7 A211.5 211.5 0 1 1 1354.6 685 C1370 689 1382 696 1390 707 C1396 714 1395 724 1380 736 L1325 790 L1303 812 C1290 830 1277 852 1277 872 C1277 890 1288.6 900 1288.6 917 A104 24.7 0 0 1 1080.8 917 C1081 900 1091 890 1091 872 C1091 852 1078 830 1067 812 L1045.4 789.5 L993 735.5 C978 725 976 716 981 708 C990 696 1005 688 1019.2 684.7Z" fill="none" stroke="#5b5bff" stroke-width="1.35"/><g stroke="#9090ff" stroke-width="1.6" fill="none"><path d="M1164.3 788 L1164.3 845.7 L1135.4 852.5 M1164.3 845.7 L1196 852.5"/></g><path d="M1184.5 823.6 V917" stroke="#4a8ad8" stroke-width="1.6"/><path d="M1184.5 917 L1121 934.4" stroke="#3cb84a" stroke-width="1.6"/><path d="M1184.5 917 L1257.7 933.6" stroke="#e0402e" stroke-width="1.4"/><text x="1179" y="813" font-family="Liberation Sans" font-size="12" fill="#4a8ad8">Z</text><text x="1108" y="937" font-family="Liberation Sans" font-size="12" fill="#3cb84a">Y</text><rect x="1180.5" y="628.5" width="11.5" height="12" fill="#a8a8ff" stroke="#333" stroke-width="1"/><path d="M1815 236.8 L1865.6 247.2 L1865.6 314 L1815 302.7Z" fill="#c6c6c6"/><path d="M1815 302.7 L1861.3 314 L1819.6 325.2 L1772.8 314.8Z" fill="#c2c2c2"/><path d="M1814 222 V302.7" stroke="#8ab4ec" stroke-width="1.4"/><path d="M1815 302.7 L1876.9 317.4" stroke="#eb9c8e" stroke-width="1.4"/><path d="M1815 302.7 L1758 318.3" stroke="#86d096" stroke-width="1.4"/><text x="1810" y="203" font-family="Liberation Sans" font-size="10" fill="#9cbcec">Z</text><text x="1887" y="321" font-family="Liberation Sans" font-size="10" fill="#eea092">X</text><text x="1741" y="322" font-family="Liberation Sans" font-size="10" fill="#8ed49c">Y</text><text font-family="Liberation Sans" font-size="9" font-weight="bold" fill="#8c8c8c" transform="translate(1783 280) rotate(-10) scale(0.9 1.1)">LEFT</text><text font-family="Liberation Sans" font-size="9" font-weight="bold" fill="#808080" transform="translate(1826 273) rotate(9) scale(0.95 1.1)">FRONT</text></g></svg>
<div class="t" style="left:1792.40px;top:911.62px;font-size:12.5px;color:#222;transform:scaleX(1.0359);">Volume</div>
<div class="t" style="left:1860.30px;top:911.62px;font-size:12.5px;color:#222;transform:scaleX(0.8937);">Mass</div>
<div class="t" style="left:1575.20px;top:931.32px;font-size:12.5px;color:#222;transform:scaleX(1.0155);">Support volume estimation</div>
<div class="t" style="left:1750.20px;top:931.32px;font-size:12.5px;color:#222;transform:scaleX(1.0260);">5 958,000 mm</div>
<div class="t" style="left:1833.00px;top:928.13px;font-size:8px;color:#222;transform:scaleX(0.8982);">3</div>
<svg class="a" style="left:0;top:0" width="1919" height="1038"><rect x="491" y="490" width="23" height="504" fill="#f9f9f9"/><rect x="491" y="994" width="1428" height="24" fill="#f9f9f9"/><path d="M514.5 490 V994" stroke="#b0b0b0" stroke-width="1"/><path d="M514 994.5 H1919" stroke="#b4b4b4" stroke-width="1"/><path d="M514.4 995 V1018 M531.6 995 V1000 M548.9 995 V1000 M566.1 995 V1000 M583.4 995 V1000 M600.6 995 V1005 M617.8 995 V1000 M635.1 995 V1000 M652.3 995 V1000 M669.6 995 V1000 M686.8 995 V1018 M704.0 995 V1000 M721.3 995 V1000 M738.5 995 V1000 M755.7 995 V1000 M773.0 995 V1005 M790.2 995 V1000 M807.5 995 V1000 M824.7 995 V1000 M841.9 995 V1000 M859.2 995 V1018 M876.4 995 V1000 M893.7 995 V1000 M910.9 995 V1000 M928.1 995 V1000 M945.4 995 V1005 M962.6 995 V1000 M979.9 995 V1000 M997.1 995 V1000 M1014.3 995 V1000 M1031.6 995 V1018 M1048.8 995 V1000 M1066.0 995 V1000 M1083.3 995 V1000 M1100.5 995 V1000 M1117.8 995 V1005 M1135.0 995 V1000 M1152.2 995 V1000 M1169.5 995 V1000 M1186.7 995 V1000 M1204.0 995 V1018 M1221.2 995 V1000 M1238.4 995 V1000 M1255.7 995 V1000 M1272.9 995 V1000 M1290.2 995 V1005 M1307.4 995 V1000 M1324.6 995 V1000 M1341.9 995 V1000 M1359.1 995 V1000 M1376.3 995 V1018 M1393.6 995 V1000 M1410.8 995 V1000 M1428.1 995 V1000 M1445.3 995 V1000 M1462.5 995 V1005 M1479.8 995 V1000 M1497.0 995 V1000 M1514.3 995 V1000 M1531.5 995 V1000 M1548.7 995 V1018 M1566.0 995 V1000 M1583.2 995 V1000 M1600.5 995 V1000 M1617.7 995 V1000 M1634.9 995 V1005 M1652.2 995 V1000 M1669.4 995 V1000 M1686.7 995 V1000 M1703.9 995 V1000 M1721.1 995 V1018 M1738.4 995 V1000 M1755.6 995 V1000 M1772.8 995 V1000 M1790.1 995 V1000 M1807.3 995 V1005 M1824.6 995 V1000 M1841.8 995 V1000 M1859.0 995 V1000 M1876.3 995 V1000 M1893.5 995 V1018 M1910.8 995 V1000 " stroke="#707070" stroke-width="1"/><text x="526.2" y="1012.8" font-family="Liberation Sans" font-size="9.5" fill="#6a6a6a" text-anchor="middle">0</text><text x="698.6" y="1012.8" font-family="Liberation Sans" font-size="9.5" fill="#6a6a6a" text-anchor="middle">10</text><text x="871.0" y="1012.8" font-family="Liberation Sans" font-size="9.5" fill="#6a6a6a" text-anchor="middle">20</text><text x="1043.4" y="1012.8" font-family="Liberation Sans" font-size="9.5" fill="#6a6a6a" text-anchor="middle">30</text><text x="1215.8" y="1012.8" font-family="Liberation Sans" font-size="9.5" fill="#6a6a6a" text-anchor="middle">40</text><text x="1388.1" y="1012.8" font-family="Liberation Sans" font-size="9.5" fill="#6a6a6a" text-anchor="middle">50</text><text x="1560.5" y="1012.8" font-family="Liberation Sans" font-size="9.5" fill="#6a6a6a" text-anchor="middle">60</text><text x="1732.9" y="1012.8" font-family="Liberation Sans" font-size="9.5" fill="#6a6a6a" text-anchor="middle">70</text><text x="1905.3" y="1012.8" font-family="Liberation Sans" font-size="9.5" fill="#6a6a6a" text-anchor="middle">80</text><path d="M491 994.5 H514 M509.5 977.3 H514 M509.5 960.0 H514 M509.5 942.8 H514 M509.5 925.5 H514 M504 908.3 H514 M509.5 891.1 H514 M509.5 873.8 H514 M509.5 856.6 H514 M509.5 839.3 H514 M491 822.1 H514 M509.5 804.9 H514 M509.5 787.6 H514 M509.5 770.4 H514 M509.5 753.2 H514 M504 735.9 H514 M509.5 718.7 H514 M509.5 701.4 H514 M509.5 684.2 H514 M509.5 667.0 H514 M491 649.7 H514 M509.5 632.5 H514 M509.5 615.2 H514 M509.5 598.0 H514 M509.5 580.8 H514 M504 563.5 H514 M509.5 546.3 H514 M509.5 529.0 H514 M509.5 511.8 H514 M509.5 494.6 H514 " stroke="#707070" stroke-width="1"/><text font-family="Liberation Sans" font-size="9.5" fill="#6a6a6a" transform="translate(504 983.5) rotate(-90)" text-anchor="middle">0</text><text font-family="Liberation Sans" font-size="9.5" fill="#6a6a6a" transform="translate(504 811.1) rotate(-90)" text-anchor="middle">10</text><text font-family="Liberation Sans" font-size="9.5" fill="#6a6a6a" transform="translate(504 638.7) rotate(-90)" text-anchor="middle">20</text><rect x="491" y="994" width="23" height="24" fill="#f9f9f9"/><path d="M491 994.5 H514.5 V1018" stroke="#666" fill="none"/><path d="M497.5 995 V999.5 M509.7 1011.5 H514" stroke="#777"/><text x="492.5" y="1007" font-family="Liberation Sans" font-size="9.5" fill="#555" textLength="16.5" lengthAdjust="spacingAndGlyphs">mm</text></svg>
<div class="a" style="left:0px;top:1018px;width:1919px;height:1px;background:#c0c0c0;"></div>
<div class="a" style="left:831px;top:177px;width:748px;height:38px;background:#fff;border:1px solid #c8c8c8;"></div>
<div class="a" style="left:1019px;top:180px;width:33px;height:33px;background:#fde5c0;"></div>
<div class="a" style="left:1017px;top:184px;width:1px;height:26px;background:#999;"></div>
<div class="a" style="left:1350px;top:184px;width:1px;height:26px;background:#999;"></div>
<svg class="a" style="left:0;top:0" width="1600" height="230"><g transform="translate(838,184)" stroke="#555" stroke-width="1.1"><path d="M11.5 0.5 L22.5 6 V19 L11.5 24.5 L0.5 19 V6Z" fill="url(#cg)"/><path d="M0.5 6 L11.5 11.5 L22.5 6 M11.5 11.5 V24.5" fill="none"/></g><path d="M869 195.5 h7 l-3.5 3.5z" fill="#555"/><g transform="translate(887,184)" stroke="#444" stroke-width="1.1"><path d="M11.5 0.5 L22.5 6 V19 L11.5 24.5 L0.5 19 V6Z" fill="#fff"/><path d="M11.5 0.5 V12 L0.5 19 V6Z" fill="#9a9a9a"/><path d="M11.5 12 L22.5 19" stroke="#bbb"/></g><path d="M918 195.5 h7 l-3.5 3.5z" fill="#555"/><g transform="translate(934,183)" stroke="#555" stroke-width="1"><circle cx="5" cy="5" r="4.5" fill="#a0a0a0"/><circle cx="16" cy="5" r="4.5" fill="#a0a0a0"/><circle cx="5" cy="15.5" r="4.5" fill="#a0a0a0"/><circle cx="15" cy="15" r="5" fill="#fff"/><path d="M18.5 18.5 L24 24" stroke-width="2"/></g><g transform="translate(969,183)"><circle cx="10" cy="10" r="8.5" fill="#fff" stroke="#444" stroke-width="1.2"/><path d="M16 16 L24 24" stroke="#666" stroke-width="3"/><path d="M16 16 L24 24" stroke="#fff" stroke-width="1.2"/></g><path d="M1005 195.5 h7 l-3.5 3.5z" fill="#555"/><path transform="translate(1027,184) scale(1)" d="M0 0 L18 14 L8 14 L0 24Z" fill="#3a3a3a"/><path transform="translate(1057,184) scale(0.95)" d="M0 0 L18 14 L8 14 L0 24Z" fill="#3a3a3a"/><g transform="translate(1072,183)"><path d="M7 7 V1 M7 7 L2 10 M7 7 L12 10" stroke="#3cb84a" stroke-width="1"/><path d="M7 7 V1" stroke="#e04040"/><path d="M7 7 L12 10" stroke="#4a7fe0"/><circle cx="7" cy="7" r="4" fill="none" stroke="#d07070" stroke-width="0.8"/></g><path transform="translate(1093,184)" d="M0.5 0.5 L23 8.5 L0.5 24Z" fill="url(#cg)" stroke="#f39a1e" stroke-width="1"/><path transform="translate(1105,194) scale(0.55)" d="M0 0 L18 14 L8 14 L0 24Z" fill="#3a3a3a"/><g transform="translate(1130,184)"><path d="M0.5 6 L22 0.5 V19 L0.5 24.5Z" fill="url(#cg)" stroke="#f39a1e"/></g><path transform="translate(1142,194) scale(0.55)" d="M0 0 L18 14 L8 14 L0 24Z" fill="#3a3a3a"/><g transform="translate(1164,184)"><path d="M0.5 24 V8 Q4 2 22 0.5 V19 Q6 20 0.5 24Z" fill="url(#cg)" stroke="#f39a1e"/></g><path transform="translate(1176,194) scale(0.55)" d="M0 0 L18 14 L8 14 L0 24Z" fill="#3a3a3a"/><rect x="1197.5" y="184.5" width="23" height="19" fill="none" stroke="#f39a1e" stroke-dasharray="2 2"/><path transform="translate(1210,194) scale(0.55)" d="M0 0 L18 14 L8 14 L0 24Z" fill="#3a3a3a"/><g transform="translate(1234,183)" stroke="#f39a1e"><path d="M9.5 0.5 L18.5 5 V15 L9.5 19.5 L0.5 15 V5Z" fill="url(#cg)"/><path d="M0.5 5 L9.5 9.5 L18.5 5 M9.5 9.5 V19.5" fill="none"/></g><path transform="translate(1245,193) scale(0.6)" d="M0 0 L18 14 L8 14 L0 24Z" fill="#3a3a3a"/><path d="M1269 206 C1272 198 1276 187 1288 185" fill="none" stroke="#f39a1e" stroke-width="3"/><path d="M1269 206 C1272 198 1276 187 1288 185" fill="none" stroke="#c8c8c8" stroke-width="1.2"/><path d="M1280 195 L1294 208" stroke="#555" stroke-width="4"/><path d="M1280 195 L1293 207" stroke="#bbb" stroke-width="2"/><rect x="1303.5" y="185.5" width="23" height="18" fill="url(#cg)" stroke="#f39a1e"/><path d="M1305 203 L1310 186 L1315 203 L1320 186 L1325 203" fill="none" stroke="#f39a1e"/><path d="M1316 195 L1329 208" stroke="#555" stroke-width="4"/><path d="M1316 195 L1328 207" stroke="#bbb" stroke-width="2"/><path d="M1338 195.5 h7 l-3.5 3.5z" fill="#555"/><path d="M1356.5 184.5 L1379 193 L1356.5 207Z" fill="url(#cg)" stroke="#666"/><path transform="translate(1368,194) scale(0.55)" d="M0 0 L18 14 L8 14 L0 24Z" fill="#3a3a3a"/><path d="M1391.5 188 L1398 186 L1398 205 L1391.5 207Z" fill="url(#cg)" stroke="#666"/><path d="M1398.5 184.5 L1415 192 L1398.5 200Z" fill="url(#cg)" stroke="#f39a1e"/><path d="M1403 203 H1414 L1411 201 M1414 207 H1403 L1406 209" fill="none" stroke="#444"/><path transform="translate(1426,184)" d="M0.5 0.5 L23 8.5 L0.5 24Z" fill="url(#cg)" stroke="#f39a1e" stroke-width="1"/><path d="M1440 199 L1448 207 M1448 199 L1440 207" stroke="#e8505a" stroke-width="1.6"/><path d="M1461.5 188 L1468 186 L1468 205 L1461.5 207Z" fill="url(#cg)" stroke="#f39a1e"/><path d="M1468.5 184.5 L1485 192 L1468.5 200Z" fill="#e8505a" stroke="#f39a1e"/><path d="M1473 203 H1484 L1481 201 M1484 207 H1473 L1476 209" fill="none" stroke="#444"/><path transform="translate(1496,184)" d="M0.5 0.5 L23 8.5 L0.5 24Z" fill="url(#cg)" stroke="#f39a1e" stroke-width="1"/><circle cx="1514" cy="200" r="5" fill="#a0a0a0" stroke="#444"/><rect x="1512" y="205" width="4" height="3" fill="#fff" stroke="#444" stroke-width="0.8"/><path transform="translate(1531,184)" d="M0.5 0.5 L23 8.5 L0.5 24Z" fill="url(#cg)" stroke="#555" stroke-width="1"/><circle cx="1549" cy="200" r="5" fill="#fde3b0" stroke="#444"/><rect x="1547" y="205" width="4" height="3" fill="#fff" stroke="#444" stroke-width="0.8"/><path d="M1566 195.5 h7 l-3.5 3.5z" fill="#555"/></svg>
<div class="a" style="left:491px;top:150px;width:1428px;height:27px;background:#fff;"></div>
<div class="a" style="left:638px;top:150px;width:139px;height:27px;background:#c3c3c3;"></div>
<div class="a" style="left:491px;top:177px;width:1428px;height:1px;background:#c2c2c2;"></div>
<svg class="a" style="left:496px;top:159px;" width="11" height="11" viewBox="0 0 11 11"><path d="M0.5 0.5 L10.5 10.5 M10.5 0.5 L0.5 10.5" stroke="#222" stroke-width="1"/></svg>
<svg class="a" style="left:644px;top:159px;" width="11" height="11" viewBox="0 0 11 11"><path d="M0.5 0.5 L10.5 10.5 M10.5 0.5 L0.5 10.5" stroke="#222" stroke-width="1"/></svg>
<div class="t" style="left:523.20px;top:158.22px;font-size:12.5px;color:#111;transform:scaleX(0.9508);">Platform #Standard</div>
<div class="t" style="left:671.30px;top:158.22px;font-size:12.5px;color:#111;transform:scaleX(0.9208);">Platform #S600(2)</div>
<div class="a" style="left:491px;top:177px;width:338px;height:313px;background:#f2f2f4;border-right:1px solid #cfcfcf;border-bottom:1px solid #d0d0d0;"></div>
<div class="a" style="left:491px;top:177px;width:338px;height:26px;background:#dcdcdc;"></div>
<div class="t" style="left:497.30px;top:185.60px;font-size:13px;color:#111;">Support Area Preview</div>
<svg class="a" style="left:810px;top:185px;" width="12" height="11" viewBox="0 0 12 11"><path d="M0.5 0.5 L11 10.5 M11 0.5 L0.5 10.5" stroke="#222" stroke-width="1"/></svg>
<div class="a" style="left:498px;top:209px;width:324px;height:60px;background:#fff;box-shadow:1px 1px 2px rgba(0,0,0,0.25);"></div>
<div class="a" style="left:498px;top:275px;width:324px;height:77px;background:#fff;box-shadow:1px 1px 2px rgba(0,0,0,0.25);"></div>
<div class="a" style="left:498px;top:358px;width:324px;height:84px;background:#fff;box-shadow:1px 1px 2px rgba(0,0,0,0.25);"></div>
<svg class="a" style="left:797px;top:215px;" width="13" height="8" viewBox="0 0 13 8"><path d="M1 1 L6.5 6.5 L12 1" fill="none" stroke="#f39a1e" stroke-width="1.6"/></svg>
<svg class="a" style="left:797px;top:281px;" width="13" height="8" viewBox="0 0 13 8"><path d="M1 1 L6.5 6.5 L12 1" fill="none" stroke="#f39a1e" stroke-width="1.6"/></svg>
<svg class="a" style="left:797px;top:364px;" width="13" height="8" viewBox="0 0 13 8"><path d="M1 1 L6.5 6.5 L12 1" fill="none" stroke="#f39a1e" stroke-width="1.6"/></svg>
<div class="t" style="left:510.00px;top:214.80px;font-size:13px;color:#f39a1e;transform:scaleX(0.9771);">Surface angle</div>
<div class="t" style="left:507.20px;top:243.92px;font-size:12.5px;color:#111;transform:scaleX(0.9178);">Surface angle</div>
<div class="a" style="left:663px;top:239px;width:150px;height:21px;background:#fff;border:1px solid #7a7a7a;"></div>
<div class="t" style="left:706.40px;top:244.32px;font-size:12.5px;color:#111;transform:scaleX(0.8503);">54,00</div>
<svg class="a" style="left:785px;top:244px;" width="6" height="6" viewBox="0 0 6 6"><circle cx="3" cy="3" r="1.8" fill="none" stroke="#222" stroke-width="1.1"/></svg>
<svg class="a" style="left:800px;top:243px;" width="8" height="14" viewBox="0 0 8 14"><path d="M0.5 4.5 L4 0.5 L7.5 4.5Z M0.5 9.5 L4 13.5 L7.5 9.5Z" fill="#555"/></svg>
<div class="t" style="left:510.00px;top:280.50px;font-size:13px;color:#f39a1e;transform:scaleX(0.9913);">Controls</div>
<svg class="a" style="left:507px;top:307px;" width="14" height="14" viewBox="0 0 14 14"><rect x="0.5" y="0.5" width="12" height="12" fill="#fff" stroke="#333"/></svg>
<div class="t" style="left:526.00px;top:307.82px;font-size:12.5px;color:#111;transform:scaleX(0.9857);">Highlight down-facing edges</div>
<svg class="a" style="left:507px;top:329px;" width="14" height="14" viewBox="0 0 14 14"><rect x="0.5" y="0.5" width="12" height="12" fill="#fff" stroke="#333"/></svg>
<div class="t" style="left:526.00px;top:330.12px;font-size:12.5px;color:#111;transform:scaleX(0.9497);">Show support preview</div>
<div class="t" style="left:510.00px;top:364.00px;font-size:13px;color:#f39a1e;transform:scaleX(1.0408);">Mark support area</div>
<div class="a" style="left:507px;top:388px;width:144px;height:23px;background:#fff;border:1px solid #7a7a7a;"></div>
<div class="t" style="left:531.60px;top:394.42px;font-size:12.5px;color:#111;transform:scaleX(0.9336);">Mark support area</div>
<svg class="a" style="left:507px;top:419px;" width="14" height="14" viewBox="0 0 14 14"><rect x="0.5" y="0.5" width="12" height="12" fill="#fff" stroke="#333"/><path d="M2.5 6.5 L5.5 10 L11 3" fill="none" stroke="#f39a1e" stroke-width="1.6"/></svg>
<div class="t" style="left:526.30px;top:420.12px;font-size:12.5px;color:#111;transform:scaleX(0.9375);">Clear the marked area while closing</div>
<div class="a" style="left:661px;top:457px;width:76px;height:23px;background:#fff;border:1px solid #7a7a7a;"></div>
<div class="t" style="left:686.40px;top:463.32px;font-size:12.5px;color:#111;transform:scaleX(0.9604);">Hide</div>
<div class="a" style="left:743px;top:457px;width:76px;height:23px;background:#fff;border:1px solid #7a7a7a;"></div>
<div class="t" style="left:766.50px;top:463.32px;font-size:12.5px;color:#111;transform:scaleX(0.8978);">Close</div>
</body></html>
